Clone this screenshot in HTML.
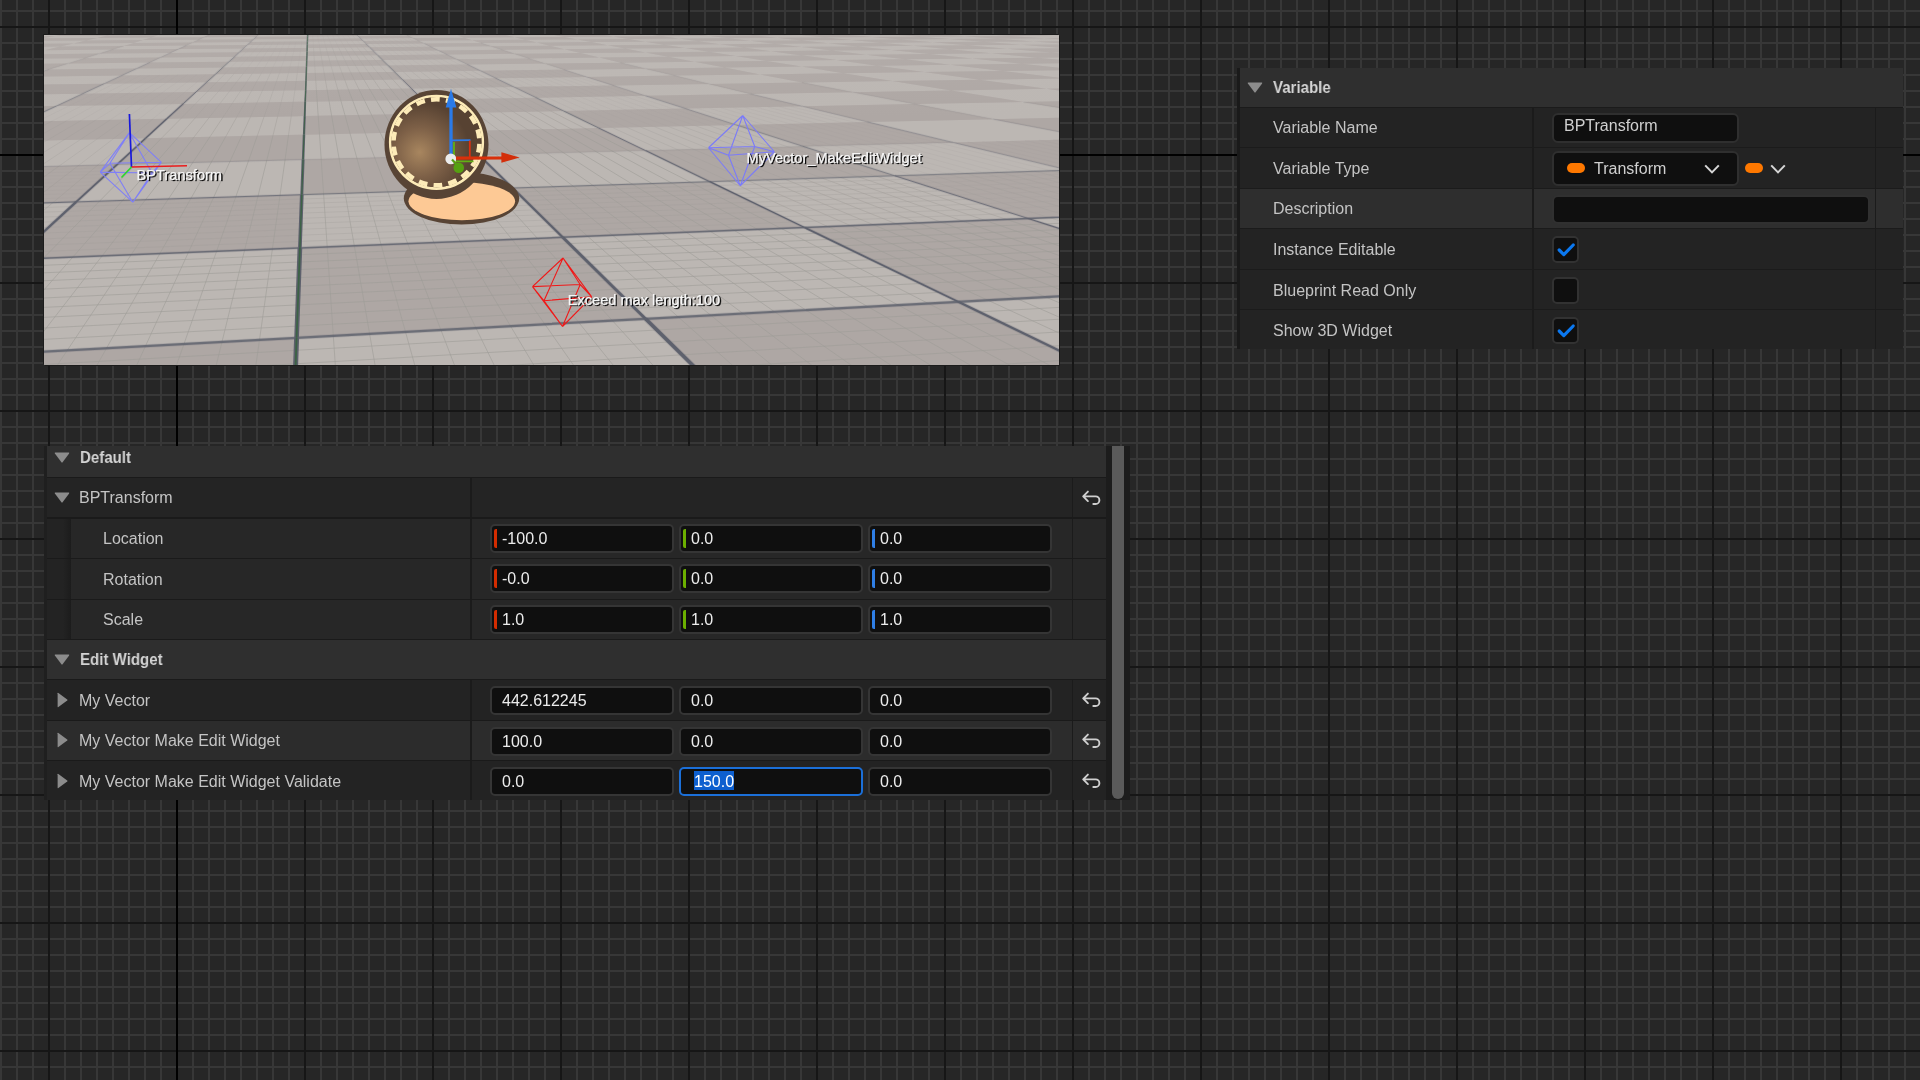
<!DOCTYPE html>
<html><head><meta charset="utf-8"><title>UE Details</title>
<style>
html,body{margin:0;padding:0}
body{width:1920px;height:1080px;overflow:hidden;position:relative;font-family:"Liberation Sans",sans-serif;
background-color:#262626;
background-image:
 linear-gradient(#000,#000), linear-gradient(#000,#000),
 linear-gradient(90deg,#161616 2px,transparent 2px), linear-gradient(180deg,#161616 2px,transparent 2px),
 linear-gradient(90deg,#373737 2px,transparent 2px), linear-gradient(180deg,#373737 2px,transparent 2px);
background-size:2px 100%,100% 2px,128px 128px,128px 128px,16px 16px,16px 16px;
background-position:176px 0,0 154px,48px 0,0 26px,0 0,0 10px;
background-repeat:no-repeat,no-repeat,repeat,repeat,repeat,repeat;}
.r{position:absolute;box-sizing:border-box}
.t{position:absolute;white-space:pre;will-change:transform}
#vp{will-change:transform;position:absolute;left:44px;top:35px;width:1015px;height:330px;overflow:hidden;box-shadow:-1px -1px 0 #1c1c1c,1px 1px 0 #1c1c1c}
</style></head><body>
<div id="vp">
<svg width="1015" height="330" viewBox="44 35 1015 330" style="position:absolute;left:0;top:0;display:block">
<defs><linearGradient id="haze" x1="0" y1="0" x2="0" y2="1"><stop offset="0" stop-color="#c2bdba" stop-opacity="0.25"/><stop offset="0.25" stop-color="#c2bdba" stop-opacity="0"/></linearGradient></defs>
<rect x="44" y="35" width="1015" height="330" fill="#b7b1ae"/>
<path d="M-15131.9 1806.6 L-10077.9 1385.9 L-4041.3 573.5 L-5193.8 636.2ZM-3038.9 382.4 L-2442.2 358.3 L-1702.7 258.8 L-2096.7 271.4ZM-1568.3 209.2 L-1276.5 201.5 L-999.3 164.1 L-1230.2 169.4ZM-995.3 141.7 L-804.6 137.9 L-660.3 118.5 L-822.6 121.4ZM-690.3 105.8 L-549.1 103.6 L-460.8 91.7 L-585.6 93.4ZM-500.8 83.5 L-388.9 82.0 L-329.4 74.0 L-430.7 75.2ZM-371.7 68.3 L-279.1 67.2 L-236.3 61.5 L-321.5 62.3ZM-278.1 57.2 L-199.2 56.5 L-166.8 52.1 L-240.4 52.8ZM-207.2 48.9 L-138.4 48.3 L-113.1 44.9 L-177.7 45.4ZM-151.5 42.3 L-90.5 41.9 L-70.2 39.1 L-127.9 39.5ZM-106.6 37.0 L-51.9 36.7 L-35.3 34.4 L-87.3 34.8ZM-69.7 32.7 L-20.1 32.4 L-6.2 30.5 L-53.7 30.8ZM-38.9 29.1 L6.5 28.8 L18.3 27.2 L-25.2 27.4ZM-12.6 26.0 L29.2 25.7 L39.3 24.4 L-0.9 24.6ZM-4041.3 573.5 L-3092.7 522.0 L-1914.6 337.1 L-2442.2 358.3ZM-1702.7 258.8 L-1342.5 247.3 L-1004.6 194.3 L-1276.5 201.5ZM-999.3 164.1 L-781.4 159.2 L-623.0 134.4 L-804.6 137.9ZM-660.3 118.5 L-504.8 115.8 L-413.2 101.4 L-549.1 103.6ZM-460.8 91.7 L-340.1 90.0 L-280.5 80.6 L-388.9 82.0ZM-329.4 74.0 L-230.9 72.8 L-188.9 66.2 L-279.1 67.2ZM-236.3 61.5 L-153.1 60.6 L-122.0 55.7 L-199.2 56.5ZM-166.8 52.1 L-94.8 51.5 L-70.9 47.7 L-138.4 48.3ZM-113.1 44.9 L-49.7 44.4 L-30.6 41.4 L-90.5 41.9ZM-70.2 39.1 L-13.5 38.7 L1.9 36.3 L-51.9 36.7ZM-35.3 34.4 L16.0 34.1 L28.8 32.1 L-20.1 32.4ZM-6.2 30.5 L40.5 30.2 L51.3 28.5 L6.5 28.8ZM18.3 27.2 L61.3 27.0 L70.5 25.5 L29.2 25.7ZM-6925.2 1123.5 L-4770.8 944.1 L-2298.3 478.8 L-3092.7 522.0ZM-1914.6 337.1 L-1444.6 318.1 L-1012.0 236.7 L-1342.5 247.3ZM-1004.6 194.3 L-750.6 187.5 L-575.6 154.6 L-781.4 159.2ZM-623.0 134.4 L-450.1 131.0 L-355.8 113.2 L-504.8 115.8ZM-413.2 101.4 L-282.4 99.4 L-223.5 88.3 L-340.1 90.0ZM-280.5 80.6 L-175.3 79.3 L-135.1 71.7 L-230.9 72.8ZM-188.9 66.2 L-101.0 65.3 L-71.8 59.8 L-153.1 60.6ZM-122.0 55.7 L-46.5 55.0 L-24.4 50.8 L-94.8 51.5ZM-70.9 47.7 L-4.8 47.2 L12.6 43.9 L-49.7 44.4ZM-30.6 41.4 L28.2 41.0 L42.2 38.3 L-13.5 38.7ZM1.9 36.3 L54.9 35.9 L66.4 33.8 L16.0 34.1ZM28.8 32.1 L77.0 31.8 L86.6 30.0 L40.5 30.2ZM51.3 28.5 L95.5 28.3 L103.7 26.7 L61.3 27.0ZM70.5 25.5 L111.3 25.3 L118.4 24.0 L79.1 24.2ZM-2298.3 478.8 L-1623.3 442.1 L-1023.4 301.2 L-1444.6 318.1ZM-1012.0 236.7 L-707.7 227.0 L-512.9 181.2 L-750.6 187.5ZM-575.6 154.6 L-380.7 150.2 L-285.2 127.7 L-450.1 131.0ZM-355.8 113.2 L-212.9 110.7 L-156.2 97.4 L-282.4 99.4ZM-223.5 88.3 L-110.7 86.7 L-73.3 77.9 L-175.3 79.3ZM-135.1 71.7 L-41.9 70.6 L-15.4 64.3 L-101.0 65.3ZM-71.8 59.8 L7.5 59.0 L27.3 54.3 L-46.5 55.0ZM-24.4 50.8 L44.7 50.2 L60.1 46.6 L-4.8 47.2ZM12.6 43.9 L73.7 43.4 L86.0 40.5 L28.2 41.0ZM42.2 38.3 L97.0 37.9 L107.0 35.6 L54.9 35.9ZM66.4 33.8 L116.2 33.4 L124.5 31.5 L77.0 31.8ZM86.6 30.0 L132.1 29.7 L139.1 28.0 L95.5 28.3ZM103.7 26.7 L145.6 26.5 L151.6 25.1 L111.3 25.3ZM-3205.3 813.8 L-2016.3 714.9 L-1042.7 410.6 L-1623.3 442.1ZM-1023.4 301.2 L-643.7 285.9 L-426.5 218.0 L-707.7 227.0ZM-512.9 181.2 L-289.9 175.3 L-196.1 146.0 L-380.7 150.2ZM-285.2 127.7 L-127.7 124.6 L-75.6 108.4 L-212.9 110.7ZM-156.2 97.4 L-34.6 95.5 L-1.5 85.2 L-110.7 86.7ZM-73.3 77.9 L25.8 76.7 L48.7 69.5 L-41.9 70.6ZM-15.4 64.3 L68.2 63.4 L84.9 58.2 L7.5 59.0ZM27.3 54.3 L99.5 53.6 L112.3 49.6 L44.7 50.2ZM60.1 46.6 L123.7 46.1 L133.8 42.9 L73.7 43.4ZM86.0 40.5 L142.8 40.1 L151.0 37.5 L97.0 37.9ZM107.0 35.6 L158.4 35.2 L165.1 33.1 L116.2 33.4ZM124.5 31.5 L171.3 31.2 L177.0 29.4 L132.1 29.7ZM139.1 28.0 L182.2 27.8 L187.0 26.3 L145.6 26.5ZM151.6 25.1 L191.5 24.9 L195.6 23.6 L157.2 23.8ZM-1042.7 410.6 L-537.9 383.1 L-299.6 272.0 L-643.7 285.9ZM-426.5 218.0 L-165.9 209.7 L-80.4 169.8 L-289.9 175.3ZM-196.1 146.0 L-20.9 142.1 L22.8 121.7 L-127.7 124.6ZM-75.6 108.4 L56.3 106.1 L82.8 93.7 L-34.6 95.5ZM-1.5 85.2 L104.2 83.7 L122.0 75.4 L25.8 76.7ZM48.7 69.5 L136.9 68.5 L149.6 62.5 L68.2 63.4ZM84.9 58.2 L160.6 57.4 L170.2 52.9 L99.5 53.6ZM112.3 49.6 L178.6 49.0 L186.0 45.6 L123.7 46.1ZM133.8 42.9 L192.7 42.5 L198.7 39.7 L142.8 40.1ZM151.0 37.5 L204.0 37.2 L208.9 34.9 L158.4 35.2ZM165.1 33.1 L213.4 32.8 L217.5 30.9 L171.3 31.2ZM177.0 29.4 L221.2 29.2 L224.6 27.6 L182.2 27.8ZM187.0 26.3 L227.8 26.1 L230.8 24.7 L191.5 24.9ZM-1082.5 637.1 L-329.8 574.5 L-95.0 359.1 L-537.9 383.1ZM-299.6 272.0 L13.6 259.4 L76.2 201.9 L-165.9 209.7ZM-80.4 169.8 L117.0 164.6 L145.6 138.3 L-20.9 142.1ZM22.8 121.7 L166.8 118.8 L183.1 103.9 L56.3 106.1ZM82.8 93.7 L196.1 91.9 L206.7 82.2 L104.2 83.7ZM122.0 75.4 L215.5 74.2 L222.8 67.4 L136.9 68.5ZM149.6 62.5 L229.1 61.7 L234.6 56.7 L160.6 57.4ZM170.2 52.9 L239.3 52.3 L243.5 48.4 L178.6 49.0ZM186.0 45.6 L247.2 45.0 L250.6 42.0 L192.7 42.5ZM198.7 39.7 L253.5 39.3 L256.2 36.8 L204.0 37.2ZM208.9 34.9 L258.7 34.5 L260.9 32.5 L213.4 32.8ZM217.5 30.9 L263.0 30.6 L264.8 28.9 L221.2 29.2ZM224.6 27.6 L266.6 27.3 L268.2 25.8 L227.8 26.1ZM230.8 24.7 L269.7 24.5 L271.0 23.2 L233.5 23.4ZM-95.0 359.1 L296.6 337.8 L299.9 247.9 L13.6 259.4ZM76.2 201.9 L301.8 194.7 L303.1 159.6 L117.0 164.6ZM145.6 138.3 L304.0 134.7 L304.7 116.1 L166.8 118.8ZM183.1 103.9 L305.2 101.7 L305.7 90.2 L196.1 91.9ZM206.7 82.2 L306.0 80.8 L306.3 73.0 L215.5 74.2ZM222.8 67.4 L306.5 66.4 L306.7 60.8 L229.1 61.7ZM234.6 56.7 L306.9 55.9 L307.1 51.6 L239.3 52.3ZM243.5 48.4 L307.2 47.9 L307.3 44.5 L247.2 45.0ZM250.6 42.0 L307.4 41.5 L307.5 38.9 L253.5 39.3ZM256.2 36.8 L307.6 36.4 L307.7 34.2 L258.7 34.5ZM260.9 32.5 L307.8 32.2 L307.8 30.3 L263.0 30.6ZM264.8 28.9 L307.9 28.6 L308.0 27.1 L266.6 27.3ZM268.2 25.8 L308.0 25.6 L308.1 24.3 L269.7 24.5ZM289.9 522.9 L809.0 479.7 L645.5 318.8 L296.6 337.8ZM299.9 247.9 L562.7 237.3 L512.6 188.0 L301.8 194.7ZM303.1 159.6 L479.0 155.0 L455.0 131.3 L304.0 134.7ZM304.7 116.1 L436.9 113.5 L422.8 99.7 L305.2 101.7ZM305.7 90.2 L411.5 88.6 L402.3 79.5 L306.0 80.8ZM306.3 73.0 L394.6 71.9 L388.1 65.5 L306.5 66.4ZM306.7 60.8 L382.5 60.0 L377.6 55.2 L306.9 55.9ZM307.1 51.6 L373.4 51.0 L369.6 47.3 L307.2 47.9ZM307.3 44.5 L366.3 44.0 L363.3 41.1 L307.4 41.5ZM307.5 38.9 L360.6 38.5 L358.2 36.1 L307.6 36.4ZM307.7 34.2 L356.0 33.9 L353.9 31.9 L307.8 32.2ZM307.8 30.3 L352.1 30.1 L350.4 28.4 L307.9 28.6ZM308.0 27.1 L348.8 26.8 L347.3 25.4 L308.0 25.6ZM308.1 24.3 L346.0 24.1 L344.7 22.8 L308.1 23.0ZM645.5 318.8 L958.3 301.8 L804.6 227.5 L562.7 237.3ZM512.6 188.0 L709.8 181.7 L645.5 150.6 L479.0 155.0ZM455.0 131.3 L598.9 128.1 L563.7 111.0 L436.9 113.5ZM422.8 99.7 L536.2 97.7 L514.0 87.0 L411.5 88.6ZM402.3 79.5 L495.7 78.2 L480.5 70.8 L394.6 71.9ZM388.1 65.5 L467.6 64.5 L456.4 59.2 L382.5 60.0ZM377.6 55.2 L446.8 54.5 L438.3 50.4 L373.4 51.0ZM369.6 47.3 L430.8 46.8 L424.2 43.5 L366.3 44.0ZM363.3 41.1 L418.2 40.7 L412.8 38.1 L360.6 38.5ZM358.2 36.1 L407.9 35.7 L403.5 33.6 L356.0 33.9ZM353.9 31.9 L399.4 31.6 L395.7 29.8 L352.1 30.1ZM350.4 28.4 L392.3 28.1 L389.1 26.6 L348.8 26.8ZM347.3 25.4 L386.2 25.2 L383.5 23.9 L346.0 24.1ZM1250.1 443.0 L1629.6 411.4 L1240.2 286.5 L958.3 301.8ZM804.6 227.5 L1028.2 218.5 L894.8 175.8 L709.8 181.7ZM645.5 150.6 L803.2 146.4 L736.4 125.0 L598.9 128.1ZM563.7 111.0 L685.5 108.6 L645.4 95.8 L536.2 97.7ZM514.0 87.0 L613.1 85.4 L586.4 76.9 L495.7 78.2ZM480.5 70.8 L564.1 69.7 L545.1 63.6 L467.6 64.5ZM456.4 59.2 L528.7 58.4 L514.4 53.8 L446.8 54.5ZM438.3 50.4 L501.9 49.8 L490.8 46.2 L430.8 46.8ZM424.2 43.5 L481.0 43.1 L472.1 40.2 L418.2 40.7ZM412.8 38.1 L464.1 37.7 L456.9 35.3 L407.9 35.7ZM403.5 33.6 L450.3 33.2 L444.3 31.3 L399.4 31.6ZM395.7 29.8 L438.8 29.5 L433.7 27.9 L392.3 28.1ZM389.1 26.6 L429.0 26.4 L424.6 25.0 L386.2 25.2ZM383.5 23.9 L420.5 23.7 L416.8 22.5 L381.0 22.7ZM1240.2 286.5 L1495.7 272.6 L1235.4 210.2 L1028.2 218.5ZM894.8 175.8 L1068.7 170.2 L952.9 142.4 L803.2 146.4ZM736.4 125.0 L867.8 122.0 L802.5 106.3 L685.5 108.6ZM645.4 95.8 L750.9 94.0 L709.1 83.9 L613.1 85.4ZM586.4 76.9 L674.5 75.6 L645.4 68.7 L564.1 69.7ZM545.1 63.6 L620.7 62.7 L599.3 57.6 L528.7 58.4ZM514.4 53.8 L580.6 53.1 L564.3 49.2 L501.9 49.8ZM490.8 46.2 L549.7 45.7 L536.8 42.6 L481.0 43.1ZM472.1 40.2 L525.2 39.8 L514.7 37.3 L464.1 37.7ZM456.9 35.3 L505.1 35.0 L496.5 32.9 L450.3 33.2ZM444.3 31.3 L488.5 31.0 L481.2 29.3 L438.8 29.5ZM433.7 27.9 L474.5 27.7 L468.3 26.2 L429.0 26.4ZM424.6 25.0 L462.5 24.8 L457.2 23.5 L420.5 23.7ZM1959.5 383.9 L2249.0 359.8 L1728.2 260.0 L1495.7 272.6ZM1235.4 210.2 L1427.9 202.4 L1232.5 165.0 L1068.7 170.2ZM952.9 142.4 L1095.2 138.7 L993.5 119.2 L867.8 122.0ZM802.5 106.3 L915.1 104.1 L852.8 92.2 L750.9 94.0ZM709.1 83.9 L802.1 82.5 L760.1 74.4 L674.5 75.6ZM645.4 68.7 L724.7 67.6 L694.4 61.8 L620.7 62.7ZM599.3 57.6 L668.3 56.8 L645.4 52.5 L580.6 53.1ZM564.3 49.2 L625.3 48.6 L607.5 45.2 L549.7 45.7ZM536.8 42.6 L591.6 42.1 L577.3 39.4 L525.2 39.8ZM514.7 37.3 L564.4 36.9 L552.6 34.7 L505.1 35.0ZM496.5 32.9 L541.9 32.6 L532.1 30.7 L488.5 31.0ZM481.2 29.3 L523.1 29.0 L514.8 27.4 L474.5 27.7ZM468.3 26.2 L507.1 25.9 L500.0 24.6 L462.5 24.8ZM457.2 23.5 L493.3 23.3 L487.2 22.1 L452.2 22.3ZM1728.2 260.0 L1940.8 248.4 L1607.3 195.2 L1427.9 202.4ZM1232.5 165.0 L1387.0 160.0 L1230.6 135.1 L1095.2 138.7ZM993.5 119.2 L1113.9 116.4 L1023.4 102.0 L915.1 104.1ZM852.8 92.2 L951.2 90.5 L892.3 81.1 L802.1 82.5ZM760.1 74.4 L843.3 73.3 L801.8 66.6 L724.7 67.6ZM694.4 61.8 L766.4 61.0 L735.7 56.1 L668.3 56.8ZM645.4 52.5 L708.9 51.8 L685.2 48.0 L625.3 48.6ZM607.5 45.2 L664.2 44.7 L645.4 41.7 L591.6 42.1ZM577.3 39.4 L628.5 39.0 L613.3 36.5 L564.4 36.9ZM552.6 34.7 L599.4 34.3 L586.7 32.3 L541.9 32.6ZM532.1 30.7 L575.1 30.5 L564.4 28.7 L523.1 29.0ZM514.8 27.4 L554.6 27.2 L545.5 25.7 L507.1 25.9ZM500.0 24.6 L537.0 24.4 L529.1 23.1 L493.3 23.3ZM2505.1 338.5 L2733.2 319.5 L2135.9 237.8 L1940.8 248.4ZM1607.3 195.2 L1774.8 188.5 L1532.9 155.4 L1387.0 160.0ZM1230.6 135.1 L1359.6 131.7 L1229.3 113.8 L1113.9 116.4ZM1023.4 102.0 L1127.7 100.0 L1046.4 88.8 L951.2 90.5ZM892.3 81.1 L979.7 79.7 L924.1 72.1 L843.3 73.3ZM801.8 66.6 L877.0 65.7 L836.7 60.1 L766.4 61.0ZM735.7 56.1 L801.6 55.4 L771.0 51.2 L708.9 51.8ZM685.2 48.0 L743.9 47.5 L719.9 44.2 L664.2 44.7ZM645.4 41.7 L698.3 41.2 L678.9 38.6 L628.5 39.0ZM613.3 36.5 L661.4 36.2 L645.4 34.0 L599.4 34.3ZM586.7 32.3 L630.9 32.0 L617.5 30.2 L575.1 30.5ZM564.4 28.7 L605.2 28.5 L593.8 26.9 L554.6 27.2ZM545.5 25.7 L583.3 25.5 L573.6 24.2 L537.0 24.4ZM529.1 23.1 L564.5 22.9 L556.0 21.8 L521.8 21.9ZM2135.9 237.8 L2315.6 228.1 L1931.7 182.1 L1774.8 188.5ZM1532.9 155.4 L1671.1 151.0 L1482.6 128.4 L1359.6 131.7ZM1229.3 113.8 L1340.0 111.3 L1228.3 98.0 L1127.7 100.0ZM1046.4 88.8 L1138.4 87.2 L1064.5 78.4 L979.7 79.7ZM924.1 72.1 L1002.8 71.0 L950.3 64.7 L877.0 65.7ZM836.7 60.1 L905.3 59.3 L866.1 54.7 L801.6 55.4ZM771.0 51.2 L831.8 50.5 L801.5 46.9 L743.9 47.5ZM719.9 44.2 L774.5 43.7 L750.3 40.8 L698.3 41.2ZM678.9 38.6 L728.5 38.2 L708.8 35.8 L661.4 36.2ZM645.4 34.0 L690.8 33.7 L674.4 31.7 L630.9 32.0ZM617.5 30.2 L659.3 29.9 L645.4 28.2 L605.2 28.5ZM593.8 26.9 L632.6 26.7 L620.7 25.3 L583.3 25.5ZM573.6 24.2 L609.7 24.0 L599.4 22.7 L564.5 22.9ZM2937.6 302.5 L3122.0 287.1 L2481.6 219.0 L2315.6 228.1ZM1931.7 182.1 L2078.8 176.2 L1802.0 146.8 L1671.1 151.0ZM1482.6 128.4 L1600.1 125.3 L1446.3 108.9 L1340.0 111.3ZM1228.3 98.0 L1325.2 96.1 L1227.5 85.7 L1138.4 87.2ZM1064.5 78.4 L1146.9 77.1 L1079.3 69.9 L1002.8 71.0ZM950.3 64.7 L1021.8 63.8 L972.3 58.5 L905.3 59.3ZM866.1 54.7 L929.2 54.0 L891.4 49.9 L831.8 50.5ZM801.5 46.9 L858.0 46.4 L828.1 43.2 L774.5 43.7ZM750.3 40.8 L801.4 40.4 L777.3 37.8 L728.5 38.2ZM708.8 35.8 L755.4 35.5 L735.5 33.4 L690.8 33.7ZM674.4 31.7 L717.3 31.4 L700.5 29.6 L659.3 29.9ZM645.4 28.2 L685.1 28.0 L670.9 26.5 L632.6 26.7ZM620.7 25.3 L657.7 25.1 L645.4 23.8 L609.7 24.0ZM599.4 22.7 L634.0 22.6 L623.3 21.4 L589.8 21.6ZM2481.6 219.0 L2635.5 210.7 L2217.1 170.6 L2078.8 176.2ZM1802.0 146.8 L1926.2 142.8 L1712.3 122.3 L1600.1 125.3ZM1446.3 108.9 L1548.4 106.6 L1418.8 94.2 L1325.2 96.1ZM1227.5 85.7 L1313.7 84.2 L1226.9 75.9 L1146.9 77.1ZM1079.3 69.9 L1153.8 68.9 L1091.5 62.9 L1021.8 63.8ZM972.3 58.5 L1037.8 57.8 L991.0 53.3 L929.2 54.0ZM891.4 49.9 L949.8 49.3 L913.4 45.8 L858.0 46.4ZM828.1 43.2 L880.8 42.7 L851.6 39.9 L801.4 40.4ZM777.3 37.8 L825.2 37.4 L801.3 35.1 L755.4 35.5ZM735.5 33.4 L779.5 33.0 L759.5 31.1 L717.3 31.4ZM700.5 29.6 L741.2 29.4 L724.3 27.8 L685.1 28.0ZM670.9 26.5 L708.7 26.3 L694.2 24.9 L657.7 25.1ZM645.4 23.8 L680.7 23.6 L668.2 22.4 L634.0 22.6ZM3289.0 273.2 L3441.1 260.6 L2778.5 202.9 L2635.5 210.7ZM2217.1 170.6 L2347.3 165.4 L2044.3 139.0 L1926.2 142.8ZM1712.3 122.3 L1819.8 119.5 L1646.7 104.4 L1548.4 106.6ZM1418.8 94.2 L1509.2 92.5 L1397.3 82.7 L1313.7 84.2ZM1226.9 75.9 L1304.6 74.6 L1226.4 67.8 L1153.8 68.9ZM1091.5 62.9 L1159.5 62.0 L1101.8 57.0 L1037.8 57.8ZM991.0 53.3 L1051.4 52.6 L1007.1 48.8 L949.8 49.3ZM913.4 45.8 L967.7 45.3 L932.5 42.3 L880.8 42.7ZM851.6 39.9 L901.0 39.5 L872.4 37.0 L825.2 37.4ZM801.3 35.1 L846.5 34.8 L822.9 32.7 L779.5 33.0ZM759.5 31.1 L801.2 30.8 L781.3 29.1 L741.2 29.4ZM724.3 27.8 L763.0 27.5 L746.0 26.0 L708.7 26.3ZM694.2 24.9 L730.3 24.7 L715.6 23.4 L680.7 23.6ZM668.2 22.4 L701.9 22.2 L689.2 21.1 L656.4 21.3ZM2778.5 202.9 L2911.7 195.7 L2470.1 160.4 L2347.3 165.4ZM2044.3 139.0 L2156.7 135.4 L1922.6 116.8 L1819.8 119.5ZM1646.7 104.4 L1741.2 102.3 L1596.5 90.7 L1509.2 92.5ZM1397.3 82.7 L1478.4 81.3 L1380.1 73.5 L1304.6 74.6ZM1226.4 67.8 L1297.0 66.8 L1225.9 61.2 L1159.5 62.0ZM1101.8 57.0 L1164.4 56.3 L1110.6 52.0 L1051.4 52.6ZM1007.1 48.8 L1063.2 48.2 L1021.0 44.8 L967.7 45.3ZM932.5 42.3 L983.4 41.8 L949.5 39.1 L901.0 39.5ZM872.4 37.0 L918.9 36.7 L891.0 34.4 L846.5 34.8ZM822.9 32.7 L865.6 32.4 L842.3 30.6 L801.2 30.8ZM781.3 29.1 L820.9 28.9 L801.2 27.3 L763.0 27.5ZM746.0 26.0 L782.9 25.8 L765.9 24.5 L730.3 24.7ZM715.6 23.4 L750.1 23.2 L735.4 22.0 L701.9 22.2ZM3580.2 249.0 L3707.8 238.4 L3036.2 188.9 L2911.7 195.7ZM2470.1 160.4 L2586.2 155.8 L2263.7 132.0 L2156.7 135.4ZM1922.6 116.8 L2021.3 114.1 L1832.3 100.2 L1741.2 102.3ZM1596.5 90.7 L1680.9 89.1 L1556.9 79.9 L1478.4 81.3ZM1380.1 73.5 L1453.5 72.3 L1365.9 65.9 L1297.0 66.8ZM1225.9 61.2 L1290.7 60.3 L1225.6 55.5 L1164.4 56.3ZM1110.6 52.0 L1168.5 51.3 L1118.2 47.6 L1063.2 48.2ZM1021.0 44.8 L1073.4 44.3 L1033.3 41.4 L983.4 41.8ZM949.5 39.1 L997.2 38.7 L964.6 36.3 L918.9 36.7ZM891.0 34.4 L934.9 34.1 L907.7 32.1 L865.6 32.4ZM842.3 30.6 L882.9 30.3 L860.0 28.6 L820.9 28.9ZM801.2 27.3 L838.8 27.0 L819.3 25.6 L782.9 25.8ZM765.9 24.5 L801.1 24.3 L784.2 23.0 L750.1 23.2ZM735.4 22.0 L768.4 21.9 L753.6 20.8 L721.6 20.9ZM3036.2 188.9 L3152.7 182.6 L2696.1 151.3 L2586.2 155.8ZM2263.7 132.0 L2365.8 128.7 L2115.9 111.6 L2021.3 114.1ZM1832.3 100.2 L1920.1 98.2 L1762.6 87.5 L1680.9 89.1ZM1556.9 79.9 L1633.2 78.6 L1524.9 71.2 L1453.5 72.3ZM1365.9 65.9 L1433.0 64.9 L1354.0 59.5 L1290.7 60.3ZM1225.6 55.5 L1285.4 54.8 L1225.3 50.7 L1168.5 51.3ZM1118.2 47.6 L1172.1 47.1 L1124.8 43.8 L1073.4 44.3ZM1033.3 41.4 L1082.4 40.9 L1044.1 38.3 L997.2 38.7ZM964.6 36.3 L1009.5 35.9 L978.0 33.8 L934.9 34.1ZM907.7 32.1 L949.2 31.8 L922.8 30.0 L882.9 30.3ZM860.0 28.6 L898.5 28.3 L876.1 26.8 L838.8 27.0ZM819.3 25.6 L855.2 25.4 L835.9 24.1 L801.1 24.3ZM784.2 23.0 L817.9 22.8 L801.1 21.7 L768.4 21.9ZM3825.3 228.6 L3933.9 219.6 L3261.9 176.6 L3152.7 182.6ZM2696.1 151.3 L2800.2 147.1 L2463.3 125.6 L2365.8 128.7ZM2115.9 111.6 L2206.7 109.2 L2004.7 96.3 L1920.1 98.2ZM1762.6 87.5 L1841.6 85.9 L1707.2 77.3 L1633.2 78.6ZM1524.9 71.2 L1594.4 70.1 L1498.4 64.0 L1433.0 64.9ZM1354.0 59.5 L1415.8 58.7 L1344.0 54.1 L1285.4 54.8ZM1225.3 50.7 L1280.9 50.1 L1225.0 46.5 L1172.1 47.1ZM1124.8 43.8 L1175.2 43.3 L1130.6 40.5 L1082.4 40.9ZM1044.1 38.3 L1090.3 37.9 L1053.8 35.6 L1009.5 35.9ZM978.0 33.8 L1020.6 33.5 L990.2 31.5 L949.2 31.8ZM922.8 30.0 L962.3 29.7 L936.6 28.1 L898.5 28.3ZM876.1 26.8 L912.8 26.6 L890.8 25.2 L855.2 25.4ZM835.9 24.1 L870.3 23.9 L851.2 22.6 L817.9 22.8ZM801.1 21.7 L833.4 21.5 L816.7 20.4 L785.3 20.6ZM3261.9 176.6 L3364.7 171.1 L2899.0 143.2 L2800.2 147.1ZM2463.3 125.6 L2556.5 122.6 L2294.0 106.9 L2206.7 109.2ZM2004.7 96.3 L2086.4 94.5 L1918.2 84.4 L1841.6 85.9ZM1707.2 77.3 L1779.0 76.1 L1662.0 69.1 L1594.4 70.1ZM1498.4 64.0 L1562.3 63.1 L1476.2 57.9 L1415.8 58.7ZM1344.0 54.1 L1401.3 53.4 L1335.3 49.5 L1280.9 50.1ZM1225.0 46.5 L1276.9 46.0 L1224.8 42.9 L1175.2 43.3ZM1130.6 40.5 L1178.0 40.1 L1135.7 37.5 L1090.3 37.9ZM1053.8 35.6 L1097.4 35.2 L1062.5 33.2 L1020.6 33.5ZM990.2 31.5 L1030.5 31.2 L1001.2 29.5 L962.3 29.7ZM936.6 28.1 L974.1 27.9 L949.1 26.4 L912.8 26.6ZM890.8 25.2 L925.9 25.0 L904.3 23.7 L870.3 23.9ZM851.2 22.6 L884.1 22.5 L865.3 21.3 L833.4 21.5ZM4034.5 211.2 L4128.0 203.4 L3461.4 165.8 L3364.7 171.1ZM2899.0 143.2 L2992.9 139.4 L2645.7 119.8 L2556.5 122.6ZM2294.0 106.9 L2378.0 104.7 L2165.3 92.7 L2086.4 94.5ZM1918.2 84.4 L1992.3 83.0 L1848.8 74.9 L1779.0 76.1ZM1662.0 69.1 L1727.9 68.0 L1624.6 62.2 L1562.3 63.1ZM1476.2 57.9 L1535.3 57.2 L1457.3 52.8 L1401.3 53.4ZM1335.3 49.5 L1388.7 48.9 L1327.8 45.5 L1276.9 46.0ZM1224.8 42.9 L1273.4 42.4 L1224.6 39.7 L1178.0 40.1ZM1135.7 37.5 L1180.4 37.2 L1140.3 34.9 L1097.4 35.2ZM1062.5 33.2 L1103.8 32.8 L1070.3 31.0 L1030.5 31.2ZM1001.2 29.5 L1039.5 29.2 L1011.1 27.6 L974.1 27.9ZM949.1 26.4 L984.9 26.1 L960.5 24.8 L925.9 25.0ZM904.3 23.7 L937.9 23.5 L916.7 22.3 L884.1 22.5ZM865.3 21.3 L897.0 21.2 L878.4 20.1 L847.7 20.3ZM3461.4 165.8 L3552.6 160.8 L3082.3 135.8 L2992.9 139.4ZM2645.7 119.8 L2731.0 117.1 L2458.8 102.6 L2378.0 104.7ZM2165.3 92.7 L2241.6 91.0 L2064.2 81.5 L1992.3 83.0ZM1848.8 74.9 L1916.7 73.7 L1792.1 67.0 L1727.9 68.0ZM1624.6 62.2 L1685.4 61.4 L1593.0 56.4 L1535.3 57.2ZM1457.3 52.8 L1512.2 52.1 L1441.0 48.3 L1388.7 48.9ZM1327.8 45.5 L1377.8 45.0 L1321.2 42.0 L1273.4 42.4ZM1224.6 39.7 L1270.4 39.2 L1224.4 36.8 L1180.4 37.2ZM1140.3 34.9 L1182.6 34.6 L1144.5 32.5 L1103.8 32.8ZM1070.3 31.0 L1109.5 30.7 L1077.4 29.0 L1039.5 29.2ZM1011.1 27.6 L1047.7 27.4 L1020.3 25.9 L984.9 26.1ZM960.5 24.8 L994.8 24.6 L971.1 23.3 L937.9 23.5ZM916.7 22.3 L948.9 22.1 L928.2 21.0 L897.0 21.2Z" fill="#bcb7b3"/>
<path d="M-5193.8 636.2 L-4041.3 573.5 L-2442.2 358.3 L-3038.9 382.4ZM-2096.7 271.4 L-1702.7 258.8 L-1276.5 201.5 L-1568.3 209.2ZM-1230.2 169.4 L-999.3 164.1 L-804.6 137.9 L-995.3 141.7ZM-822.6 121.4 L-660.3 118.5 L-549.1 103.6 L-690.3 105.8ZM-585.6 93.4 L-460.8 91.7 L-388.9 82.0 L-500.8 83.5ZM-430.7 75.2 L-329.4 74.0 L-279.1 67.2 L-371.7 68.3ZM-321.5 62.3 L-236.3 61.5 L-199.2 56.5 L-278.1 57.2ZM-240.4 52.8 L-166.8 52.1 L-138.4 48.3 L-207.2 48.9ZM-177.7 45.4 L-113.1 44.9 L-90.5 41.9 L-151.5 42.3ZM-127.9 39.5 L-70.2 39.1 L-51.9 36.7 L-106.6 37.0ZM-87.3 34.8 L-35.3 34.4 L-20.1 32.4 L-69.7 32.7ZM-53.7 30.8 L-6.2 30.5 L6.5 28.8 L-38.9 29.1ZM-25.2 27.4 L18.3 27.2 L29.2 25.7 L-12.6 26.0ZM-10077.9 1385.9 L-6925.2 1123.5 L-3092.7 522.0 L-4041.3 573.5ZM-2442.2 358.3 L-1914.6 337.1 L-1342.5 247.3 L-1702.7 258.8ZM-1276.5 201.5 L-1004.6 194.3 L-781.4 159.2 L-999.3 164.1ZM-804.6 137.9 L-623.0 134.4 L-504.8 115.8 L-660.3 118.5ZM-549.1 103.6 L-413.2 101.4 L-340.1 90.0 L-460.8 91.7ZM-388.9 82.0 L-280.5 80.6 L-230.9 72.8 L-329.4 74.0ZM-279.1 67.2 L-188.9 66.2 L-153.1 60.6 L-236.3 61.5ZM-199.2 56.5 L-122.0 55.7 L-94.8 51.5 L-166.8 52.1ZM-138.4 48.3 L-70.9 47.7 L-49.7 44.4 L-113.1 44.9ZM-90.5 41.9 L-30.6 41.4 L-13.5 38.7 L-70.2 39.1ZM-51.9 36.7 L1.9 36.3 L16.0 34.1 L-35.3 34.4ZM-20.1 32.4 L28.8 32.1 L40.5 30.2 L-6.2 30.5ZM6.5 28.8 L51.3 28.5 L61.3 27.0 L18.3 27.2ZM29.2 25.7 L70.5 25.5 L79.1 24.2 L39.3 24.4ZM-3092.7 522.0 L-2298.3 478.8 L-1444.6 318.1 L-1914.6 337.1ZM-1342.5 247.3 L-1012.0 236.7 L-750.6 187.5 L-1004.6 194.3ZM-781.4 159.2 L-575.6 154.6 L-450.1 131.0 L-623.0 134.4ZM-504.8 115.8 L-355.8 113.2 L-282.4 99.4 L-413.2 101.4ZM-340.1 90.0 L-223.5 88.3 L-175.3 79.3 L-280.5 80.6ZM-230.9 72.8 L-135.1 71.7 L-101.0 65.3 L-188.9 66.2ZM-153.1 60.6 L-71.8 59.8 L-46.5 55.0 L-122.0 55.7ZM-94.8 51.5 L-24.4 50.8 L-4.8 47.2 L-70.9 47.7ZM-49.7 44.4 L12.6 43.9 L28.2 41.0 L-30.6 41.4ZM-13.5 38.7 L42.2 38.3 L54.9 35.9 L1.9 36.3ZM16.0 34.1 L66.4 33.8 L77.0 31.8 L28.8 32.1ZM40.5 30.2 L86.6 30.0 L95.5 28.3 L51.3 28.5ZM61.3 27.0 L103.7 26.7 L111.3 25.3 L70.5 25.5ZM-4770.8 944.1 L-3205.3 813.8 L-1623.3 442.1 L-2298.3 478.8ZM-1444.6 318.1 L-1023.4 301.2 L-707.7 227.0 L-1012.0 236.7ZM-750.6 187.5 L-512.9 181.2 L-380.7 150.2 L-575.6 154.6ZM-450.1 131.0 L-285.2 127.7 L-212.9 110.7 L-355.8 113.2ZM-282.4 99.4 L-156.2 97.4 L-110.7 86.7 L-223.5 88.3ZM-175.3 79.3 L-73.3 77.9 L-41.9 70.6 L-135.1 71.7ZM-101.0 65.3 L-15.4 64.3 L7.5 59.0 L-71.8 59.8ZM-46.5 55.0 L27.3 54.3 L44.7 50.2 L-24.4 50.8ZM-4.8 47.2 L60.1 46.6 L73.7 43.4 L12.6 43.9ZM28.2 41.0 L86.0 40.5 L97.0 37.9 L42.2 38.3ZM54.9 35.9 L107.0 35.6 L116.2 33.4 L66.4 33.8ZM77.0 31.8 L124.5 31.5 L132.1 29.7 L86.6 30.0ZM95.5 28.3 L139.1 28.0 L145.6 26.5 L103.7 26.7ZM111.3 25.3 L151.6 25.1 L157.2 23.8 L118.4 24.0ZM-1623.3 442.1 L-1042.7 410.6 L-643.7 285.9 L-1023.4 301.2ZM-707.7 227.0 L-426.5 218.0 L-289.9 175.3 L-512.9 181.2ZM-380.7 150.2 L-196.1 146.0 L-127.7 124.6 L-285.2 127.7ZM-212.9 110.7 L-75.6 108.4 L-34.6 95.5 L-156.2 97.4ZM-110.7 86.7 L-1.5 85.2 L25.8 76.7 L-73.3 77.9ZM-41.9 70.6 L48.7 69.5 L68.2 63.4 L-15.4 64.3ZM7.5 59.0 L84.9 58.2 L99.5 53.6 L27.3 54.3ZM44.7 50.2 L112.3 49.6 L123.7 46.1 L60.1 46.6ZM73.7 43.4 L133.8 42.9 L142.8 40.1 L86.0 40.5ZM97.0 37.9 L151.0 37.5 L158.4 35.2 L107.0 35.6ZM116.2 33.4 L165.1 33.1 L171.3 31.2 L124.5 31.5ZM132.1 29.7 L177.0 29.4 L182.2 27.8 L139.1 28.0ZM145.6 26.5 L187.0 26.3 L191.5 24.9 L151.6 25.1ZM-2016.3 714.9 L-1082.5 637.1 L-537.9 383.1 L-1042.7 410.6ZM-643.7 285.9 L-299.6 272.0 L-165.9 209.7 L-426.5 218.0ZM-289.9 175.3 L-80.4 169.8 L-20.9 142.1 L-196.1 146.0ZM-127.7 124.6 L22.8 121.7 L56.3 106.1 L-75.6 108.4ZM-34.6 95.5 L82.8 93.7 L104.2 83.7 L-1.5 85.2ZM25.8 76.7 L122.0 75.4 L136.9 68.5 L48.7 69.5ZM68.2 63.4 L149.6 62.5 L160.6 57.4 L84.9 58.2ZM99.5 53.6 L170.2 52.9 L178.6 49.0 L112.3 49.6ZM123.7 46.1 L186.0 45.6 L192.7 42.5 L133.8 42.9ZM142.8 40.1 L198.7 39.7 L204.0 37.2 L151.0 37.5ZM158.4 35.2 L208.9 34.9 L213.4 32.8 L165.1 33.1ZM171.3 31.2 L217.5 30.9 L221.2 29.2 L177.0 29.4ZM182.2 27.8 L224.6 27.6 L227.8 26.1 L187.0 26.3ZM191.5 24.9 L230.8 24.7 L233.5 23.4 L195.6 23.6ZM-537.9 383.1 L-95.0 359.1 L13.6 259.4 L-299.6 272.0ZM-165.9 209.7 L76.2 201.9 L117.0 164.6 L-80.4 169.8ZM-20.9 142.1 L145.6 138.3 L166.8 118.8 L22.8 121.7ZM56.3 106.1 L183.1 103.9 L196.1 91.9 L82.8 93.7ZM104.2 83.7 L206.7 82.2 L215.5 74.2 L122.0 75.4ZM136.9 68.5 L222.8 67.4 L229.1 61.7 L149.6 62.5ZM160.6 57.4 L234.6 56.7 L239.3 52.3 L170.2 52.9ZM178.6 49.0 L243.5 48.4 L247.2 45.0 L186.0 45.6ZM192.7 42.5 L250.6 42.0 L253.5 39.3 L198.7 39.7ZM204.0 37.2 L256.2 36.8 L258.7 34.5 L208.9 34.9ZM213.4 32.8 L260.9 32.5 L263.0 30.6 L217.5 30.9ZM221.2 29.2 L264.8 28.9 L266.6 27.3 L224.6 27.6ZM227.8 26.1 L268.2 25.8 L269.7 24.5 L230.8 24.7ZM-329.8 574.5 L289.9 522.9 L296.6 337.8 L-95.0 359.1ZM13.6 259.4 L299.9 247.9 L301.8 194.7 L76.2 201.9ZM117.0 164.6 L303.1 159.6 L304.0 134.7 L145.6 138.3ZM166.8 118.8 L304.7 116.1 L305.2 101.7 L183.1 103.9ZM196.1 91.9 L305.7 90.2 L306.0 80.8 L206.7 82.2ZM215.5 74.2 L306.3 73.0 L306.5 66.4 L222.8 67.4ZM229.1 61.7 L306.7 60.8 L306.9 55.9 L234.6 56.7ZM239.3 52.3 L307.1 51.6 L307.2 47.9 L243.5 48.4ZM247.2 45.0 L307.3 44.5 L307.4 41.5 L250.6 42.0ZM253.5 39.3 L307.5 38.9 L307.6 36.4 L256.2 36.8ZM258.7 34.5 L307.7 34.2 L307.8 32.2 L260.9 32.5ZM263.0 30.6 L307.8 30.3 L307.9 28.6 L264.8 28.9ZM266.6 27.3 L308.0 27.1 L308.0 25.6 L268.2 25.8ZM269.7 24.5 L308.1 24.3 L308.1 23.0 L271.0 23.2ZM296.6 337.8 L645.5 318.8 L562.7 237.3 L299.9 247.9ZM301.8 194.7 L512.6 188.0 L479.0 155.0 L303.1 159.6ZM304.0 134.7 L455.0 131.3 L436.9 113.5 L304.7 116.1ZM305.2 101.7 L422.8 99.7 L411.5 88.6 L305.7 90.2ZM306.0 80.8 L402.3 79.5 L394.6 71.9 L306.3 73.0ZM306.5 66.4 L388.1 65.5 L382.5 60.0 L306.7 60.8ZM306.9 55.9 L377.6 55.2 L373.4 51.0 L307.1 51.6ZM307.2 47.9 L369.6 47.3 L366.3 44.0 L307.3 44.5ZM307.4 41.5 L363.3 41.1 L360.6 38.5 L307.5 38.9ZM307.6 36.4 L358.2 36.1 L356.0 33.9 L307.7 34.2ZM307.8 32.2 L353.9 31.9 L352.1 30.1 L307.8 30.3ZM307.9 28.6 L350.4 28.4 L348.8 26.8 L308.0 27.1ZM308.0 25.6 L347.3 25.4 L346.0 24.1 L308.1 24.3ZM809.0 479.7 L1250.1 443.0 L958.3 301.8 L645.5 318.8ZM562.7 237.3 L804.6 227.5 L709.8 181.7 L512.6 188.0ZM479.0 155.0 L645.5 150.6 L598.9 128.1 L455.0 131.3ZM436.9 113.5 L563.7 111.0 L536.2 97.7 L422.8 99.7ZM411.5 88.6 L514.0 87.0 L495.7 78.2 L402.3 79.5ZM394.6 71.9 L480.5 70.8 L467.6 64.5 L388.1 65.5ZM382.5 60.0 L456.4 59.2 L446.8 54.5 L377.6 55.2ZM373.4 51.0 L438.3 50.4 L430.8 46.8 L369.6 47.3ZM366.3 44.0 L424.2 43.5 L418.2 40.7 L363.3 41.1ZM360.6 38.5 L412.8 38.1 L407.9 35.7 L358.2 36.1ZM356.0 33.9 L403.5 33.6 L399.4 31.6 L353.9 31.9ZM352.1 30.1 L395.7 29.8 L392.3 28.1 L350.4 28.4ZM348.8 26.8 L389.1 26.6 L386.2 25.2 L347.3 25.4ZM346.0 24.1 L383.5 23.9 L381.0 22.7 L344.7 22.8ZM958.3 301.8 L1240.2 286.5 L1028.2 218.5 L804.6 227.5ZM709.8 181.7 L894.8 175.8 L803.2 146.4 L645.5 150.6ZM598.9 128.1 L736.4 125.0 L685.5 108.6 L563.7 111.0ZM536.2 97.7 L645.4 95.8 L613.1 85.4 L514.0 87.0ZM495.7 78.2 L586.4 76.9 L564.1 69.7 L480.5 70.8ZM467.6 64.5 L545.1 63.6 L528.7 58.4 L456.4 59.2ZM446.8 54.5 L514.4 53.8 L501.9 49.8 L438.3 50.4ZM430.8 46.8 L490.8 46.2 L481.0 43.1 L424.2 43.5ZM418.2 40.7 L472.1 40.2 L464.1 37.7 L412.8 38.1ZM407.9 35.7 L456.9 35.3 L450.3 33.2 L403.5 33.6ZM399.4 31.6 L444.3 31.3 L438.8 29.5 L395.7 29.8ZM392.3 28.1 L433.7 27.9 L429.0 26.4 L389.1 26.6ZM386.2 25.2 L424.6 25.0 L420.5 23.7 L383.5 23.9ZM1629.6 411.4 L1959.5 383.9 L1495.7 272.6 L1240.2 286.5ZM1028.2 218.5 L1235.4 210.2 L1068.7 170.2 L894.8 175.8ZM803.2 146.4 L952.9 142.4 L867.8 122.0 L736.4 125.0ZM685.5 108.6 L802.5 106.3 L750.9 94.0 L645.4 95.8ZM613.1 85.4 L709.1 83.9 L674.5 75.6 L586.4 76.9ZM564.1 69.7 L645.4 68.7 L620.7 62.7 L545.1 63.6ZM528.7 58.4 L599.3 57.6 L580.6 53.1 L514.4 53.8ZM501.9 49.8 L564.3 49.2 L549.7 45.7 L490.8 46.2ZM481.0 43.1 L536.8 42.6 L525.2 39.8 L472.1 40.2ZM464.1 37.7 L514.7 37.3 L505.1 35.0 L456.9 35.3ZM450.3 33.2 L496.5 32.9 L488.5 31.0 L444.3 31.3ZM438.8 29.5 L481.2 29.3 L474.5 27.7 L433.7 27.9ZM429.0 26.4 L468.3 26.2 L462.5 24.8 L424.6 25.0ZM420.5 23.7 L457.2 23.5 L452.2 22.3 L416.8 22.5ZM1495.7 272.6 L1728.2 260.0 L1427.9 202.4 L1235.4 210.2ZM1068.7 170.2 L1232.5 165.0 L1095.2 138.7 L952.9 142.4ZM867.8 122.0 L993.5 119.2 L915.1 104.1 L802.5 106.3ZM750.9 94.0 L852.8 92.2 L802.1 82.5 L709.1 83.9ZM674.5 75.6 L760.1 74.4 L724.7 67.6 L645.4 68.7ZM620.7 62.7 L694.4 61.8 L668.3 56.8 L599.3 57.6ZM580.6 53.1 L645.4 52.5 L625.3 48.6 L564.3 49.2ZM549.7 45.7 L607.5 45.2 L591.6 42.1 L536.8 42.6ZM525.2 39.8 L577.3 39.4 L564.4 36.9 L514.7 37.3ZM505.1 35.0 L552.6 34.7 L541.9 32.6 L496.5 32.9ZM488.5 31.0 L532.1 30.7 L523.1 29.0 L481.2 29.3ZM474.5 27.7 L514.8 27.4 L507.1 25.9 L468.3 26.2ZM462.5 24.8 L500.0 24.6 L493.3 23.3 L457.2 23.5ZM2249.0 359.8 L2505.1 338.5 L1940.8 248.4 L1728.2 260.0ZM1427.9 202.4 L1607.3 195.2 L1387.0 160.0 L1232.5 165.0ZM1095.2 138.7 L1230.6 135.1 L1113.9 116.4 L993.5 119.2ZM915.1 104.1 L1023.4 102.0 L951.2 90.5 L852.8 92.2ZM802.1 82.5 L892.3 81.1 L843.3 73.3 L760.1 74.4ZM724.7 67.6 L801.8 66.6 L766.4 61.0 L694.4 61.8ZM668.3 56.8 L735.7 56.1 L708.9 51.8 L645.4 52.5ZM625.3 48.6 L685.2 48.0 L664.2 44.7 L607.5 45.2ZM591.6 42.1 L645.4 41.7 L628.5 39.0 L577.3 39.4ZM564.4 36.9 L613.3 36.5 L599.4 34.3 L552.6 34.7ZM541.9 32.6 L586.7 32.3 L575.1 30.5 L532.1 30.7ZM523.1 29.0 L564.4 28.7 L554.6 27.2 L514.8 27.4ZM507.1 25.9 L545.5 25.7 L537.0 24.4 L500.0 24.6ZM493.3 23.3 L529.1 23.1 L521.8 21.9 L487.2 22.1ZM1940.8 248.4 L2135.9 237.8 L1774.8 188.5 L1607.3 195.2ZM1387.0 160.0 L1532.9 155.4 L1359.6 131.7 L1230.6 135.1ZM1113.9 116.4 L1229.3 113.8 L1127.7 100.0 L1023.4 102.0ZM951.2 90.5 L1046.4 88.8 L979.7 79.7 L892.3 81.1ZM843.3 73.3 L924.1 72.1 L877.0 65.7 L801.8 66.6ZM766.4 61.0 L836.7 60.1 L801.6 55.4 L735.7 56.1ZM708.9 51.8 L771.0 51.2 L743.9 47.5 L685.2 48.0ZM664.2 44.7 L719.9 44.2 L698.3 41.2 L645.4 41.7ZM628.5 39.0 L678.9 38.6 L661.4 36.2 L613.3 36.5ZM599.4 34.3 L645.4 34.0 L630.9 32.0 L586.7 32.3ZM575.1 30.5 L617.5 30.2 L605.2 28.5 L564.4 28.7ZM554.6 27.2 L593.8 26.9 L583.3 25.5 L545.5 25.7ZM537.0 24.4 L573.6 24.2 L564.5 22.9 L529.1 23.1ZM2733.2 319.5 L2937.6 302.5 L2315.6 228.1 L2135.9 237.8ZM1774.8 188.5 L1931.7 182.1 L1671.1 151.0 L1532.9 155.4ZM1359.6 131.7 L1482.6 128.4 L1340.0 111.3 L1229.3 113.8ZM1127.7 100.0 L1228.3 98.0 L1138.4 87.2 L1046.4 88.8ZM979.7 79.7 L1064.5 78.4 L1002.8 71.0 L924.1 72.1ZM877.0 65.7 L950.3 64.7 L905.3 59.3 L836.7 60.1ZM801.6 55.4 L866.1 54.7 L831.8 50.5 L771.0 51.2ZM743.9 47.5 L801.5 46.9 L774.5 43.7 L719.9 44.2ZM698.3 41.2 L750.3 40.8 L728.5 38.2 L678.9 38.6ZM661.4 36.2 L708.8 35.8 L690.8 33.7 L645.4 34.0ZM630.9 32.0 L674.4 31.7 L659.3 29.9 L617.5 30.2ZM605.2 28.5 L645.4 28.2 L632.6 26.7 L593.8 26.9ZM583.3 25.5 L620.7 25.3 L609.7 24.0 L573.6 24.2ZM564.5 22.9 L599.4 22.7 L589.8 21.6 L556.0 21.8ZM2315.6 228.1 L2481.6 219.0 L2078.8 176.2 L1931.7 182.1ZM1671.1 151.0 L1802.0 146.8 L1600.1 125.3 L1482.6 128.4ZM1340.0 111.3 L1446.3 108.9 L1325.2 96.1 L1228.3 98.0ZM1138.4 87.2 L1227.5 85.7 L1146.9 77.1 L1064.5 78.4ZM1002.8 71.0 L1079.3 69.9 L1021.8 63.8 L950.3 64.7ZM905.3 59.3 L972.3 58.5 L929.2 54.0 L866.1 54.7ZM831.8 50.5 L891.4 49.9 L858.0 46.4 L801.5 46.9ZM774.5 43.7 L828.1 43.2 L801.4 40.4 L750.3 40.8ZM728.5 38.2 L777.3 37.8 L755.4 35.5 L708.8 35.8ZM690.8 33.7 L735.5 33.4 L717.3 31.4 L674.4 31.7ZM659.3 29.9 L700.5 29.6 L685.1 28.0 L645.4 28.2ZM632.6 26.7 L670.9 26.5 L657.7 25.1 L620.7 25.3ZM609.7 24.0 L645.4 23.8 L634.0 22.6 L599.4 22.7ZM3122.0 287.1 L3289.0 273.2 L2635.5 210.7 L2481.6 219.0ZM2078.8 176.2 L2217.1 170.6 L1926.2 142.8 L1802.0 146.8ZM1600.1 125.3 L1712.3 122.3 L1548.4 106.6 L1446.3 108.9ZM1325.2 96.1 L1418.8 94.2 L1313.7 84.2 L1227.5 85.7ZM1146.9 77.1 L1226.9 75.9 L1153.8 68.9 L1079.3 69.9ZM1021.8 63.8 L1091.5 62.9 L1037.8 57.8 L972.3 58.5ZM929.2 54.0 L991.0 53.3 L949.8 49.3 L891.4 49.9ZM858.0 46.4 L913.4 45.8 L880.8 42.7 L828.1 43.2ZM801.4 40.4 L851.6 39.9 L825.2 37.4 L777.3 37.8ZM755.4 35.5 L801.3 35.1 L779.5 33.0 L735.5 33.4ZM717.3 31.4 L759.5 31.1 L741.2 29.4 L700.5 29.6ZM685.1 28.0 L724.3 27.8 L708.7 26.3 L670.9 26.5ZM657.7 25.1 L694.2 24.9 L680.7 23.6 L645.4 23.8ZM634.0 22.6 L668.2 22.4 L656.4 21.3 L623.3 21.4ZM2635.5 210.7 L2778.5 202.9 L2347.3 165.4 L2217.1 170.6ZM1926.2 142.8 L2044.3 139.0 L1819.8 119.5 L1712.3 122.3ZM1548.4 106.6 L1646.7 104.4 L1509.2 92.5 L1418.8 94.2ZM1313.7 84.2 L1397.3 82.7 L1304.6 74.6 L1226.9 75.9ZM1153.8 68.9 L1226.4 67.8 L1159.5 62.0 L1091.5 62.9ZM1037.8 57.8 L1101.8 57.0 L1051.4 52.6 L991.0 53.3ZM949.8 49.3 L1007.1 48.8 L967.7 45.3 L913.4 45.8ZM880.8 42.7 L932.5 42.3 L901.0 39.5 L851.6 39.9ZM825.2 37.4 L872.4 37.0 L846.5 34.8 L801.3 35.1ZM779.5 33.0 L822.9 32.7 L801.2 30.8 L759.5 31.1ZM741.2 29.4 L781.3 29.1 L763.0 27.5 L724.3 27.8ZM708.7 26.3 L746.0 26.0 L730.3 24.7 L694.2 24.9ZM680.7 23.6 L715.6 23.4 L701.9 22.2 L668.2 22.4ZM3441.1 260.6 L3580.2 249.0 L2911.7 195.7 L2778.5 202.9ZM2347.3 165.4 L2470.1 160.4 L2156.7 135.4 L2044.3 139.0ZM1819.8 119.5 L1922.6 116.8 L1741.2 102.3 L1646.7 104.4ZM1509.2 92.5 L1596.5 90.7 L1478.4 81.3 L1397.3 82.7ZM1304.6 74.6 L1380.1 73.5 L1297.0 66.8 L1226.4 67.8ZM1159.5 62.0 L1225.9 61.2 L1164.4 56.3 L1101.8 57.0ZM1051.4 52.6 L1110.6 52.0 L1063.2 48.2 L1007.1 48.8ZM967.7 45.3 L1021.0 44.8 L983.4 41.8 L932.5 42.3ZM901.0 39.5 L949.5 39.1 L918.9 36.7 L872.4 37.0ZM846.5 34.8 L891.0 34.4 L865.6 32.4 L822.9 32.7ZM801.2 30.8 L842.3 30.6 L820.9 28.9 L781.3 29.1ZM763.0 27.5 L801.2 27.3 L782.9 25.8 L746.0 26.0ZM730.3 24.7 L765.9 24.5 L750.1 23.2 L715.6 23.4ZM701.9 22.2 L735.4 22.0 L721.6 20.9 L689.2 21.1ZM2911.7 195.7 L3036.2 188.9 L2586.2 155.8 L2470.1 160.4ZM2156.7 135.4 L2263.7 132.0 L2021.3 114.1 L1922.6 116.8ZM1741.2 102.3 L1832.3 100.2 L1680.9 89.1 L1596.5 90.7ZM1478.4 81.3 L1556.9 79.9 L1453.5 72.3 L1380.1 73.5ZM1297.0 66.8 L1365.9 65.9 L1290.7 60.3 L1225.9 61.2ZM1164.4 56.3 L1225.6 55.5 L1168.5 51.3 L1110.6 52.0ZM1063.2 48.2 L1118.2 47.6 L1073.4 44.3 L1021.0 44.8ZM983.4 41.8 L1033.3 41.4 L997.2 38.7 L949.5 39.1ZM918.9 36.7 L964.6 36.3 L934.9 34.1 L891.0 34.4ZM865.6 32.4 L907.7 32.1 L882.9 30.3 L842.3 30.6ZM820.9 28.9 L860.0 28.6 L838.8 27.0 L801.2 27.3ZM782.9 25.8 L819.3 25.6 L801.1 24.3 L765.9 24.5ZM750.1 23.2 L784.2 23.0 L768.4 21.9 L735.4 22.0ZM3707.8 238.4 L3825.3 228.6 L3152.7 182.6 L3036.2 188.9ZM2586.2 155.8 L2696.1 151.3 L2365.8 128.7 L2263.7 132.0ZM2021.3 114.1 L2115.9 111.6 L1920.1 98.2 L1832.3 100.2ZM1680.9 89.1 L1762.6 87.5 L1633.2 78.6 L1556.9 79.9ZM1453.5 72.3 L1524.9 71.2 L1433.0 64.9 L1365.9 65.9ZM1290.7 60.3 L1354.0 59.5 L1285.4 54.8 L1225.6 55.5ZM1168.5 51.3 L1225.3 50.7 L1172.1 47.1 L1118.2 47.6ZM1073.4 44.3 L1124.8 43.8 L1082.4 40.9 L1033.3 41.4ZM997.2 38.7 L1044.1 38.3 L1009.5 35.9 L964.6 36.3ZM934.9 34.1 L978.0 33.8 L949.2 31.8 L907.7 32.1ZM882.9 30.3 L922.8 30.0 L898.5 28.3 L860.0 28.6ZM838.8 27.0 L876.1 26.8 L855.2 25.4 L819.3 25.6ZM801.1 24.3 L835.9 24.1 L817.9 22.8 L784.2 23.0ZM768.4 21.9 L801.1 21.7 L785.3 20.6 L753.6 20.8ZM3152.7 182.6 L3261.9 176.6 L2800.2 147.1 L2696.1 151.3ZM2365.8 128.7 L2463.3 125.6 L2206.7 109.2 L2115.9 111.6ZM1920.1 98.2 L2004.7 96.3 L1841.6 85.9 L1762.6 87.5ZM1633.2 78.6 L1707.2 77.3 L1594.4 70.1 L1524.9 71.2ZM1433.0 64.9 L1498.4 64.0 L1415.8 58.7 L1354.0 59.5ZM1285.4 54.8 L1344.0 54.1 L1280.9 50.1 L1225.3 50.7ZM1172.1 47.1 L1225.0 46.5 L1175.2 43.3 L1124.8 43.8ZM1082.4 40.9 L1130.6 40.5 L1090.3 37.9 L1044.1 38.3ZM1009.5 35.9 L1053.8 35.6 L1020.6 33.5 L978.0 33.8ZM949.2 31.8 L990.2 31.5 L962.3 29.7 L922.8 30.0ZM898.5 28.3 L936.6 28.1 L912.8 26.6 L876.1 26.8ZM855.2 25.4 L890.8 25.2 L870.3 23.9 L835.9 24.1ZM817.9 22.8 L851.2 22.6 L833.4 21.5 L801.1 21.7ZM3933.9 219.6 L4034.5 211.2 L3364.7 171.1 L3261.9 176.6ZM2800.2 147.1 L2899.0 143.2 L2556.5 122.6 L2463.3 125.6ZM2206.7 109.2 L2294.0 106.9 L2086.4 94.5 L2004.7 96.3ZM1841.6 85.9 L1918.2 84.4 L1779.0 76.1 L1707.2 77.3ZM1594.4 70.1 L1662.0 69.1 L1562.3 63.1 L1498.4 64.0ZM1415.8 58.7 L1476.2 57.9 L1401.3 53.4 L1344.0 54.1ZM1280.9 50.1 L1335.3 49.5 L1276.9 46.0 L1225.0 46.5ZM1175.2 43.3 L1224.8 42.9 L1178.0 40.1 L1130.6 40.5ZM1090.3 37.9 L1135.7 37.5 L1097.4 35.2 L1053.8 35.6ZM1020.6 33.5 L1062.5 33.2 L1030.5 31.2 L990.2 31.5ZM962.3 29.7 L1001.2 29.5 L974.1 27.9 L936.6 28.1ZM912.8 26.6 L949.1 26.4 L925.9 25.0 L890.8 25.2ZM870.3 23.9 L904.3 23.7 L884.1 22.5 L851.2 22.6ZM833.4 21.5 L865.3 21.3 L847.7 20.3 L816.7 20.4ZM3364.7 171.1 L3461.4 165.8 L2992.9 139.4 L2899.0 143.2ZM2556.5 122.6 L2645.7 119.8 L2378.0 104.7 L2294.0 106.9ZM2086.4 94.5 L2165.3 92.7 L1992.3 83.0 L1918.2 84.4ZM1779.0 76.1 L1848.8 74.9 L1727.9 68.0 L1662.0 69.1ZM1562.3 63.1 L1624.6 62.2 L1535.3 57.2 L1476.2 57.9ZM1401.3 53.4 L1457.3 52.8 L1388.7 48.9 L1335.3 49.5ZM1276.9 46.0 L1327.8 45.5 L1273.4 42.4 L1224.8 42.9ZM1178.0 40.1 L1224.6 39.7 L1180.4 37.2 L1135.7 37.5ZM1097.4 35.2 L1140.3 34.9 L1103.8 32.8 L1062.5 33.2ZM1030.5 31.2 L1070.3 31.0 L1039.5 29.2 L1001.2 29.5ZM974.1 27.9 L1011.1 27.6 L984.9 26.1 L949.1 26.4ZM925.9 25.0 L960.5 24.8 L937.9 23.5 L904.3 23.7ZM884.1 22.5 L916.7 22.3 L897.0 21.2 L865.3 21.3ZM4128.0 203.4 L4215.2 196.1 L3552.6 160.8 L3461.4 165.8ZM2992.9 139.4 L3082.3 135.8 L2731.0 117.1 L2645.7 119.8ZM2378.0 104.7 L2458.8 102.6 L2241.6 91.0 L2165.3 92.7ZM1992.3 83.0 L2064.2 81.5 L1916.7 73.7 L1848.8 74.9ZM1727.9 68.0 L1792.1 67.0 L1685.4 61.4 L1624.6 62.2ZM1535.3 57.2 L1593.0 56.4 L1512.2 52.1 L1457.3 52.8ZM1388.7 48.9 L1441.0 48.3 L1377.8 45.0 L1327.8 45.5ZM1273.4 42.4 L1321.2 42.0 L1270.4 39.2 L1224.6 39.7ZM1180.4 37.2 L1224.4 36.8 L1182.6 34.6 L1140.3 34.9ZM1103.8 32.8 L1144.5 32.5 L1109.5 30.7 L1070.3 31.0ZM1039.5 29.2 L1077.4 29.0 L1047.7 27.4 L1011.1 27.6ZM984.9 26.1 L1020.3 25.9 L994.8 24.6 L960.5 24.8ZM937.9 23.5 L971.1 23.3 L948.9 22.1 L916.7 22.3ZM897.0 21.2 L928.2 21.0 L908.8 20.0 L878.4 20.1Z" fill="#aea7a4"/>
<path d="M-14493.4 1753.4L-5067.6 629.3M-13891.1 1703.3L-4943.9 622.6M-13322.2 1656.0L-4822.9 616.0M-12783.9 1611.2L-4704.3 609.6M-12273.8 1568.7L-4588.2 603.3M-11789.8 1528.4L-4474.4 597.1M-11329.9 1490.1L-4362.9 591.0M-10892.3 1453.7L-4253.6 585.1M-10475.5 1419.0L-4146.4 579.2M-12770.0 1528.4L-8812.3 1215.6M-11034.7 1324.1L-7821.6 1082.3M-9706.0 1167.6L-7025.0 975.1M-8655.9 1043.9L-6370.6 887.0M-7805.1 943.7L-5823.4 813.3M-7101.8 860.9L-5359.0 750.9M-6510.7 791.3L-4960.0 697.2M-6006.9 731.9L-4613.5 650.5M-5572.4 680.7L-4309.8 609.7M-4861.1 597.0L-3802.4 541.4M-4566.2 562.3L-3588.3 512.6M-4303.2 531.3L-3395.4 486.6M-4067.1 503.5L-3220.7 463.1M-3854.0 478.4L-3061.8 441.7M-3660.7 455.6L-2916.5 422.2M-3484.6 434.9L-2783.2 404.2M-3323.4 415.9L-2660.6 387.7M-3175.3 398.4L-2547.2 372.5M-2912.7 367.5L-2344.7 345.2M-2795.7 353.7L-2253.8 333.0M-2686.9 340.9L-2169.0 321.6M-2585.5 329.0L-2089.6 310.9M-2490.7 317.8L-2015.1 300.8M-2401.9 307.4L-1945.1 291.4M-2318.6 297.5L-1879.2 282.6M-2240.2 288.3L-1817.0 274.2M-2166.4 279.6L-1758.3 266.3M-9698.4 1354.3L-3938.3 567.9M-9335.7 1324.1L-3837.2 562.4M-8988.7 1295.2L-3738.0 557.0M-8656.4 1267.6L-3640.6 551.8M-8337.9 1241.1L-3545.1 546.6M-8032.4 1215.6L-3451.3 541.5M-7739.1 1191.2L-3359.2 536.5M-7457.2 1167.8L-3268.8 531.6M-7186.1 1145.2L-3180.0 526.7M-8812.3 1215.6L-6192.8 1008.5M-7821.6 1082.3L-5595.0 914.7M-7025.0 975.1L-5097.9 836.7M-6370.6 887.0L-4677.9 770.8M-5823.4 813.3L-4318.5 714.4M-5359.0 750.9L-4007.5 665.5M-4960.0 697.2L-3735.6 622.9M-4613.5 650.5L-3495.9 585.3M-4309.8 609.7L-3283.0 551.9M-3802.4 541.4L-2921.6 495.1M-3588.3 512.6L-2766.8 470.8M-3395.4 486.6L-2626.2 448.8M-3220.7 463.1L-2497.9 428.6M-3061.8 441.7L-2380.3 410.2M-2916.5 422.2L-2272.2 393.2M-2783.2 404.2L-2172.4 377.5M-2660.6 387.7L-2080.1 363.1M-2547.2 372.5L-1994.4 349.6M-2344.7 345.2L-1840.2 325.4M-2253.8 333.0L-1770.5 314.5M-2169.0 321.6L-1705.3 304.2M-2089.6 310.9L-1644.0 294.6M-2015.1 300.8L-1586.4 285.6M-1945.1 291.4L-1532.0 277.0M-1879.2 282.6L-1480.7 269.0M-1817.0 274.2L-1432.1 261.4M-1758.3 266.3L-1386.2 254.1M-6674.0 1102.6L-3007.0 517.3M-6431.9 1082.4L-2922.8 512.7M-6198.4 1063.0L-2840.0 508.2M-5973.0 1044.2L-2758.7 503.8M-5755.4 1026.1L-2678.7 499.5M-5545.2 1008.6L-2600.1 495.2M-5341.9 991.7L-2522.7 491.0M-5145.3 975.3L-2446.7 486.9M-4955.1 959.5L-2371.9 482.8M-6192.8 1008.5L-4330.8 861.3M-5595.0 914.7L-3961.0 791.7M-5097.9 836.7L-3645.8 732.4M-4677.9 770.8L-3373.9 681.2M-4318.5 714.4L-3137.0 636.6M-4007.5 665.5L-2928.7 597.4M-3735.6 622.9L-2744.1 562.7M-3495.9 585.3L-2579.5 531.7M-3283.0 551.9L-2431.7 503.9M-2921.6 495.1L-2177.3 456.0M-2766.8 470.8L-2067.0 435.3M-2626.2 448.8L-1966.1 416.3M-2497.9 428.6L-1873.4 398.8M-2380.3 410.2L-1787.9 382.8M-2272.2 393.2L-1708.9 367.9M-2172.4 377.5L-1635.7 354.1M-2080.1 363.1L-1567.5 341.3M-1994.4 349.6L-1504.0 329.3M-4592.3 929.3L-2225.9 474.9M-4419.3 914.9L-2154.7 471.0M-4251.5 900.9L-2084.6 467.2M-4088.7 887.4L-2015.6 463.4M-3930.6 874.2L-1947.6 459.8M-3777.2 861.4L-1880.7 456.1M-3628.1 849.0L-1814.9 452.5M-3483.2 837.0L-1750.1 449.0M-3342.3 825.2L-1686.2 445.5M-4330.8 861.3L-2939.4 751.3M-3961.0 791.7L-2710.9 697.7M-3645.8 732.4L-2512.4 651.0M-3373.9 681.2L-2338.4 610.1M-3137.0 636.6L-2184.6 574.0M-2928.7 597.4L-2047.7 541.8M-2744.1 562.7L-1925.0 513.0M-2579.5 531.7L-1814.5 487.0M-2431.7 503.9L-1714.4 463.5M-2177.3 456.0L-1540.0 422.6M-2067.0 435.3L-1463.7 404.6M-1966.1 416.3L-1393.4 388.1M-1873.4 398.8L-1328.4 372.8M-1787.9 382.8L-1268.2 358.7M-1708.9 367.9L-1212.3 345.6M-1635.7 354.1L-1160.2 333.3M-1567.5 341.3L-1111.6 321.9M-1504.0 329.3L-1066.1 311.2M-3072.0 802.7L-1561.3 438.8M-2942.2 791.9L-1500.3 435.4M-2815.8 781.4L-1440.1 432.2M-2692.7 771.2L-1380.9 429.0M-2572.8 761.2L-1322.5 425.8M-2455.9 751.4L-1264.9 422.6M-2341.9 742.0L-1208.1 419.6M-2230.7 732.7L-1152.2 416.5M-2122.2 723.7L-1097.0 413.5M-2939.4 751.3L-1860.1 666.0M-2710.9 697.7L-1723.5 623.4M-2512.4 651.0L-1603.1 585.7M-2338.4 610.1L-1496.2 552.3M-2184.6 574.0L-1400.6 522.4M-2047.7 541.8L-1314.6 495.6M-1925.0 513.0L-1236.9 471.3M-1814.5 487.0L-1166.2 449.2M-1714.4 463.5L-1101.7 429.0M-1540.0 422.6L-988.3 393.6M-1463.7 404.6L-938.2 377.9M-1393.4 388.1L-891.8 363.4M-1328.4 372.8L-848.7 350.0M-1268.2 358.7L-808.6 337.4M-1212.3 345.6L-771.2 325.7M-1160.2 333.3L-736.2 314.8M-1111.6 321.9L-703.4 304.6M-1066.1 311.2L-672.6 294.9M-1912.9 706.2L-989.0 407.7M-1812.0 697.8L-936.1 404.8M-1713.4 689.6L-884.0 401.9M-1617.1 681.6L-832.5 399.2M-1522.9 673.8L-781.7 396.4M-1430.9 666.1L-731.7 393.7M-1340.9 658.6L-682.3 391.0M-1252.9 651.3L-633.5 388.3M-1166.8 644.1L-585.4 385.7M-1860.1 666.0L-998.5 597.9M-1723.5 623.4L-924.0 563.2M-1603.1 585.7L-857.5 532.2M-1496.2 552.3L-797.8 504.4M-1400.6 522.4L-744.0 479.2M-1314.6 495.6L-695.1 456.5M-1236.9 471.3L-650.6 435.7M-1166.2 449.2L-609.8 416.7M-1101.7 429.0L-572.4 399.2M-988.3 393.6L-506.0 368.3M-938.2 377.9L-476.4 354.5M-891.8 363.4L-448.9 341.6M-848.7 350.0L-423.2 329.7M-808.6 337.4L-399.2 318.5M-771.2 325.7L-376.8 308.0M-736.2 314.8L-355.7 298.2M-703.4 304.6L-335.9 288.9M-672.6 294.9L-317.2 280.2M-1000.1 630.3L-491.0 380.6M-919.3 623.5L-444.7 378.1M-840.3 617.0L-399.1 375.6M-762.8 610.5L-354.0 373.1M-687.0 604.2L-309.5 370.7M-612.7 598.0L-265.5 368.3M-539.8 592.0L-222.1 366.0M-468.4 586.0L-179.2 363.6M-398.4 580.2L-136.9 361.3M-998.5 597.9L-294.7 542.3M-924.0 563.2L-263.3 513.5M-857.5 532.2L-235.0 487.5M-797.8 504.4L-209.3 464.0M-744.0 479.2L-186.0 442.5M-695.1 456.5L-164.7 423.0M-650.6 435.7L-145.1 405.0M-609.8 416.7L-127.1 388.5M-572.4 399.2L-110.5 373.2M-491.0 380.6L-267.0 270.7M-444.7 378.1L-234.6 269.4M-399.1 375.6L-202.6 268.1M-354.0 373.1L-170.9 266.8M-309.5 370.7L-139.4 265.6M-265.5 368.3L-108.2 264.3M-222.1 366.0L-77.4 263.1M-179.2 363.6L-46.8 261.8M-136.9 361.3L-16.4 260.6M-506.0 368.3L-80.7 345.9M-476.4 354.5L-67.4 333.7M-448.9 341.6L-54.9 322.2M-423.2 329.7L-43.2 311.5M-399.2 318.5L-32.3 301.5M-376.8 308.0L-22.0 292.1M-355.7 298.2L-12.3 283.2M-335.9 288.9L-3.2 274.8M-317.2 280.2L5.4 266.9M-262.5 568.9L-53.7 356.8M-196.4 563.4L-12.9 354.6M-131.6 558.0L27.4 352.4M-68.0 552.7L67.3 350.3M-5.6 547.5L106.6 348.1M55.6 542.4L145.5 346.0M115.8 537.4L184.0 343.9M174.9 532.5L222.0 341.8M232.9 527.6L259.5 339.8M-294.7 542.3L290.9 496.0M-263.3 513.5L291.8 471.7M-235.0 487.5L292.6 449.6M-209.3 464.0L293.3 429.4M-186.0 442.5L294.0 411.0M-164.7 423.0L294.6 394.0M-145.1 405.0L295.2 378.3M-127.1 388.5L295.7 363.8M-110.5 373.2L296.2 350.3M-53.7 356.8L43.4 258.2M-12.9 354.6L72.9 257.0M27.4 352.4L102.2 255.8M67.3 350.3L131.2 254.7M106.6 348.1L159.9 253.5M145.5 346.0L188.4 252.4M184.0 343.9L216.6 251.2M222.0 341.8L244.6 250.1M259.5 339.8L272.4 249.0M-80.7 345.9L297.1 326.1M-67.4 333.7L297.5 315.1M-54.9 322.2L297.8 304.9M-43.2 311.5L298.2 295.3M-32.3 301.5L298.5 286.2M-22.0 292.1L298.8 277.7M-12.3 283.2L299.1 269.6M-3.2 274.8L299.4 262.0M5.4 266.9L299.7 254.7M43.4 258.2L99.5 201.2M72.9 257.0L122.6 200.5M102.2 255.8L145.6 199.7M131.2 254.7L168.4 199.0M159.9 253.5L191.0 198.3M188.4 252.4L213.5 197.6M216.6 251.2L235.8 196.8M244.6 250.1L258.0 196.1M272.4 249.0L280.0 195.4M99.5 201.2L136.1 164.1M122.6 200.5L155.1 163.6M145.6 199.7L174.0 163.1M168.4 199.0L192.7 162.6M191.0 198.3L211.4 162.1M213.5 197.6L229.9 161.6M235.8 196.8L248.4 161.1M258.0 196.1L266.7 160.6M280.0 195.4L285.0 160.1M136.1 164.1L161.8 137.9M155.1 163.6L177.9 137.6M174.0 163.1L193.9 137.2M192.7 162.6L209.9 136.9M211.4 162.1L225.8 136.5M229.9 161.6L241.6 136.1M248.4 161.1L257.3 135.8M266.7 160.6L273.0 135.4M285.0 160.1L288.5 135.1M345.9 518.2L333.3 335.8M400.9 513.6L369.6 333.8M455.0 509.1L405.5 331.9M508.2 504.7L440.9 329.9M560.4 500.4L476.0 328.0M611.8 496.1L510.6 326.2M662.3 491.9L544.9 324.3M712.0 487.7L578.8 322.5M760.9 483.7L612.4 320.6M290.9 496.0L785.8 456.9M291.8 471.7L764.7 436.1M292.6 449.6L745.4 417.1M293.3 429.4L727.6 399.6M294.0 411.0L711.3 383.5M294.6 394.0L696.1 368.6M295.2 378.3L682.1 354.8M295.7 363.8L669.1 342.0M296.2 350.3L656.9 330.0M333.3 335.8L327.2 246.8M369.6 333.8L354.3 245.7M405.5 331.9L381.1 244.6M440.9 329.9L407.7 243.5M476.0 328.0L434.0 242.5M510.6 326.2L460.2 241.4M544.9 324.3L486.1 240.4M578.8 322.5L511.9 239.3M612.4 320.6L537.4 238.3M297.1 326.1L634.9 308.3M297.5 315.1L624.9 298.5M297.8 304.9L615.5 289.3M298.2 295.3L606.6 280.5M298.5 286.2L598.3 272.3M298.8 277.7L590.4 264.5M299.1 269.6L582.9 257.2M299.4 262.0L575.8 250.2M299.7 254.7L569.1 243.6M327.2 246.8L323.6 194.0M354.3 245.7L345.1 193.3M381.1 244.6L366.6 192.7M407.7 243.5L387.8 192.0M434.0 242.5L409.0 191.3M460.2 241.4L430.0 190.6M486.1 240.4L450.8 190.0M511.9 239.3L471.5 189.3M537.4 238.3L492.1 188.6M323.6 194.0L321.2 159.2M345.1 193.3L339.1 158.7M366.6 192.7L356.9 158.2M387.8 192.0L374.7 157.7M409.0 191.3L392.3 157.3M430.0 190.6L409.8 156.8M450.8 190.0L427.3 156.3M471.5 189.3L444.6 155.9M492.1 188.6L461.9 155.4M321.2 159.2L319.5 134.4M339.1 158.7L334.8 134.0M356.9 158.2L350.1 133.7M374.7 157.7L365.3 133.3M392.3 157.3L380.4 133.0M409.8 156.8L395.5 132.7M427.3 156.3L410.4 132.3M444.6 155.9L425.4 132.0M461.9 155.4L440.2 131.7M319.5 134.4L318.2 115.9M334.8 134.0L331.6 115.6M350.1 133.7L345.0 115.3M365.3 133.3L358.3 115.1M380.4 133.0L371.5 114.8M395.5 132.7L384.7 114.6M410.4 132.3L397.8 114.3M425.4 132.0L410.9 114.0M440.2 131.7L423.9 113.8M318.2 115.9L317.2 101.5M331.6 115.6L329.1 101.3M345.0 115.3L341.0 101.1M358.3 115.1L352.8 100.9M371.5 114.8L364.6 100.7M384.7 114.6L376.3 100.5M397.8 114.3L388.0 100.3M410.9 114.0L399.7 100.1M423.9 113.8L411.3 99.9M317.2 101.5L316.4 90.1M329.1 101.3L327.1 89.9M341.0 101.1L337.8 89.7M352.8 100.9L348.4 89.6M364.6 100.7L359.0 89.4M376.3 100.5L369.6 89.2M388.0 100.3L380.1 89.1M399.7 100.1L390.6 88.9M411.3 99.9L401.1 88.7M856.3 475.7L678.3 317.0M902.8 471.9L710.8 315.3M948.6 468.1L742.9 313.5M993.7 464.3L774.6 311.8M1038.1 460.6L806.0 310.1M1081.8 457.0L837.1 308.4M1124.9 453.4L867.9 306.7M1167.2 449.9L898.3 305.1M1209.0 446.4L928.4 303.5M785.8 456.9L1209.6 423.4M764.7 436.1L1172.4 405.4M745.4 417.1L1138.2 388.9M727.6 399.6L1106.7 373.6M711.3 383.5L1077.4 359.4M696.1 368.6L1050.2 346.3M682.1 354.8L1024.8 334.0M669.1 342.0L1001.2 322.6M656.9 330.0L979.0 311.9M678.3 317.0L587.7 236.3M710.8 315.3L612.6 235.3M742.9 313.5L637.3 234.3M774.6 311.8L661.8 233.3M806.0 310.1L686.1 232.3M837.1 308.4L710.2 231.3M867.9 306.7L734.1 230.4M898.3 305.1L757.8 229.4M928.4 303.5L781.3 228.5M634.9 308.3L938.7 292.4M624.9 298.5L920.3 283.5M615.5 289.3L903.0 275.1M606.6 280.5L886.6 267.2M598.3 272.3L871.1 259.7M590.4 264.5L856.4 252.6M582.9 257.2L842.5 245.8M575.8 250.2L829.2 239.4M569.1 243.6L816.6 233.3M587.7 236.3L532.9 187.3M612.6 235.3L553.0 186.7M637.3 234.3L573.1 186.1M661.8 233.3L593.0 185.4M686.1 232.3L612.8 184.8M710.2 231.3L632.4 184.2M734.1 230.4L652.0 183.5M757.8 229.4L671.4 182.9M781.3 228.5L690.7 182.3M532.9 187.3L496.1 154.5M553.0 186.7L513.0 154.1M573.1 186.1L529.9 153.6M593.0 185.4L546.7 153.2M612.8 184.8L563.4 152.7M632.4 184.2L580.0 152.3M652.0 183.5L596.5 151.9M671.4 182.9L612.9 151.4M690.7 182.3L629.2 151.0M496.1 154.5L469.7 131.0M513.0 154.1L484.3 130.7M529.9 153.6L498.9 130.3M546.7 153.2L513.4 130.0M563.4 152.7L527.8 129.7M580.0 152.3L542.2 129.4M596.5 151.9L556.5 129.0M612.9 151.4L570.7 128.7M629.2 151.0L584.8 128.4M1290.6 439.6L987.8 300.2M1330.5 436.3L1017.0 298.6M1369.8 433.0L1045.9 297.1M1408.5 429.8L1074.5 295.5M1446.7 426.6L1102.8 294.0M1484.3 423.5L1130.8 292.5M1521.4 420.4L1158.6 290.9M1558.0 417.3L1186.0 289.5M1594.0 414.3L1213.2 288.0M1209.6 423.4L1576.6 394.4M1172.4 405.4L1527.6 378.7M1138.2 388.9L1482.4 364.2M1106.7 373.6L1440.3 350.7M1077.4 359.4L1401.2 338.1M1050.2 346.3L1364.7 326.4M1024.8 334.0L1330.5 315.5M1001.2 322.6L1298.5 305.2M979.0 311.9L1268.5 295.6M987.8 300.2L827.8 226.6M1017.0 298.6L850.7 225.7M1045.9 297.1L873.5 224.8M1074.5 295.5L896.1 223.8M1102.8 294.0L918.6 222.9M1130.8 292.5L940.8 222.0M1158.6 290.9L962.9 221.2M1186.0 289.5L984.8 220.3M1213.2 288.0L1006.6 219.4M938.7 292.4L1213.5 278.0M920.3 283.5L1188.3 269.9M903.0 275.1L1164.5 262.2M886.6 267.2L1142.0 255.0M871.1 259.7L1120.6 248.2M856.4 252.6L1100.2 241.6M842.5 245.8L1080.9 235.4M829.2 239.4L1062.5 229.5M816.6 233.3L1044.9 223.9M1576.6 394.4L1897.4 369.0M1527.6 378.7L1839.8 355.2M1482.4 364.2L1786.3 342.3M1440.3 350.7L1736.3 330.4M1401.2 338.1L1689.7 319.2M1364.7 326.4L1645.9 308.7M1330.5 315.5L1604.9 298.8M1298.5 305.2L1566.3 289.6M1268.5 295.6L1530.0 280.9M1213.5 278.0L1463.2 264.8M1188.3 269.9L1432.5 257.5M1164.5 262.2L1403.4 250.5M1142.0 255.0L1375.7 243.9M1120.6 248.2L1349.5 237.6M1100.2 241.6L1324.4 231.6M1080.9 235.4L1300.6 225.8M1062.5 229.5L1277.9 220.4M1044.9 223.9L1256.1 215.2M1897.4 369.0L2180.3 346.6M1839.8 355.2L2116.3 334.4M1786.3 342.3L2056.6 322.9M1736.3 330.4L2000.7 312.2M1689.7 319.2L1948.2 302.2M1645.9 308.7L1898.9 292.7M1604.9 298.8L1852.5 283.8M1566.3 289.6L1808.7 275.4M1530.0 280.9L1767.4 267.5M1463.2 264.8L1691.1 252.9M1432.5 257.5L1655.9 246.1M1403.4 250.5L1622.4 239.7M1375.7 243.9L1590.6 233.6M1349.5 237.6L1560.3 227.8M1324.4 231.6L1531.4 222.3M1300.6 225.8L1503.7 217.0M1277.9 220.4L1477.3 211.9M1256.1 215.2L1452.1 207.1M2180.3 346.6L2431.7 326.8M2116.3 334.4L2363.0 315.8M2056.6 322.9L2298.7 305.6M2000.7 312.2L2238.2 295.9M1948.2 302.2L2181.3 286.8M1898.9 292.7L2127.7 278.3M1852.5 283.8L2077.1 270.2M1808.7 275.4L2029.2 262.5M1767.4 267.5L1983.8 255.3M1691.1 252.9L1899.9 241.9M1655.9 246.1L1861.1 235.7M1622.4 239.7L1824.0 229.8M1590.6 233.6L1788.7 224.2M1560.3 227.8L1755.1 218.8M1531.4 222.3L1722.9 213.6M1503.7 217.0L1692.1 208.7M1477.3 211.9L1662.6 204.0M1452.1 207.1L1634.4 199.5M2431.7 326.8L2656.4 309.0M2363.0 315.8L2584.4 299.2M2298.7 305.6L2516.6 289.9M2238.2 295.9L2452.8 281.2M2181.3 286.8L2392.6 272.9M2127.7 278.3L2335.6 265.1M2077.1 270.2L2281.7 257.8M2029.2 262.5L2230.6 250.8M1983.8 255.3L2182.1 244.1M2656.4 309.0L2858.6 293.0M2584.4 299.2L2784.2 284.1M2516.6 289.9L2714.0 275.7M2452.8 281.2L2647.6 267.8M2392.6 272.9L2584.9 260.3M2335.6 265.1L2525.4 253.2M2281.7 257.8L2468.9 246.4M2230.6 250.8L2415.3 240.0M2182.1 244.1L2364.2 233.9M2858.6 293.0L3041.4 278.6M2784.2 284.1L2965.4 270.5M2714.0 275.7L2893.5 262.8M2647.6 267.8L2825.3 255.6M2584.9 260.3L2760.7 248.7M2525.4 253.2L2699.3 242.2M2468.9 246.4L2640.9 236.0M2415.3 240.0L2585.3 230.1M2364.2 233.9L2532.2 224.4M3041.4 278.6L3207.6 265.4M2965.4 270.5L3130.5 258.1M2893.5 262.8L3057.4 251.1M2825.3 255.6L2988.0 244.4M2760.7 248.7L2922.0 238.1M2699.3 242.2L2859.2 232.1M2640.9 236.0L2799.3 226.4M2585.3 230.1L2742.2 220.9M2532.2 224.4L2687.7 215.7M3207.6 265.4L3359.3 253.5M3130.5 258.1L3281.6 246.7M3057.4 251.1L3207.8 240.3M2988.0 244.4L3137.5 234.2M2922.0 238.1L3070.6 228.3M2859.2 232.1L3006.8 222.8M2799.3 226.4L2945.8 217.5M2742.2 220.9L2887.6 212.4M2687.7 215.7L2831.9 207.6M3359.3 253.5L3498.2 242.5M3281.6 246.7L3420.3 236.3M3207.8 240.3L3346.2 230.3M3137.5 234.2L3275.4 224.7M3070.6 228.3L3207.9 219.3M3006.8 222.8L3143.4 214.2M2945.8 217.5L3081.7 209.2M2887.6 212.4L3022.6 204.5M2831.9 207.6L2966.0 200.0M3498.2 242.5L3626.1 232.4M3420.3 236.3L3548.2 226.6M3346.2 230.3L3473.9 221.2M3275.4 224.7L3403.0 215.9M3207.9 219.3L3335.1 210.9M3143.4 214.2L3270.2 206.1M3081.7 209.2L3208.0 201.6M3022.6 204.5L3148.4 197.2M2966.0 200.0L3091.1 193.0M3626.1 232.4L3744.0 223.0M3548.2 226.6L3666.4 217.7M3473.9 221.2L3592.3 212.7M3403.0 215.9L3521.3 207.8M3335.1 210.9L3453.4 203.2M3270.2 206.1L3388.3 198.7M3208.0 201.6L3325.8 194.4M3148.4 197.2L3265.8 190.3M3091.1 193.0L3208.1 186.4M3744.0 223.0L3853.2 214.4M3666.4 217.7L3776.1 209.5M3592.3 212.7L3702.2 204.8M3521.3 207.8L3631.5 200.2M3453.4 203.2L3563.6 195.9M3388.3 198.7L3498.4 191.7M3325.8 194.4L3435.8 187.7M3265.8 190.3L3375.6 183.9M3208.1 186.4L3317.7 180.2M3853.2 214.4L3954.6 206.4M3776.1 209.5L3878.0 201.8M3702.2 204.8L3804.6 197.4M3631.5 200.2L3734.2 193.2M3563.6 195.9L3666.5 189.1M3498.4 191.7L3601.5 185.2M3435.8 187.7L3538.9 181.5M3375.6 183.9L3478.6 177.9M3317.7 180.2L3420.6 174.4M3954.6 206.4L4048.9 198.9M3878.0 201.8L3973.1 194.7M3804.6 197.4L3900.2 190.5M3734.2 193.2L3830.2 186.6M3666.5 189.1L3762.8 182.8M3601.5 185.2L3698.0 179.1M3538.9 181.5L3635.6 175.6M3478.6 177.9L3575.4 172.2M3420.6 174.4L3517.4 169.0M4048.9 198.9L4137.0 192.0M3973.1 194.7L4061.9 188.0M3900.2 190.5L3989.6 184.1M3830.2 186.6L3920.1 180.4M3762.8 182.8L3853.2 176.9M3698.0 179.1L3788.7 173.4M3635.6 175.6L3726.5 170.1M3575.4 172.2L3666.5 166.9M3517.4 169.0L3608.6 163.8" stroke="#9f9c97" stroke-opacity="0.60" stroke-width="1" fill="none"/>
<path d="M-5067.6 629.3L-2975.7 379.8M-4943.9 622.6L-2913.4 377.3M-4822.9 616.0L-2851.9 374.8M-4704.3 609.6L-2791.1 372.4M-4588.2 603.3L-2731.1 370.0M-4474.4 597.1L-2671.9 367.6M-4362.9 591.0L-2613.4 365.2M-4253.6 585.1L-2555.6 362.9M-4146.4 579.2L-2498.6 360.6M-2975.7 379.8L-2055.6 270.1M-2913.4 377.3L-2015.0 268.8M-2851.9 374.8L-1974.7 267.5M-2791.1 372.4L-1934.7 266.2M-2731.1 370.0L-1895.2 265.0M-2671.9 367.6L-1856.0 263.7M-2613.4 365.2L-1817.1 262.5M-2555.6 362.9L-1778.6 261.2M-2498.6 360.6L-1740.5 260.0M-2030.9 263.7L-1650.0 251.7M-1968.5 256.3L-1600.1 245.0M-1909.4 249.4L-1552.6 238.6M-1853.3 242.7L-1507.4 232.5M-1799.9 236.5L-1464.3 226.7M-1749.2 230.5L-1423.3 221.2M-1700.8 224.8L-1384.1 215.9M-1654.6 219.3L-1346.6 210.9M-1610.5 214.1L-1310.8 206.1M-2386.6 356.1L-1665.2 257.6M-2331.6 353.9L-1628.1 256.4M-2277.3 351.7L-1591.3 255.3M-2223.6 349.5L-1554.8 254.1M-2170.6 347.4L-1518.7 252.9M-2118.2 345.3L-1482.8 251.8M-2066.4 343.2L-1447.3 250.6M-2015.2 341.1L-1412.1 249.5M-1964.6 339.1L-1377.2 248.4M-1650.0 251.7L-1301.1 240.8M-1600.1 245.0L-1261.7 234.6M-1552.6 238.6L-1224.2 228.7M-1507.4 232.5L-1188.4 223.1M-1464.3 226.7L-1154.3 217.8M-1423.3 221.2L-1121.7 212.6M-1384.1 215.9L-1090.5 207.7M-1346.6 210.9L-1060.6 203.1M-1310.8 206.1L-1032.0 198.6M-1865.2 335.1L-1308.2 246.2M-1816.3 333.1L-1274.2 245.1M-1768.0 331.2L-1240.5 244.0M-1720.2 329.3L-1207.0 243.0M-1673.0 327.3L-1173.8 241.9M-1626.3 325.5L-1140.9 240.9M-1580.1 323.6L-1108.3 239.8M-1534.5 321.8L-1076.0 238.8M-1489.3 319.9L-1043.9 237.8M-1308.2 246.2L-978.4 193.6M-1274.2 245.1L-952.4 192.9M-1240.5 244.0L-926.6 192.2M-1207.0 243.0L-900.9 191.5M-1173.8 241.9L-875.5 190.8M-1140.9 240.9L-850.2 190.2M-1108.3 239.8L-825.0 189.5M-1076.0 238.8L-800.1 188.8M-1043.9 237.8L-775.3 188.2M-1301.1 240.8L-980.2 230.7M-1261.7 234.6L-949.9 225.0M-1224.2 228.7L-921.0 219.6M-1188.4 223.1L-893.4 214.4M-1154.3 217.8L-867.0 209.4M-1121.7 212.6L-841.7 204.7M-1090.5 207.7L-817.5 200.1M-1060.6 203.1L-794.3 195.8M-1032.0 198.6L-772.0 191.6M-1400.5 316.4L-980.5 235.7M-1356.7 314.6L-949.2 234.7M-1313.5 312.9L-918.1 233.7M-1270.7 311.1L-887.3 232.7M-1228.4 309.4L-856.8 231.8M-1186.5 307.8L-826.5 230.8M-1145.1 306.1L-796.4 229.8M-1104.1 304.4L-766.6 228.9M-1063.5 302.8L-737.0 227.9M-980.5 235.7L-726.1 186.9M-949.2 234.7L-701.8 186.2M-918.1 233.7L-677.7 185.6M-887.3 232.7L-653.7 185.0M-856.8 231.8L-629.8 184.3M-826.5 230.8L-606.1 183.7M-796.4 229.8L-582.6 183.1M-766.6 228.9L-559.2 182.5M-737.0 227.9L-536.0 181.9M-980.2 230.7L-684.2 221.5M-949.9 225.0L-661.7 216.2M-921.0 219.6L-640.2 211.1M-893.4 214.4L-619.7 206.3M-867.0 209.4L-600.0 201.7M-841.7 204.7L-581.1 197.3M-817.5 200.1L-563.0 193.0M-794.3 195.8L-545.7 188.9M-772.0 191.6L-529.0 185.0M-678.6 226.1L-490.0 180.6M-649.7 225.1L-467.2 180.0M-621.0 224.2L-444.5 179.4M-592.6 223.3L-422.0 178.8M-564.4 222.4L-399.7 178.2M-536.4 221.5L-377.5 177.7M-508.6 220.6L-355.4 177.1M-481.0 219.8L-333.4 176.5M-453.7 218.9L-311.6 175.9M-684.2 221.5L-410.1 212.9M-661.7 216.2L-394.4 208.0M-640.2 211.1L-379.4 203.3M-619.7 206.3L-365.0 198.8M-600.0 201.7L-351.2 194.5M-581.1 197.3L-338.0 190.4M-563.0 193.0L-325.3 186.4M-545.7 188.9L-313.0 182.6M-529.0 185.0L-301.3 178.9M-490.0 180.6L-361.8 149.8M-467.2 180.0L-343.0 149.3M-444.5 179.4L-324.3 148.9M-422.0 178.8L-305.7 148.5M-399.7 178.2L-287.2 148.1M-377.5 177.7L-268.8 147.7M-355.4 177.1L-250.5 147.2M-333.4 176.5L-232.3 146.8M-311.6 175.9L-214.2 146.4M-410.1 212.9L-155.7 204.9M-394.4 208.0L-145.9 200.4M-379.4 203.3L-136.6 196.0M-365.0 198.8L-127.6 191.8M-351.2 194.5L-118.9 187.8M-338.0 190.4L-110.6 183.9M-325.3 186.4L-102.6 180.2M-313.0 182.6L-94.9 176.6M-301.3 178.9L-87.5 173.1M-268.4 174.8L-178.2 145.6M-247.0 174.2L-160.4 145.2M-225.7 173.6L-142.6 144.8M-204.6 173.1L-125.0 144.4M-183.6 172.5L-107.4 144.0M-162.7 172.0L-89.9 143.6M-141.9 171.4L-72.5 143.2M-121.3 170.9L-55.2 142.8M-100.8 170.3L-38.0 142.4M-178.2 145.6L-112.4 124.3M-160.4 145.2L-97.1 124.0M-142.6 144.8L-81.8 123.7M-125.0 144.4L-66.7 123.4M-107.4 144.0L-51.6 123.1M-89.9 143.6L-36.6 122.8M-72.5 143.2L-21.7 122.6M-55.2 142.8L-6.8 122.3M-38.0 142.4L8.0 122.0M-112.4 124.3L-62.2 108.1M-97.1 124.0L-48.8 107.9M-81.8 123.7L-35.5 107.7M-66.7 123.4L-22.2 107.4M-51.6 123.1L-9.0 107.2M-36.6 122.8L4.2 107.0M-21.7 122.6L17.3 106.7M-6.8 122.3L30.3 106.5M8.0 122.0L43.3 106.3M-155.7 204.9L81.1 197.5M-145.9 200.4L85.7 193.3M-136.6 196.0L90.2 189.2M-127.6 191.8L94.4 185.2M-118.9 187.8L98.6 181.5M-110.6 183.9L102.5 177.8M-102.6 180.2L106.3 174.3M-94.9 176.6L110.0 171.0M-87.5 173.1L113.6 167.7M37.5 121.4L69.2 105.8M52.1 121.1L82.1 105.6M66.7 120.8L94.9 105.4M81.2 120.5L107.6 105.2M95.6 120.2L120.3 104.9M110.0 120.0L133.0 104.7M124.3 119.7L145.6 104.5M138.5 119.4L158.2 104.3M152.7 119.1L170.7 104.1M69.2 105.8L94.3 93.5M82.1 105.6L105.8 93.3M94.9 105.4L117.2 93.2M107.6 105.2L128.6 93.0M120.3 104.9L139.9 92.8M133.0 104.7L151.3 92.6M145.6 104.5L162.5 92.5M158.2 104.3L173.8 92.3M170.7 104.1L185.0 92.1M94.3 93.5L114.6 83.5M105.8 93.3L125.0 83.4M117.2 93.2L135.3 83.3M128.6 93.0L145.6 83.1M139.9 92.8L155.9 83.0M151.3 92.6L166.1 82.8M162.5 92.5L176.3 82.7M173.8 92.3L186.5 82.5M185.0 92.1L196.6 82.4M114.6 83.5L131.5 75.3M125.0 83.4L140.9 75.2M135.3 83.3L150.3 75.1M145.6 83.1L159.7 74.9M155.9 83.0L169.1 74.8M166.1 82.8L178.4 74.7M176.3 82.7L187.7 74.6M186.5 82.5L197.0 74.5M196.6 82.4L206.2 74.3M224.7 74.1L231.3 67.3M233.8 74.0L239.7 67.2M243.0 73.9L248.2 67.1M252.1 73.7L256.6 67.0M261.2 73.6L265.0 66.9M270.3 73.5L273.3 66.8M279.3 73.4L281.6 66.7M288.3 73.3L290.0 66.6M297.3 73.2L298.2 66.5M231.3 67.3L237.0 61.6M239.7 67.2L244.8 61.5M248.2 67.1L252.6 61.4M256.6 67.0L260.4 61.3M265.0 66.9L268.2 61.2M273.3 66.8L275.9 61.1M281.6 66.7L283.6 61.1M290.0 66.6L291.4 61.0M298.2 66.5L299.1 60.9M237.0 61.6L241.9 56.6M244.8 61.5L249.2 56.5M252.6 61.4L256.5 56.4M260.4 61.3L263.7 56.4M268.2 61.2L271.0 56.3M275.9 61.1L278.2 56.2M283.6 61.1L285.4 56.1M291.4 61.0L292.6 56.1M299.1 60.9L299.7 56.0M241.9 56.6L246.2 52.2M249.2 56.5L253.0 52.2M256.5 56.4L259.8 52.1M263.7 56.4L266.6 52.0M271.0 56.3L273.4 52.0M278.2 56.2L280.1 51.9M285.4 56.1L286.9 51.8M292.6 56.1L293.6 51.8M299.7 56.0L300.4 51.7M246.2 52.2L250.0 48.4M253.0 52.2L256.4 48.3M259.8 52.1L262.8 48.3M266.6 52.0L269.2 48.2M273.4 52.0L275.5 48.2M280.1 51.9L281.9 48.1M286.9 51.8L288.2 48.0M293.6 51.8L294.6 48.0M300.4 51.7L300.9 47.9M250.0 48.4L253.3 45.0M256.4 48.3L259.4 44.9M262.8 48.3L265.4 44.9M269.2 48.2L271.4 44.8M275.5 48.2L277.4 44.8M281.9 48.1L283.4 44.7M288.2 48.0L289.4 44.7M294.6 48.0L295.4 44.6M300.9 47.9L301.4 44.6M253.3 45.0L256.3 41.9M259.4 44.9L262.0 41.9M265.4 44.9L267.7 41.9M271.4 44.8L273.4 41.8M277.4 44.8L279.1 41.8M283.4 44.7L284.8 41.7M289.4 44.7L290.5 41.7M295.4 44.6L296.1 41.6M301.4 44.6L301.8 41.6M313.5 47.8L313.3 44.5M319.8 47.8L319.2 44.4M326.1 47.7L325.1 44.4M332.3 47.7L331.0 44.3M338.6 47.6L336.9 44.3M344.8 47.5L342.8 44.2M351.0 47.5L348.7 44.2M357.2 47.4L354.6 44.1M363.4 47.4L360.4 44.1M313.3 44.5L313.1 41.5M319.2 44.4L318.7 41.5M325.1 44.4L324.3 41.4M331.0 44.3L329.9 41.4M336.9 44.3L335.5 41.3M342.8 44.2L341.1 41.3M348.7 44.2L346.6 41.2M354.6 44.1L352.2 41.2M360.4 44.1L357.7 41.1M313.1 41.5L312.9 38.8M318.7 41.5L318.2 38.8M324.3 41.4L323.5 38.7M329.9 41.4L328.9 38.7M335.5 41.3L334.2 38.6M341.1 41.3L339.5 38.6M346.6 41.2L344.8 38.6M352.2 41.2L350.1 38.5M357.7 41.1L355.3 38.5M312.9 38.8L312.7 36.4M318.2 38.8L317.8 36.3M323.5 38.7L322.9 36.3M328.9 38.7L327.9 36.3M334.2 38.6L333.0 36.2M339.5 38.6L338.0 36.2M344.8 38.6L343.1 36.2M350.1 38.5L348.1 36.1M355.3 38.5L353.2 36.1M312.7 36.4L312.6 34.2M317.8 36.3L317.4 34.1M322.9 36.3L322.3 34.1M327.9 36.3L327.1 34.1M333.0 36.2L331.9 34.0M338.0 36.2L336.7 34.0M343.1 36.2L341.6 34.0M348.1 36.1L346.4 33.9M353.2 36.1L351.2 33.9M312.6 34.2L312.4 32.2M317.4 34.1L317.1 32.1M322.3 34.1L321.7 32.1M327.1 34.1L326.3 32.1M331.9 34.0L330.9 32.0M336.7 34.0L335.5 32.0M341.6 34.0L340.2 32.0M346.4 33.9L344.8 32.0M351.2 33.9L349.4 31.9M312.4 32.2L312.3 30.3M317.1 32.1L316.7 30.3M321.7 32.1L321.2 30.3M326.3 32.1L325.6 30.2M330.9 32.0L330.0 30.2M335.5 32.0L334.5 30.2M340.2 32.0L338.9 30.2M344.8 32.0L343.3 30.1M349.4 31.9L347.7 30.1M312.3 30.3L312.2 28.6M316.7 30.3L316.4 28.6M321.2 30.3L320.7 28.6M325.6 30.2L325.0 28.5M330.0 30.2L329.2 28.5M334.5 30.2L333.5 28.5M338.9 30.2L337.7 28.5M343.3 30.1L341.9 28.4M347.7 30.1L346.2 28.4M312.2 28.6L312.1 27.1M316.4 28.6L316.2 27.0M320.7 28.6L320.3 27.0M325.0 28.5L324.4 27.0M329.2 28.5L328.4 27.0M333.5 28.5L332.5 26.9M337.7 28.5L336.6 26.9M341.9 28.4L340.7 26.9M346.2 28.4L344.7 26.9M312.1 27.1L312.0 25.6M316.2 27.0L315.9 25.6M320.3 27.0L319.9 25.6M324.4 27.0L323.8 25.5M328.4 27.0L327.7 25.5M332.5 26.9L331.7 25.5M336.6 26.9L335.6 25.5M340.7 26.9L339.5 25.5M344.7 26.9L343.4 25.4M312.0 25.6L311.9 24.3M315.9 25.6L315.7 24.2M319.9 25.6L319.5 24.2M323.8 25.5L323.3 24.2M327.7 25.5L327.1 24.2M331.7 25.5L330.9 24.2M335.6 25.5L334.7 24.1M339.5 25.5L338.4 24.1M343.4 25.4L342.2 24.1M403.3 71.8L396.1 65.4M412.0 71.7L404.1 65.3M420.6 71.6L412.1 65.2M429.2 71.5L420.1 65.1M437.8 71.3L428.1 65.0M446.4 71.2L436.0 64.9M455.0 71.1L443.9 64.8M463.5 71.0L451.8 64.7M472.0 70.9L459.7 64.6M396.1 65.4L389.9 59.9M404.1 65.3L397.4 59.8M412.1 65.2L404.8 59.7M420.1 65.1L412.3 59.6M428.1 65.0L419.7 59.6M436.0 64.9L427.1 59.5M443.9 64.8L434.4 59.4M451.8 64.7L441.8 59.3M459.7 64.6L449.1 59.2M389.9 59.9L384.6 55.1M397.4 59.8L391.6 55.0M404.8 59.7L398.5 55.0M412.3 59.6L405.5 54.9M419.7 59.6L412.4 54.8M427.1 59.5L419.3 54.8M434.4 59.4L426.2 54.7M441.8 59.3L433.1 54.6M449.1 59.2L439.9 54.6M384.6 55.1L379.9 50.9M391.6 55.0L386.5 50.9M398.5 55.0L393.0 50.8M405.5 54.9L399.5 50.8M412.4 54.8L406.0 50.7M419.3 54.8L412.5 50.6M426.2 54.7L419.0 50.6M433.1 54.6L425.4 50.5M439.9 54.6L431.9 50.4M379.9 50.9L375.8 47.3M386.5 50.9L381.9 47.2M393.0 50.8L388.1 47.2M399.5 50.8L394.2 47.1M406.0 50.7L400.4 47.0M412.5 50.6L406.5 47.0M419.0 50.6L412.6 46.9M425.4 50.5L418.7 46.9M431.9 50.4L424.8 46.8M375.8 47.3L372.1 44.0M381.9 47.2L377.9 43.9M388.1 47.2L383.8 43.9M394.2 47.1L389.6 43.8M400.4 47.0L395.3 43.8M406.5 47.0L401.1 43.7M412.6 46.9L406.9 43.7M418.7 46.9L412.7 43.6M424.8 46.8L418.4 43.6M372.1 44.0L368.8 41.1M377.9 43.9L374.3 41.0M383.8 43.9L379.9 41.0M389.6 43.8L385.4 40.9M395.3 43.8L390.9 40.9M401.1 43.7L396.3 40.8M406.9 43.7L401.8 40.8M412.7 43.6L407.3 40.7M418.4 43.6L412.7 40.7M368.8 41.1L365.9 38.4M374.3 41.0L371.1 38.4M379.9 41.0L376.4 38.3M385.4 40.9L381.6 38.3M390.9 40.9L386.8 38.3M396.3 40.8L392.0 38.2M401.8 40.8L397.2 38.2M407.3 40.7L402.4 38.1M412.7 40.7L407.6 38.1M613.0 127.8L576.1 110.8M626.9 127.4L588.5 110.6M640.8 127.1L600.8 110.3M654.7 126.8L613.0 110.1M668.5 126.5L625.2 109.8M682.2 126.2L637.4 109.6M695.8 125.9L649.5 109.4M709.4 125.6L661.5 109.1M722.9 125.3L673.5 108.9M576.1 110.8L547.3 97.5M588.5 110.6L558.3 97.3M600.8 110.3L569.4 97.1M613.0 110.1L580.3 96.9M625.2 109.8L591.3 96.7M637.4 109.6L602.2 96.6M649.5 109.4L613.1 96.4M661.5 109.1L623.9 96.2M673.5 108.9L634.7 96.0M547.3 97.5L524.0 86.8M558.3 97.3L534.1 86.7M569.4 97.1L544.0 86.5M580.3 96.9L554.0 86.4M591.3 96.7L563.9 86.2M602.2 96.6L573.8 86.0M613.1 96.4L583.7 85.9M623.9 96.2L593.5 85.7M634.7 96.0L603.3 85.6M524.0 86.8L504.9 78.0M534.1 86.7L514.1 77.9M544.0 86.5L523.2 77.8M554.0 86.4L532.3 77.6M563.9 86.2L541.4 77.5M573.8 86.0L550.5 77.4M583.7 85.9L559.5 77.3M593.5 85.7L568.5 77.1M603.3 85.6L577.5 77.0M504.9 78.0L489.0 70.7M514.1 77.9L497.4 70.6M523.2 77.8L505.8 70.5M532.3 77.6L514.2 70.4M541.4 77.5L522.6 70.2M550.5 77.4L530.9 70.1M559.5 77.3L539.2 70.0M568.5 77.1L547.5 69.9M577.5 77.0L555.8 69.8M1012.2 213.4L1215.5 205.4M996.9 208.5L1196.4 200.8M982.2 203.8L1178.2 196.5M968.2 199.3L1160.6 192.3M954.7 195.0L1143.8 188.2M941.8 190.8L1127.6 184.3M929.3 186.8L1112.1 180.6M917.4 183.0L1097.1 177.0M905.9 179.3L1082.7 173.5M912.7 175.2L818.5 146.0M930.5 174.6L833.8 145.6M948.1 174.1L848.9 145.2M965.7 173.5L864.0 144.8M983.1 172.9L879.0 144.4M1000.4 172.4L894.0 144.0M1017.7 171.8L908.8 143.6M1034.8 171.3L923.6 143.2M1051.8 170.8L938.3 142.8M818.5 146.0L749.8 124.7M833.8 145.6L763.1 124.4M848.9 145.2L776.4 124.1M864.0 144.8L789.7 123.8M879.0 144.4L802.8 123.5M894.0 144.0L815.9 123.2M908.8 143.6L829.0 122.9M923.6 143.2L842.0 122.6M938.3 142.8L854.9 122.3M749.8 124.7L697.4 108.4M763.1 124.4L709.3 108.2M776.4 124.1L721.1 107.9M789.7 123.8L732.9 107.7M802.8 123.5L744.6 107.5M815.9 123.2L756.3 107.3M829.0 122.9L767.9 107.0M842.0 122.6L779.5 106.8M854.9 122.3L791.0 106.6M1519.9 271.3L1255.2 209.4M1543.9 270.0L1275.0 208.6M1567.7 268.7L1294.6 207.8M1591.2 267.4L1314.0 207.0M1614.6 266.2L1333.4 206.2M1637.7 264.9L1352.5 205.5M1660.7 263.7L1371.6 204.7M1683.4 262.4L1390.5 203.9M1705.9 261.2L1409.3 203.2M1255.2 209.4L1085.6 169.7M1275.0 208.6L1102.3 169.1M1294.6 207.8L1118.9 168.6M1314.0 207.0L1135.4 168.1M1333.4 206.2L1151.8 167.6M1352.5 205.5L1168.2 167.0M1371.6 204.7L1184.4 166.5M1390.5 203.9L1200.5 166.0M1409.3 203.2L1216.6 165.5M1215.5 205.4L1404.7 198.0M1196.4 200.8L1382.5 193.7M1178.2 196.5L1361.1 189.6M1160.6 192.3L1340.6 185.7M1143.8 188.2L1320.8 181.9M1127.6 184.3L1301.8 178.3M1112.1 180.6L1283.6 174.8M1097.1 177.0L1265.9 171.4M1082.7 173.5L1248.9 168.1M1085.6 169.7L967.5 142.0M1102.3 169.1L982.0 141.7M1118.9 168.6L996.4 141.3M1135.4 168.1L1010.7 140.9M1151.8 167.6L1025.0 140.5M1168.2 167.0L1039.2 140.1M1184.4 166.5L1053.3 139.8M1200.5 166.0L1067.3 139.4M1216.6 165.5L1081.3 139.0M2276.0 357.6L1750.3 258.8M2302.7 355.3L1772.2 257.6M2329.1 353.1L1794.0 256.4M2355.1 351.0L1815.5 255.2M2380.8 348.8L1836.8 254.1M2406.3 346.7L1858.0 252.9M2431.4 344.6L1879.0 251.8M2456.2 342.6L1899.8 250.7M2480.8 340.5L1920.4 249.5M1750.3 258.8L1446.4 201.7M1772.2 257.6L1464.8 200.9M1794.0 256.4L1483.0 200.2M1815.5 255.2L1501.1 199.5M1836.8 254.1L1519.1 198.8M1858.0 252.9L1537.0 198.0M1879.0 251.8L1554.8 197.3M1899.8 250.7L1572.4 196.6M1920.4 249.5L1589.9 195.9M1446.4 201.7L1248.4 164.5M1464.8 200.9L1264.1 164.0M1483.0 200.2L1279.8 163.5M1501.1 199.5L1295.4 163.0M1519.1 198.8L1310.8 162.5M1537.0 198.0L1326.2 162.0M1554.8 197.3L1341.6 161.5M1572.4 196.6L1356.8 161.0M1589.9 195.9L1371.9 160.5M1404.7 198.0L1581.3 191.0M1382.5 193.7L1556.3 187.1M1361.1 189.6L1532.3 183.2M1340.6 185.7L1509.2 179.5M1320.8 181.9L1486.9 176.0M1301.8 178.3L1465.5 172.6M1283.6 174.8L1444.8 169.3M1265.9 171.4L1424.8 166.1M1248.9 168.1L1405.6 163.0M2529.0 336.5L1961.1 247.3M2552.8 334.5L1981.2 246.2M2576.2 332.6L2001.1 245.2M2599.4 330.6L2020.8 244.1M2622.3 328.7L2040.4 243.0M2645.0 326.8L2059.8 242.0M2667.4 325.0L2079.1 240.9M2689.5 323.1L2098.2 239.9M2711.5 321.3L2117.1 238.9M1961.1 247.3L1624.5 194.5M1981.2 246.2L1641.7 193.8M2001.1 245.2L1658.7 193.1M2020.8 244.1L1675.7 192.4M2040.4 243.0L1692.5 191.8M2059.8 242.0L1709.2 191.1M2079.1 240.9L1725.7 190.4M2098.2 239.9L1742.2 189.8M2117.1 238.9L1758.6 189.1M1581.3 191.0L1746.4 184.6M1556.3 187.1L1719.1 180.8M1532.3 183.2L1692.8 177.2M1509.2 179.5L1667.4 173.8M1486.9 176.0L1643.0 170.4M1465.5 172.6L1619.4 167.2M1444.8 169.3L1596.7 164.1M1424.8 166.1L1574.7 161.1M1405.6 163.0L1553.5 158.2M2754.6 317.7L2154.6 236.8M2775.8 316.0L2173.0 235.8M2796.8 314.2L2191.4 234.8M2817.6 312.5L2209.5 233.8M2838.1 310.8L2227.6 232.9M2858.4 309.1L2245.5 231.9M2878.5 307.4L2263.2 230.9M2898.4 305.7L2280.8 230.0M2918.1 304.1L2298.3 229.0M1746.4 184.6L1901.2 178.5M1719.1 180.8L1871.9 175.0M1692.8 177.2L1843.6 171.6M1667.4 173.8L1816.3 168.3M1643.0 170.4L1790.0 165.2M1619.4 167.2L1764.6 162.1M1596.7 164.1L1740.0 159.2M1574.7 161.1L1716.3 156.4M1553.5 158.2L1693.3 153.6M1901.2 178.5L2046.6 172.8M1871.9 175.0L2015.5 169.5M1843.6 171.6L1985.5 166.3M1816.3 168.3L1956.6 163.2M1790.0 165.2L1928.6 160.2M1764.6 162.1L1901.6 157.4M1740.0 159.2L1875.5 154.6M1716.3 156.4L1850.2 151.9M1693.3 153.6L1825.7 149.3M2046.6 172.8L2183.4 167.4M2015.5 169.5L2150.8 164.3M1985.5 166.3L2119.4 161.3M1956.6 163.2L2089.0 158.4M1928.6 160.2L2059.7 155.6M1901.6 157.4L2031.2 152.8M1875.5 154.6L2003.7 150.2M1850.2 151.9L1977.1 147.7M1825.7 149.3L1951.3 145.2M2183.4 167.4L2312.3 162.3M2150.8 164.3L2278.5 159.4M2119.4 161.3L2245.9 156.6M2089.0 158.4L2214.2 153.8M2059.7 155.6L2183.6 151.1M2031.2 152.8L2154.0 148.6M2003.7 150.2L2125.3 146.1M1977.1 147.7L2097.5 143.6M1951.3 145.2L2070.5 141.3M2312.3 162.3L2434.1 157.6M2278.5 159.4L2399.2 154.8M2245.9 156.6L2365.5 152.1M2214.2 153.8L2332.8 149.5M2183.6 151.1L2301.2 147.0M2154.0 148.6L2270.5 144.5M2125.3 146.1L2240.7 142.1M2097.5 143.6L2211.9 139.8M2070.5 141.3L2183.9 137.6M2434.1 157.6L2549.3 153.0M2399.2 154.8L2513.5 150.4M2365.5 152.1L2478.8 147.9M2332.8 149.5L2445.2 145.4M2301.2 147.0L2412.7 143.0M2270.5 144.5L2381.1 140.7M2240.7 142.1L2350.5 138.4M2211.9 139.8L2320.7 136.2M2183.9 137.6L2291.8 134.1" stroke="#9f9c97" stroke-opacity="0.15" stroke-width="1" fill="none"/>
<path d="M-3938.3 567.9L-2386.6 356.1M-3837.2 562.4L-2331.6 353.9M-3738.0 557.0L-2277.3 351.7M-3640.6 551.8L-2223.6 349.5M-3545.1 546.6L-2170.6 347.4M-3451.3 541.5L-2118.2 345.3M-3359.2 536.5L-2066.4 343.2M-3268.8 531.6L-2015.2 341.1M-3180.0 526.7L-1964.6 339.1M-3007.0 517.3L-1865.2 335.1M-2922.8 512.7L-1816.3 333.1M-2840.0 508.2L-1768.0 331.2M-2758.7 503.8L-1720.2 329.3M-2678.7 499.5L-1673.0 327.3M-2600.1 495.2L-1626.3 325.5M-2522.7 491.0L-1580.1 323.6M-2446.7 486.9L-1534.5 321.8M-2371.9 482.8L-1489.3 319.9M-2225.9 474.9L-1400.5 316.4M-2154.7 471.0L-1356.7 314.6M-2084.6 467.2L-1313.5 312.9M-2015.6 463.4L-1270.7 311.1M-1947.6 459.8L-1228.4 309.4M-1880.7 456.1L-1186.5 307.8M-1814.9 452.5L-1145.1 306.1M-1750.1 449.0L-1104.1 304.4M-1686.2 445.5L-1063.5 302.8M-983.7 299.6L-678.6 226.1M-944.3 298.0L-649.7 225.1M-905.4 296.4L-621.0 224.2M-866.9 294.9L-592.6 223.3M-828.7 293.3L-564.4 222.4M-791.0 291.8L-536.4 221.5M-753.6 290.3L-508.6 220.6M-716.6 288.8L-481.0 219.8M-679.9 287.3L-453.7 218.9M-607.7 284.4L-399.6 217.2M-572.2 283.0L-372.8 216.3M-536.9 281.6L-346.3 215.4M-502.0 280.2L-319.9 214.6M-467.5 278.8L-293.8 213.8M-433.3 277.4L-267.8 212.9M-399.4 276.0L-242.1 212.1M-365.8 274.7L-216.5 211.3M-332.5 273.3L-191.1 210.5M-399.6 217.2L-268.4 174.8M-372.8 216.3L-247.0 174.2M-346.3 215.4L-225.7 173.6M-319.9 214.6L-204.6 173.1M-293.8 213.8L-183.6 172.5M-267.8 212.9L-162.7 172.0M-242.1 212.1L-141.9 171.4M-216.5 211.3L-121.3 170.9M-191.1 210.5L-100.8 170.3M-282.9 264.3L21.3 252.3M-267.2 256.9L28.7 245.6M-252.2 249.9L35.7 239.2M-238.0 243.3L42.3 233.1M-224.5 237.0L48.6 227.3M-211.7 231.0L54.7 221.7M-199.4 225.3L60.4 216.5M-187.7 219.9L65.9 211.4M-176.6 214.7L71.2 206.6M-60.1 169.3L-3.9 141.7M-40.0 168.7L13.1 141.3M-19.9 168.2L29.9 140.9M-0.0 167.7L46.7 140.5M19.8 167.1L63.4 140.2M39.4 166.6L80.0 139.8M59.0 166.1L96.5 139.4M78.4 165.6L113.0 139.0M97.8 165.1L129.3 138.7M-3.9 141.7L37.5 121.4M13.1 141.3L52.1 121.1M29.9 140.9L66.7 120.8M46.7 140.5L81.2 120.5M63.4 140.2L95.6 120.2M80.0 139.8L110.0 120.0M96.5 139.4L124.3 119.7M113.0 139.0L138.5 119.4M129.3 138.7L152.7 119.1M21.3 252.3L300.2 241.4M28.7 245.6L300.4 235.2M35.7 239.2L300.6 229.3M42.3 233.1L300.8 223.6M48.6 227.3L301.0 218.3M54.7 221.7L301.2 213.1M60.4 216.5L301.4 208.2M65.9 211.4L301.5 203.5M71.2 206.6L301.7 199.0M180.9 118.6L195.6 103.6M194.9 118.3L207.9 103.4M208.8 118.0L220.3 103.2M222.7 117.7L232.5 103.0M236.5 117.5L244.8 102.8M250.3 117.2L257.0 102.6M264.0 116.9L269.1 102.4M277.6 116.7L281.2 102.1M291.2 116.4L293.2 101.9M195.6 103.6L207.3 91.8M207.9 103.4L218.3 91.6M220.3 103.2L229.4 91.4M232.5 103.0L240.4 91.2M244.8 102.8L251.4 91.1M257.0 102.6L262.3 90.9M269.1 102.4L273.2 90.7M281.2 102.1L284.0 90.6M293.2 101.9L294.9 90.4M207.3 91.8L216.8 82.1M218.3 91.6L226.8 82.0M229.4 91.4L236.8 81.8M240.4 91.2L246.8 81.7M251.4 91.1L256.7 81.5M262.3 90.9L266.6 81.4M273.2 90.7L276.5 81.3M284.0 90.6L286.4 81.1M294.9 90.4L296.2 81.0M216.8 82.1L224.7 74.1M226.8 82.0L233.8 74.0M236.8 81.8L243.0 73.9M246.8 81.7L252.1 73.7M256.7 81.5L261.2 73.6M266.6 81.4L270.3 73.5M276.5 81.3L279.3 73.4M286.4 81.1L288.3 73.3M296.2 81.0L297.3 73.2M300.2 241.4L556.6 231.3M300.4 235.2L550.8 225.6M300.6 229.3L545.2 220.1M300.8 223.6L539.9 214.9M301.0 218.3L534.9 209.9M301.2 213.1L530.0 205.2M301.4 208.2L525.4 200.6M301.5 203.5L520.9 196.2M301.7 199.0L516.7 192.0M315.2 72.9L314.8 66.3M324.1 72.8L323.0 66.2M333.0 72.7L331.2 66.2M341.9 72.6L339.4 66.1M350.7 72.5L347.6 66.0M359.6 72.4L355.7 65.9M368.4 72.2L363.8 65.8M377.1 72.1L371.9 65.7M385.9 72.0L380.0 65.6M314.8 66.3L314.4 60.7M323.0 66.2L322.0 60.6M331.2 66.2L329.6 60.5M339.4 66.1L337.2 60.5M347.6 66.0L344.8 60.4M355.7 65.9L352.4 60.3M363.8 65.8L359.9 60.2M371.9 65.7L367.5 60.1M380.0 65.6L375.0 60.1M314.4 60.7L314.0 55.8M322.0 60.6L321.2 55.8M329.6 60.5L328.3 55.7M337.2 60.5L335.4 55.6M344.8 60.4L342.5 55.6M352.4 60.3L349.5 55.5M359.9 60.2L356.6 55.4M367.5 60.1L363.6 55.3M375.0 60.1L370.6 55.3M314.0 55.8L313.8 51.6M321.2 55.8L320.4 51.5M328.3 55.7L327.1 51.5M335.4 55.6L333.7 51.4M342.5 55.6L340.4 51.3M349.5 55.5L347.0 51.3M356.6 55.4L353.6 51.2M363.6 55.3L360.2 51.1M370.6 55.3L366.8 51.1M313.8 51.6L313.5 47.8M320.4 51.5L319.8 47.8M327.1 51.5L326.1 47.7M333.7 51.4L332.3 47.7M340.4 51.3L338.6 47.6M347.0 51.3L344.8 47.5M353.6 51.2L351.0 47.5M360.2 51.1L357.2 47.4M366.8 51.1L363.4 47.4M556.6 231.3L793.2 222.0M550.8 225.6L782.2 216.7M545.2 220.1L771.8 211.7M539.9 214.9L761.8 206.8M534.9 209.9L752.2 202.2M530.0 205.2L743.0 197.7M525.4 200.6L734.2 193.5M520.9 196.2L725.8 189.4M516.7 192.0L717.6 185.5M449.8 113.3L434.3 99.5M462.7 113.0L445.8 99.3M475.5 112.8L457.3 99.1M488.3 112.5L468.7 98.9M501.0 112.3L480.0 98.7M513.6 112.0L491.3 98.5M526.2 111.8L502.6 98.3M538.8 111.5L513.8 98.1M551.3 111.3L525.0 97.9M434.3 99.5L421.9 88.4M445.8 99.3L432.3 88.3M457.3 99.1L442.6 88.1M468.7 98.9L452.9 87.9M480.0 98.7L463.2 87.8M491.3 98.5L473.4 87.6M502.6 98.3L483.6 87.5M513.8 98.1L493.8 87.3M525.0 97.9L503.9 87.1M421.9 88.4L411.8 79.4M432.3 88.3L421.2 79.2M442.6 88.1L430.6 79.1M452.9 87.9L440.0 79.0M463.2 87.8L449.4 78.8M473.4 87.6L458.7 78.7M483.6 87.5L468.0 78.6M493.8 87.3L477.3 78.4M503.9 87.1L486.5 78.3M411.8 79.4L403.3 71.8M421.2 79.2L412.0 71.7M430.6 79.1L420.6 71.6M440.0 79.0L429.2 71.5M449.4 78.8L437.8 71.3M458.7 78.7L446.4 71.2M468.0 78.6L455.0 71.1M477.3 78.4L463.5 71.0M486.5 78.3L472.0 70.9M793.2 222.0L1012.2 213.4M782.2 216.7L996.9 208.5M771.8 211.7L982.2 203.8M761.8 206.8L968.2 199.3M752.2 202.2L954.7 195.0M743.0 197.7L941.8 190.8M734.2 193.5L929.3 186.8M725.8 189.4L917.4 183.0M717.6 185.5L905.9 179.3M728.8 181.1L661.6 150.1M747.8 180.5L677.7 149.7M766.5 179.9L693.7 149.3M785.2 179.3L709.6 148.9M803.8 178.7L725.4 148.5M822.2 178.1L741.1 148.0M840.5 177.5L756.8 147.6M858.7 176.9L772.3 147.2M876.8 176.3L787.8 146.8M661.6 150.1L613.0 127.8M677.7 149.7L626.9 127.4M693.7 149.3L640.8 127.1M709.6 148.9L654.7 126.8M725.4 148.5L668.5 126.5M741.1 148.0L682.2 126.2M756.8 147.6L695.8 125.9M772.3 147.2L709.4 125.6M787.8 146.8L722.9 125.3M1266.9 285.1L1049.6 217.7M1293.3 283.6L1070.9 216.8M1319.4 282.2L1092.0 216.0M1345.3 280.8L1112.9 215.1M1371.0 279.4L1133.7 214.3M1396.4 278.0L1154.3 213.4M1421.6 276.7L1174.8 212.6M1446.5 275.3L1195.1 211.8M1471.2 274.0L1215.3 211.0M1049.6 217.7L912.7 175.2M1070.9 216.8L930.5 174.6M1092.0 216.0L948.1 174.1M1112.9 215.1L965.7 173.5M1133.7 214.3L983.1 172.9M1154.3 213.4L1000.4 172.4M1174.8 212.6L1017.7 171.8M1195.1 211.8L1034.8 171.3M1215.3 211.0L1051.8 170.8M1990.1 381.4L1519.9 271.3M2020.4 378.8L1543.9 270.0M2050.2 376.4L1567.7 268.7M2079.7 373.9L1591.2 267.4M2108.8 371.5L1614.6 266.2M2137.6 369.1L1637.7 264.9M2165.9 366.7L1660.7 263.7M2194.0 364.4L1683.4 262.4M2221.7 362.1L1705.9 261.2M2727.3 198.5L2859.6 191.5M2678.3 194.2L2809.5 187.5M2631.1 190.1L2761.4 183.7M2585.8 186.1L2715.1 180.0M2542.3 182.4L2670.5 176.4M2500.3 178.7L2627.5 173.0M2460.0 175.2L2586.0 169.7M2421.1 171.8L2546.1 166.5M2383.5 168.5L2507.4 163.4M2859.6 191.5L2983.3 185.0M2809.5 187.5L2932.5 181.3M2761.4 183.7L2883.6 177.7M2715.1 180.0L2836.4 174.2M2670.5 176.4L2791.0 170.8M2627.5 173.0L2747.1 167.6M2586.0 169.7L2704.8 164.5M2546.1 166.5L2663.9 161.5M2507.4 163.4L2624.4 158.6M2983.3 185.0L3099.3 178.9M2932.5 181.3L3047.9 175.4M2883.6 177.7L2998.3 172.0M2836.4 174.2L2950.6 168.7M2791.0 170.8L2904.4 165.6M2747.1 167.6L2859.9 162.5M2704.8 164.5L2816.9 159.6M2663.9 161.5L2775.3 156.8M2624.4 158.6L2735.0 154.0M3099.3 178.9L3208.2 173.2M3047.9 175.4L3156.4 169.9M2998.3 172.0L3106.4 166.7M2950.6 168.7L3058.1 163.6M2904.4 165.6L3011.5 160.6M2859.9 162.5L2966.4 157.8M2816.9 159.6L2922.8 155.0M2775.3 156.8L2880.6 152.3M2735.0 154.0L2839.8 149.7M3208.2 173.2L3310.7 167.8M3156.4 169.9L3258.6 164.7M3106.4 166.7L3208.3 161.7M3058.1 163.6L3159.6 158.8M3011.5 160.6L3112.6 156.0M2966.4 157.8L3067.1 153.2M2922.8 155.0L3023.1 150.6M2880.6 152.3L2980.4 148.0M2839.8 149.7L2939.1 145.6M3310.7 167.8L3407.3 162.8M3258.6 164.7L3355.0 159.8M3208.3 161.7L3304.5 157.0M3159.6 158.8L3255.6 154.2M3112.6 156.0L3208.3 151.5M3067.1 153.2L3162.5 148.9M3023.1 150.6L3118.1 146.4M2980.4 148.0L3075.1 144.0M2939.1 145.6L3033.4 141.7M3407.3 162.8L3498.5 158.0M3355.0 159.8L3446.2 155.2M3304.5 157.0L3395.6 152.5M3255.6 154.2L3346.6 149.9M3208.3 151.5L3299.1 147.3M3162.5 148.9L3253.0 144.9M3118.1 146.4L3208.4 142.5M3075.1 144.0L3165.1 140.2M3033.4 141.7L3123.1 138.0" stroke="#9f9c97" stroke-opacity="0.30" stroke-width="1" fill="none"/>
<path d="M-1840.2 325.4L-1389.0 307.7M-1770.5 314.5L-1336.9 297.9M-1705.3 304.2L-1287.8 288.6M-1644.0 294.6L-1241.5 279.9M-1586.4 285.6L-1197.9 271.7M-1532.0 277.0L-1156.7 264.0M-1480.7 269.0L-1117.6 256.6M-1432.1 261.4L-1080.6 249.6M-1386.2 254.1L-1045.5 243.0M-1389.0 307.7L-983.3 291.8M-1336.9 297.9L-945.5 282.9M-1287.8 288.6L-909.9 274.5M-1241.5 279.9L-876.2 266.6M-1197.9 271.7L-844.3 259.1M-1156.7 264.0L-814.1 252.0M-1117.6 256.6L-785.5 245.3M-1080.6 249.6L-758.3 238.9M-1045.5 243.0L-732.4 232.8M-1561.3 438.8L-983.7 299.6M-1500.3 435.4L-944.3 298.0M-1440.1 432.2L-905.4 296.4M-1380.9 429.0L-866.9 294.9M-1322.5 425.8L-828.7 293.3M-1264.9 422.6L-791.0 291.8M-1208.1 419.6L-753.6 290.3M-1152.2 416.5L-716.6 288.8M-1097.0 413.5L-679.9 287.3M-983.3 291.8L-616.3 277.3M-945.5 282.9L-590.5 269.3M-909.9 274.5L-566.1 261.7M-876.2 266.6L-543.0 254.4M-844.3 259.1L-521.1 247.6M-814.1 252.0L-500.3 241.1M-785.5 245.3L-480.5 234.9M-758.3 238.9L-461.6 229.0M-732.4 232.8L-443.7 223.4M-989.0 407.7L-607.7 284.4M-936.1 404.8L-572.2 283.0M-884.0 401.9L-536.9 281.6M-832.5 399.2L-502.0 280.2M-781.7 396.4L-467.5 278.8M-731.7 393.7L-433.3 277.4M-682.3 391.0L-399.4 276.0M-633.5 388.3L-365.8 274.7M-585.4 385.7L-332.5 273.3M-616.3 277.3L-282.9 264.3M-590.5 269.3L-267.2 256.9M-566.1 261.7L-252.2 249.9M-543.0 254.4L-238.0 243.3M-521.1 247.6L-224.5 237.0M-500.3 241.1L-211.7 231.0M-480.5 234.9L-199.4 225.3M-461.6 229.0L-187.7 219.9M-443.7 223.4L-176.6 214.7M-267.0 270.7L-140.9 208.9M-234.6 269.4L-116.1 208.1M-202.6 268.1L-91.4 207.3M-170.9 266.8L-67.0 206.5M-139.4 265.6L-42.7 205.7M-108.2 264.3L-18.5 205.0M-77.4 263.1L5.4 204.2M-46.8 261.8L29.2 203.4M-16.4 260.6L52.8 202.7M-140.9 208.9L-60.1 169.3M-116.1 208.1L-40.0 168.7M-91.4 207.3L-19.9 168.2M-67.0 206.5L-0.0 167.7M-42.7 205.7L19.8 167.1M-18.5 205.0L39.4 166.6M5.4 204.2L59.0 166.1M29.2 203.4L78.4 165.6M52.8 202.7L97.8 165.1M161.8 137.9L180.9 118.6M177.9 137.6L194.9 118.3M193.9 137.2L208.8 118.0M209.9 136.9L222.7 117.7M225.8 136.5L236.5 117.5M241.6 136.1L250.3 117.2M257.3 135.8L264.0 116.9M273.0 135.4L277.6 116.7M288.5 135.1L291.2 116.4M316.4 90.1L315.8 80.7M327.1 89.9L325.5 80.6M337.8 89.7L335.2 80.4M348.4 89.6L344.9 80.3M359.0 89.4L354.5 80.2M369.6 89.2L364.1 80.0M380.1 89.1L373.7 79.9M390.6 88.9L383.3 79.8M401.1 88.7L392.8 79.6M315.8 80.7L315.2 72.9M325.5 80.6L324.1 72.8M335.2 80.4L333.0 72.7M344.9 80.3L341.9 72.6M354.5 80.2L350.7 72.5M364.1 80.0L359.6 72.4M373.7 79.9L368.4 72.2M383.3 79.8L377.1 72.1M392.8 79.6L385.9 72.0M469.7 131.0L449.8 113.3M484.3 130.7L462.7 113.0M498.9 130.3L475.5 112.8M513.4 130.0L488.3 112.5M527.8 129.7L501.0 112.3M542.2 129.4L513.6 112.0M556.5 129.0L526.2 111.8M570.7 128.7L538.8 111.5M584.8 128.4L551.3 111.3M827.8 226.6L728.8 181.1M850.7 225.7L747.8 180.5M873.5 224.8L766.5 179.9M896.1 223.8L785.2 179.3M918.6 222.9L803.8 178.7M940.8 222.0L822.2 178.1M962.9 221.2L840.5 177.5M984.8 220.3L858.7 176.9M1006.6 219.4L876.8 176.3M1664.6 408.5L1266.9 285.1M1699.2 405.6L1293.3 283.6M1733.3 402.7L1319.4 282.2M1766.9 399.9L1345.3 280.8M1800.1 397.2L1371.0 279.4M1832.8 394.4L1396.4 278.0M1865.1 391.8L1421.6 276.7M1897.0 389.1L1446.5 275.3M1928.5 386.5L1471.2 274.0M1899.9 241.9L2092.0 231.8M1861.1 235.7L2050.1 226.1M1824.0 229.8L2010.2 220.6M1788.7 224.2L1972.0 215.4M1755.1 218.8L1935.6 210.4M1722.9 213.6L1900.7 205.7M1692.1 208.7L1867.2 201.1M1662.6 204.0L1835.2 196.7M1634.4 199.5L1804.4 192.5M2092.0 231.8L2269.2 222.5M2050.1 226.1L2224.9 217.2M2010.2 220.6L2182.6 212.2M1972.0 215.4L2142.1 207.3M1935.6 210.4L2103.3 202.7M1900.7 205.7L2066.1 198.2M1867.2 201.1L2030.5 194.0M1835.2 196.7L1996.2 189.9M1804.4 192.5L1963.3 185.9M2269.2 222.5L2433.3 213.9M2224.9 217.2L2387.0 209.0M2182.6 212.2L2342.8 204.3M2142.1 207.3L2300.3 199.8M2103.3 202.7L2259.6 195.4M2066.1 198.2L2220.6 191.3M2030.5 194.0L2183.0 187.3M1996.2 189.9L2146.9 183.5M1963.3 185.9L2112.2 179.8M2433.3 213.9L2585.6 205.9M2387.0 209.0L2537.7 201.3M2342.8 204.3L2491.9 196.9M2300.3 199.8L2447.9 192.7M2259.6 195.4L2405.6 188.7M2220.6 191.3L2365.0 184.8M2183.0 187.3L2325.9 181.0M2146.9 183.5L2288.3 177.4M2112.2 179.8L2252.0 174.0M2585.6 205.9L2727.3 198.5M2537.7 201.3L2678.3 194.2M2491.9 196.9L2631.1 190.1M2447.9 192.7L2585.8 186.1M2405.6 188.7L2542.3 182.4M2365.0 184.8L2500.3 178.7M2325.9 181.0L2460.0 175.2M2288.3 177.4L2421.1 171.8M2252.0 174.0L2383.5 168.5" stroke="#9f9c97" stroke-opacity="0.45" stroke-width="1" fill="none"/>
<path d="M-15131.9 1806.6L-5193.8 636.2M-10077.9 1385.9L-4041.3 573.5M-6925.2 1123.5L-3092.7 522.0" stroke="#5e616d" stroke-width="3.2" fill="none" stroke-opacity="0.22"/>
<path d="M-5193.8 636.2L-3038.9 382.4M-4041.3 573.5L-2442.2 358.3M-1023.4 301.2L-707.7 227.0M-426.5 218.0L-289.9 175.3M-20.9 142.1L22.8 121.7M206.7 82.2L215.5 74.2M215.5 74.2L222.8 67.4M402.3 79.5L394.6 71.9M394.6 71.9L388.1 65.5M598.9 128.1L563.7 111.0M1495.7 272.6L1235.4 210.2M2249.0 359.8L1728.2 260.0M2696.1 151.3L2800.2 147.1M2800.2 147.1L2899.0 143.2M301.8 194.7L512.6 188.0M512.6 188.0L709.8 181.7" stroke="#5e616d" stroke-width="2.6" fill="none" stroke-opacity="0.13"/>
<path d="M-3038.9 382.4L-2096.7 271.4M-1342.5 247.3L-1004.6 194.3M-750.6 187.5L-575.6 154.6M-380.7 150.2L-285.2 127.7M-127.7 124.6L-75.6 108.4M-75.6 108.4L-34.6 95.5M104.2 83.7L122.0 75.4M122.0 75.4L136.9 68.5M136.9 68.5L149.6 62.5M243.5 48.4L247.2 45.0M247.2 45.0L250.6 42.0M250.6 42.0L253.5 39.3M253.5 39.3L256.2 36.8M366.3 44.0L363.3 41.1M363.3 41.1L360.6 38.5M360.6 38.5L358.2 36.1M358.2 36.1L356.0 33.9M495.7 78.2L480.5 70.8M480.5 70.8L467.6 64.5M736.4 125.0L685.5 108.6M685.5 108.6L645.4 95.8M1068.7 170.2L952.9 142.4M952.9 142.4L867.8 122.0M1427.9 202.4L1232.5 165.0M1940.8 248.4L1607.3 195.2M2733.2 319.5L2135.9 237.8M1532.9 155.4L1671.1 151.0M1671.1 151.0L1802.0 146.8M1802.0 146.8L1926.2 142.8M-750.6 187.5L-512.9 181.2M-512.9 181.2L-289.9 175.3" stroke="#5e616d" stroke-width="2.6" fill="none" stroke-opacity="0.07"/>
<path d="M-2096.7 271.4L-1568.3 209.2M-1702.7 258.8L-1276.5 201.5M-1276.5 201.5L-999.3 164.1M-1004.6 194.3L-781.4 159.2M-575.6 154.6L-450.1 131.0M-450.1 131.0L-355.8 113.2M-285.2 127.7L-212.9 110.7M-212.9 110.7L-156.2 97.4M-34.6 95.5L-1.5 85.2M-1.5 85.2L25.8 76.7M25.8 76.7L48.7 69.5M149.6 62.5L160.6 57.4M160.6 57.4L170.2 52.9M170.2 52.9L178.6 49.0M178.6 49.0L186.0 45.6M256.2 36.8L258.7 34.5M258.7 34.5L260.9 32.5M260.9 32.5L263.0 30.6M263.0 30.6L264.8 28.9M264.8 28.9L266.6 27.3M266.6 27.3L268.2 25.8M268.2 25.8L269.7 24.5M356.0 33.9L353.9 31.9M353.9 31.9L352.1 30.1M352.1 30.1L350.4 28.4M350.4 28.4L348.8 26.8M348.8 26.8L347.3 25.4M347.3 25.4L346.0 24.1M346.0 24.1L344.7 22.8M467.6 64.5L456.4 59.2M456.4 59.2L446.8 54.5M446.8 54.5L438.3 50.4M438.3 50.4L430.8 46.8M430.8 46.8L424.2 43.5M645.4 95.8L613.1 85.4M613.1 85.4L586.4 76.9M586.4 76.9L564.1 69.7M867.8 122.0L802.5 106.3M802.5 106.3L750.9 94.0M1232.5 165.0L1095.2 138.7M1095.2 138.7L993.5 119.2M1607.3 195.2L1387.0 160.0M1387.0 160.0L1230.6 135.1M2135.9 237.8L1774.8 188.5M2937.6 302.5L2315.6 228.1M2315.6 228.1L1931.7 182.1M3122.0 287.1L2481.6 219.0M1926.2 142.8L2044.3 139.0M2044.3 139.0L2156.7 135.4M2156.7 135.4L2263.7 132.0M2263.7 132.0L2365.8 128.7M-289.9 175.3L-80.4 169.8M-80.4 169.8L117.0 164.6M117.0 164.6L303.1 159.6" stroke="#5e616d" stroke-width="2.6" fill="none" stroke-opacity="0.04"/>
<path d="M-1568.3 209.2L-1230.2 169.4M-1230.2 169.4L-995.3 141.7M-999.3 164.1L-804.6 137.9M-804.6 137.9L-660.3 118.5M-781.4 159.2L-623.0 134.4M-623.0 134.4L-504.8 115.8M-504.8 115.8L-413.2 101.4M-355.8 113.2L-282.4 99.4M-282.4 99.4L-223.5 88.3M-223.5 88.3L-175.3 79.3M-156.2 97.4L-110.7 86.7M-110.7 86.7L-73.3 77.9M-73.3 77.9L-41.9 70.6M-41.9 70.6L-15.4 64.3M48.7 69.5L68.2 63.4M68.2 63.4L84.9 58.2M84.9 58.2L99.5 53.6M99.5 53.6L112.3 49.6M112.3 49.6L123.7 46.1M186.0 45.6L192.7 42.5M192.7 42.5L198.7 39.7M198.7 39.7L204.0 37.2M204.0 37.2L208.9 34.9M208.9 34.9L213.4 32.8M213.4 32.8L217.5 30.9M217.5 30.9L221.2 29.2M269.7 24.5L271.0 23.2M424.2 43.5L418.2 40.7M418.2 40.7L412.8 38.1M412.8 38.1L407.9 35.7M407.9 35.7L403.5 33.6M403.5 33.6L399.4 31.6M399.4 31.6L395.7 29.8M395.7 29.8L392.3 28.1M564.1 69.7L545.1 63.6M545.1 63.6L528.7 58.4M528.7 58.4L514.4 53.8M514.4 53.8L501.9 49.8M501.9 49.8L490.8 46.2M490.8 46.2L481.0 43.1M750.9 94.0L709.1 83.9M709.1 83.9L674.5 75.6M674.5 75.6L645.4 68.7M645.4 68.7L620.7 62.7M993.5 119.2L915.1 104.1M915.1 104.1L852.8 92.2M852.8 92.2L802.1 82.5M1230.6 135.1L1113.9 116.4M1113.9 116.4L1023.4 102.0M1774.8 188.5L1532.9 155.4M1532.9 155.4L1359.6 131.7M1359.6 131.7L1229.3 113.8M1931.7 182.1L1671.1 151.0M1671.1 151.0L1482.6 128.4M2481.6 219.0L2078.8 176.2M2078.8 176.2L1802.0 146.8M3289.0 273.2L2635.5 210.7M2635.5 210.7L2217.1 170.6M3441.1 260.6L2778.5 202.9M3580.2 249.0L2911.7 195.7M2365.8 128.7L2463.3 125.6M2463.3 125.6L2556.5 122.6M2556.5 122.6L2645.7 119.8M2645.7 119.8L2731.0 117.1M303.1 159.6L479.0 155.0M479.0 155.0L645.5 150.6M645.5 150.6L803.2 146.4M803.2 146.4L952.9 142.4" stroke="#5e616d" stroke-width="2.6" fill="none" stroke-opacity="0.02"/>
<path d="M-2442.2 358.3L-1702.7 258.8M-1914.6 337.1L-1342.5 247.3M-1012.0 236.7L-750.6 187.5M-512.9 181.2L-380.7 150.2M-196.1 146.0L-127.7 124.6M56.3 106.1L82.8 93.7M82.8 93.7L104.2 83.7M234.6 56.7L239.3 52.3M239.3 52.3L243.5 48.4M377.6 55.2L373.4 51.0M373.4 51.0L369.6 47.3M369.6 47.3L366.3 44.0M536.2 97.7L514.0 87.0M514.0 87.0L495.7 78.2M803.2 146.4L736.4 125.0M1235.4 210.2L1068.7 170.2M1728.2 260.0L1427.9 202.4M2505.1 338.5L1940.8 248.4M1068.7 170.2L1232.5 165.0M1232.5 165.0L1387.0 160.0M1387.0 160.0L1532.9 155.4M-1276.5 201.5L-1004.6 194.3M-1004.6 194.3L-750.6 187.5" stroke="#5e616d" stroke-width="2.6" fill="none" stroke-opacity="0.09"/>
<path d="M-3092.7 522.0L-1914.6 337.1M196.1 91.9L206.7 82.2M411.5 88.6L402.3 79.5M645.5 150.6L598.9 128.1M1028.2 218.5L894.8 175.8M2347.3 165.4L2470.1 160.4M2470.1 160.4L2586.2 155.8M2586.2 155.8L2696.1 151.3M76.2 201.9L301.8 194.7" stroke="#5e616d" stroke-width="2.6" fill="none" stroke-opacity="0.15"/>
<path d="M-4770.8 944.1L-2298.3 478.8M958.3 301.8L804.6 227.5" stroke="#5e616d" stroke-width="3.3" fill="none" stroke-opacity="0.22"/>
<path d="M-2298.3 478.8L-1444.6 318.1M-80.4 169.8L-20.9 142.1M183.1 103.9L196.1 91.9M422.8 99.7L411.5 88.6M2217.1 170.6L2347.3 165.4M-426.5 218.0L-165.9 209.7M-165.9 209.7L76.2 201.9" stroke="#5e616d" stroke-width="2.6" fill="none" stroke-opacity="0.18"/>
<path d="M-1444.6 318.1L-1012.0 236.7M-707.7 227.0L-512.9 181.2M-289.9 175.3L-196.1 146.0M22.8 121.7L56.3 106.1M222.8 67.4L229.1 61.7M229.1 61.7L234.6 56.7M388.1 65.5L382.5 60.0M382.5 60.0L377.6 55.2M563.7 111.0L536.2 97.7M894.8 175.8L803.2 146.4M2899.0 143.2L2992.9 139.4M2992.9 139.4L3082.3 135.8M709.8 181.7L894.8 175.8M894.8 175.8L1068.7 170.2M-1568.3 209.2L-1276.5 201.5" stroke="#5e616d" stroke-width="2.6" fill="none" stroke-opacity="0.11"/>
<path d="M-3205.3 813.8L-1623.3 442.1" stroke="#5e616d" stroke-width="3.5" fill="none" stroke-opacity="0.22"/>
<path d="M-1623.3 442.1L-1023.4 301.2M-165.9 209.7L-80.4 169.8M166.8 118.8L183.1 103.9M436.9 113.5L422.8 99.7" stroke="#5e616d" stroke-width="2.8" fill="none" stroke-opacity="0.20"/>
<path d="M-2016.3 714.9L-1042.7 410.6M562.7 237.3L512.6 188.0" stroke="#5e616d" stroke-width="3.8" fill="none" stroke-opacity="0.22"/>
<path d="M-1042.7 410.6L-643.7 285.9M-299.6 272.0L-165.9 209.7M117.0 164.6L145.6 138.3M479.0 155.0L455.0 131.3M1629.6 411.4L1240.2 286.5" stroke="#5e616d" stroke-width="3.1" fill="none" stroke-opacity="0.22"/>
<path d="M-643.7 285.9L-426.5 218.0M709.8 181.7L645.5 150.6M1959.5 383.9L1495.7 272.6M1774.8 188.5L1931.7 182.1M1931.7 182.1L2078.8 176.2M2078.8 176.2L2217.1 170.6M-1012.0 236.7L-707.7 227.0M-707.7 227.0L-426.5 218.0" stroke="#5e616d" stroke-width="2.7" fill="none" stroke-opacity="0.18"/>
<path d="M-1082.5 637.1L-537.9 383.1" stroke="#5e616d" stroke-width="4.5" fill="none" stroke-opacity="0.22"/>
<path d="M-537.9 383.1L-299.6 272.0" stroke="#5e616d" stroke-width="3.6" fill="none" stroke-opacity="0.22"/>
<path d="M-329.8 574.5L-95.0 359.1M809.0 479.7L645.5 318.8" stroke="#5e616d" stroke-width="5.2" fill="none" stroke-opacity="0.22"/>
<path d="M-95.0 359.1L13.6 259.4" stroke="#5e616d" stroke-width="4.6" fill="none" stroke-opacity="0.22"/>
<path d="M13.6 259.4L76.2 201.9M1250.1 443.0L958.3 301.8" stroke="#5e616d" stroke-width="3.9" fill="none" stroke-opacity="0.22"/>
<path d="M76.2 201.9L117.0 164.6M512.6 188.0L479.0 155.0" stroke="#5e616d" stroke-width="3.4" fill="none" stroke-opacity="0.22"/>
<path d="M145.6 138.3L166.8 118.8M455.0 131.3L436.9 113.5M804.6 227.5L709.8 181.7" stroke="#5e616d" stroke-width="2.9" fill="none" stroke-opacity="0.22"/>
<path d="M645.5 318.8L562.7 237.3" stroke="#5e616d" stroke-width="4.4" fill="none" stroke-opacity="0.22"/>
<path d="M1240.2 286.5L1028.2 218.5" stroke="#5e616d" stroke-width="2.7" fill="none" stroke-opacity="0.20"/>
<path d="M-15131.9 1806.6L-10077.9 1385.9M-10077.9 1385.9L-6925.2 1123.5M-6925.2 1123.5L-4770.8 944.1M-4770.8 944.1L-3205.3 813.8M-3205.3 813.8L-2016.3 714.9M-2016.3 714.9L-1082.5 637.1M-1082.5 637.1L-329.8 574.5M-329.8 574.5L289.9 522.9M289.9 522.9L809.0 479.7M809.0 479.7L1250.1 443.0M1250.1 443.0L1629.6 411.4M1629.6 411.4L1959.5 383.9M1959.5 383.9L2249.0 359.8M2249.0 359.8L2505.1 338.5M2505.1 338.5L2733.2 319.5M2733.2 319.5L2937.6 302.5M2937.6 302.5L3122.0 287.1M3122.0 287.1L3289.0 273.2M3289.0 273.2L3441.1 260.6M3441.1 260.6L3580.2 249.0M3580.2 249.0L3707.8 238.4M3707.8 238.4L3825.3 228.6M3825.3 228.6L3933.9 219.6M3933.9 219.6L4034.5 211.2M4034.5 211.2L4128.0 203.4M4128.0 203.4L4215.2 196.1M-5193.8 636.2L-4041.3 573.5M-4041.3 573.5L-3092.7 522.0M-3092.7 522.0L-2298.3 478.8M-2298.3 478.8L-1623.3 442.1M-1623.3 442.1L-1042.7 410.6M-1042.7 410.6L-537.9 383.1M-537.9 383.1L-95.0 359.1M-95.0 359.1L296.6 337.8M296.6 337.8L645.5 318.8M645.5 318.8L958.3 301.8M958.3 301.8L1240.2 286.5M1240.2 286.5L1495.7 272.6M1495.7 272.6L1728.2 260.0M-3038.9 382.4L-2442.2 358.3" stroke="#5e616d" stroke-width="3.8" fill="none" stroke-opacity="0.18"/>
<path d="M1728.2 260.0L1940.8 248.4M-2442.2 358.3L-1914.6 337.1" stroke="#5e616d" stroke-width="3.7" fill="none" stroke-opacity="0.18"/>
<path d="M1940.8 248.4L2135.9 237.8M-1914.6 337.1L-1444.6 318.1" stroke="#5e616d" stroke-width="3.6" fill="none" stroke-opacity="0.18"/>
<path d="M2135.9 237.8L2315.6 228.1M-1444.6 318.1L-1023.4 301.2" stroke="#5e616d" stroke-width="3.5" fill="none" stroke-opacity="0.18"/>
<path d="M2315.6 228.1L2481.6 219.0M2481.6 219.0L2635.5 210.7M-1023.4 301.2L-643.7 285.9" stroke="#5e616d" stroke-width="3.4" fill="none" stroke-opacity="0.18"/>
<path d="M2635.5 210.7L2778.5 202.9M-643.7 285.9L-299.6 272.0" stroke="#5e616d" stroke-width="3.3" fill="none" stroke-opacity="0.18"/>
<path d="M2778.5 202.9L2911.7 195.7M2911.7 195.7L3036.2 188.9M-299.6 272.0L13.6 259.4" stroke="#5e616d" stroke-width="3.2" fill="none" stroke-opacity="0.18"/>
<path d="M3036.2 188.9L3152.7 182.6M3152.7 182.6L3261.9 176.6M13.6 259.4L299.9 247.9M299.9 247.9L562.7 237.3" stroke="#5e616d" stroke-width="3.1" fill="none" stroke-opacity="0.18"/>
<path d="M3261.9 176.6L3364.7 171.1M3364.7 171.1L3461.4 165.8M562.7 237.3L804.6 227.5M804.6 227.5L1028.2 218.5" stroke="#5e616d" stroke-width="3.0" fill="none" stroke-opacity="0.18"/>
<path d="M3461.4 165.8L3552.6 160.8M1028.2 218.5L1235.4 210.2M1235.4 210.2L1427.9 202.4M-2096.7 271.4L-1702.7 258.8" stroke="#5e616d" stroke-width="2.9" fill="none" stroke-opacity="0.18"/>
<path d="M1427.9 202.4L1607.3 195.2M1607.3 195.2L1774.8 188.5M-1702.7 258.8L-1342.5 247.3M-1342.5 247.3L-1012.0 236.7" stroke="#5e616d" stroke-width="2.8" fill="none" stroke-opacity="0.18"/>
<path d="M-1230.2 169.4L-999.3 164.1" stroke="#5e616d" stroke-width="2.6" fill="none" stroke-opacity="0.00"/>
<path d="M-15131.9 1806.6L-5193.8 636.2M-10077.9 1385.9L-4041.3 573.5M-6925.2 1123.5L-3092.7 522.0" stroke="#5e616d" stroke-width="1.6" fill="none" stroke-opacity="1"/>
<path d="M-5193.8 636.2L-3038.9 382.4M-4041.3 573.5L-2442.2 358.3M-1023.4 301.2L-707.7 227.0M-426.5 218.0L-289.9 175.3M-20.9 142.1L22.8 121.7M206.7 82.2L215.5 74.2M215.5 74.2L222.8 67.4M402.3 79.5L394.6 71.9M394.6 71.9L388.1 65.5M598.9 128.1L563.7 111.0M1495.7 272.6L1235.4 210.2M2249.0 359.8L1728.2 260.0M2696.1 151.3L2800.2 147.1M2800.2 147.1L2899.0 143.2M301.8 194.7L512.6 188.0M512.6 188.0L709.8 181.7" stroke="#5e616d" stroke-width="1.0" fill="none" stroke-opacity="0.6"/>
<path d="M-3038.9 382.4L-2096.7 271.4M-1342.5 247.3L-1004.6 194.3M-750.6 187.5L-575.6 154.6M-380.7 150.2L-285.2 127.7M-127.7 124.6L-75.6 108.4M-75.6 108.4L-34.6 95.5M104.2 83.7L122.0 75.4M122.0 75.4L136.9 68.5M136.9 68.5L149.6 62.5M243.5 48.4L247.2 45.0M247.2 45.0L250.6 42.0M250.6 42.0L253.5 39.3M253.5 39.3L256.2 36.8M366.3 44.0L363.3 41.1M363.3 41.1L360.6 38.5M360.6 38.5L358.2 36.1M358.2 36.1L356.0 33.9M495.7 78.2L480.5 70.8M480.5 70.8L467.6 64.5M736.4 125.0L685.5 108.6M685.5 108.6L645.4 95.8M1068.7 170.2L952.9 142.4M952.9 142.4L867.8 122.0M1427.9 202.4L1232.5 165.0M1940.8 248.4L1607.3 195.2M2733.2 319.5L2135.9 237.8M1532.9 155.4L1671.1 151.0M1671.1 151.0L1802.0 146.8M1802.0 146.8L1926.2 142.8M-750.6 187.5L-512.9 181.2M-512.9 181.2L-289.9 175.3" stroke="#5e616d" stroke-width="1.0" fill="none" stroke-opacity="0.3"/>
<path d="M-2096.7 271.4L-1568.3 209.2M-1702.7 258.8L-1276.5 201.5M-1276.5 201.5L-999.3 164.1M-1004.6 194.3L-781.4 159.2M-575.6 154.6L-450.1 131.0M-450.1 131.0L-355.8 113.2M-285.2 127.7L-212.9 110.7M-212.9 110.7L-156.2 97.4M-34.6 95.5L-1.5 85.2M-1.5 85.2L25.8 76.7M25.8 76.7L48.7 69.5M149.6 62.5L160.6 57.4M160.6 57.4L170.2 52.9M170.2 52.9L178.6 49.0M178.6 49.0L186.0 45.6M256.2 36.8L258.7 34.5M258.7 34.5L260.9 32.5M260.9 32.5L263.0 30.6M263.0 30.6L264.8 28.9M264.8 28.9L266.6 27.3M266.6 27.3L268.2 25.8M268.2 25.8L269.7 24.5M356.0 33.9L353.9 31.9M353.9 31.9L352.1 30.1M352.1 30.1L350.4 28.4M350.4 28.4L348.8 26.8M348.8 26.8L347.3 25.4M347.3 25.4L346.0 24.1M346.0 24.1L344.7 22.8M467.6 64.5L456.4 59.2M456.4 59.2L446.8 54.5M446.8 54.5L438.3 50.4M438.3 50.4L430.8 46.8M430.8 46.8L424.2 43.5M645.4 95.8L613.1 85.4M613.1 85.4L586.4 76.9M586.4 76.9L564.1 69.7M867.8 122.0L802.5 106.3M802.5 106.3L750.9 94.0M1232.5 165.0L1095.2 138.7M1095.2 138.7L993.5 119.2M1607.3 195.2L1387.0 160.0M1387.0 160.0L1230.6 135.1M2135.9 237.8L1774.8 188.5M2937.6 302.5L2315.6 228.1M2315.6 228.1L1931.7 182.1M3122.0 287.1L2481.6 219.0M1926.2 142.8L2044.3 139.0M2044.3 139.0L2156.7 135.4M2156.7 135.4L2263.7 132.0M2263.7 132.0L2365.8 128.7M-289.9 175.3L-80.4 169.8M-80.4 169.8L117.0 164.6M117.0 164.6L303.1 159.6" stroke="#5e616d" stroke-width="1.0" fill="none" stroke-opacity="0.2"/>
<path d="M-1568.3 209.2L-1230.2 169.4M-1230.2 169.4L-995.3 141.7M-999.3 164.1L-804.6 137.9M-804.6 137.9L-660.3 118.5M-781.4 159.2L-623.0 134.4M-623.0 134.4L-504.8 115.8M-504.8 115.8L-413.2 101.4M-355.8 113.2L-282.4 99.4M-282.4 99.4L-223.5 88.3M-223.5 88.3L-175.3 79.3M-156.2 97.4L-110.7 86.7M-110.7 86.7L-73.3 77.9M-73.3 77.9L-41.9 70.6M-41.9 70.6L-15.4 64.3M48.7 69.5L68.2 63.4M68.2 63.4L84.9 58.2M84.9 58.2L99.5 53.6M99.5 53.6L112.3 49.6M112.3 49.6L123.7 46.1M186.0 45.6L192.7 42.5M192.7 42.5L198.7 39.7M198.7 39.7L204.0 37.2M204.0 37.2L208.9 34.9M208.9 34.9L213.4 32.8M213.4 32.8L217.5 30.9M217.5 30.9L221.2 29.2M269.7 24.5L271.0 23.2M424.2 43.5L418.2 40.7M418.2 40.7L412.8 38.1M412.8 38.1L407.9 35.7M407.9 35.7L403.5 33.6M403.5 33.6L399.4 31.6M399.4 31.6L395.7 29.8M395.7 29.8L392.3 28.1M564.1 69.7L545.1 63.6M545.1 63.6L528.7 58.4M528.7 58.4L514.4 53.8M514.4 53.8L501.9 49.8M501.9 49.8L490.8 46.2M490.8 46.2L481.0 43.1M750.9 94.0L709.1 83.9M709.1 83.9L674.5 75.6M674.5 75.6L645.4 68.7M645.4 68.7L620.7 62.7M993.5 119.2L915.1 104.1M915.1 104.1L852.8 92.2M852.8 92.2L802.1 82.5M1230.6 135.1L1113.9 116.4M1113.9 116.4L1023.4 102.0M1774.8 188.5L1532.9 155.4M1532.9 155.4L1359.6 131.7M1359.6 131.7L1229.3 113.8M1931.7 182.1L1671.1 151.0M1671.1 151.0L1482.6 128.4M2481.6 219.0L2078.8 176.2M2078.8 176.2L1802.0 146.8M3289.0 273.2L2635.5 210.7M2635.5 210.7L2217.1 170.6M3441.1 260.6L2778.5 202.9M3580.2 249.0L2911.7 195.7M2365.8 128.7L2463.3 125.6M2463.3 125.6L2556.5 122.6M2556.5 122.6L2645.7 119.8M2645.7 119.8L2731.0 117.1M303.1 159.6L479.0 155.0M479.0 155.0L645.5 150.6M645.5 150.6L803.2 146.4M803.2 146.4L952.9 142.4" stroke="#5e616d" stroke-width="1.0" fill="none" stroke-opacity="0.1"/>
<path d="M-2442.2 358.3L-1702.7 258.8M-1914.6 337.1L-1342.5 247.3M-1012.0 236.7L-750.6 187.5M-512.9 181.2L-380.7 150.2M-196.1 146.0L-127.7 124.6M56.3 106.1L82.8 93.7M82.8 93.7L104.2 83.7M234.6 56.7L239.3 52.3M239.3 52.3L243.5 48.4M377.6 55.2L373.4 51.0M373.4 51.0L369.6 47.3M369.6 47.3L366.3 44.0M536.2 97.7L514.0 87.0M514.0 87.0L495.7 78.2M803.2 146.4L736.4 125.0M1235.4 210.2L1068.7 170.2M1728.2 260.0L1427.9 202.4M2505.1 338.5L1940.8 248.4M1068.7 170.2L1232.5 165.0M1232.5 165.0L1387.0 160.0M1387.0 160.0L1532.9 155.4M-1276.5 201.5L-1004.6 194.3M-1004.6 194.3L-750.6 187.5" stroke="#5e616d" stroke-width="1.0" fill="none" stroke-opacity="0.4"/>
<path d="M-3092.7 522.0L-1914.6 337.1M196.1 91.9L206.7 82.2M411.5 88.6L402.3 79.5M645.5 150.6L598.9 128.1M1028.2 218.5L894.8 175.8M2347.3 165.4L2470.1 160.4M2470.1 160.4L2586.2 155.8M2586.2 155.8L2696.1 151.3M76.2 201.9L301.8 194.7" stroke="#5e616d" stroke-width="1.0" fill="none" stroke-opacity="0.7"/>
<path d="M-4770.8 944.1L-2298.3 478.8M958.3 301.8L804.6 227.5" stroke="#5e616d" stroke-width="1.7" fill="none" stroke-opacity="1"/>
<path d="M-2298.3 478.8L-1444.6 318.1M-80.4 169.8L-20.9 142.1M183.1 103.9L196.1 91.9M422.8 99.7L411.5 88.6M2217.1 170.6L2347.3 165.4M-426.5 218.0L-165.9 209.7M-165.9 209.7L76.2 201.9" stroke="#5e616d" stroke-width="1.0" fill="none" stroke-opacity="0.8"/>
<path d="M-1444.6 318.1L-1012.0 236.7M-707.7 227.0L-512.9 181.2M-289.9 175.3L-196.1 146.0M22.8 121.7L56.3 106.1M222.8 67.4L229.1 61.7M229.1 61.7L234.6 56.7M388.1 65.5L382.5 60.0M382.5 60.0L377.6 55.2M563.7 111.0L536.2 97.7M894.8 175.8L803.2 146.4M2899.0 143.2L2992.9 139.4M2992.9 139.4L3082.3 135.8M709.8 181.7L894.8 175.8M894.8 175.8L1068.7 170.2M-1568.3 209.2L-1276.5 201.5" stroke="#5e616d" stroke-width="1.0" fill="none" stroke-opacity="0.5"/>
<path d="M-3205.3 813.8L-1623.3 442.1" stroke="#5e616d" stroke-width="1.9" fill="none" stroke-opacity="1"/>
<path d="M-1623.3 442.1L-1023.4 301.2M-165.9 209.7L-80.4 169.8M166.8 118.8L183.1 103.9M436.9 113.5L422.8 99.7" stroke="#5e616d" stroke-width="1.2" fill="none" stroke-opacity="0.9"/>
<path d="M-2016.3 714.9L-1042.7 410.6M562.7 237.3L512.6 188.0" stroke="#5e616d" stroke-width="2.2" fill="none" stroke-opacity="1"/>
<path d="M-1042.7 410.6L-643.7 285.9M-299.6 272.0L-165.9 209.7M117.0 164.6L145.6 138.3M479.0 155.0L455.0 131.3M1629.6 411.4L1240.2 286.5" stroke="#5e616d" stroke-width="1.5" fill="none" stroke-opacity="1"/>
<path d="M-643.7 285.9L-426.5 218.0M709.8 181.7L645.5 150.6M1959.5 383.9L1495.7 272.6M1774.8 188.5L1931.7 182.1M1931.7 182.1L2078.8 176.2M2078.8 176.2L2217.1 170.6M-1012.0 236.7L-707.7 227.0M-707.7 227.0L-426.5 218.0" stroke="#5e616d" stroke-width="1.1" fill="none" stroke-opacity="0.8"/>
<path d="M-1082.5 637.1L-537.9 383.1" stroke="#5e616d" stroke-width="2.9" fill="none" stroke-opacity="1"/>
<path d="M-537.9 383.1L-299.6 272.0" stroke="#5e616d" stroke-width="2.0" fill="none" stroke-opacity="1"/>
<path d="M-329.8 574.5L-95.0 359.1M809.0 479.7L645.5 318.8" stroke="#5e616d" stroke-width="3.6" fill="none" stroke-opacity="1"/>
<path d="M-95.0 359.1L13.6 259.4" stroke="#5e616d" stroke-width="3.0" fill="none" stroke-opacity="1"/>
<path d="M13.6 259.4L76.2 201.9M1250.1 443.0L958.3 301.8" stroke="#5e616d" stroke-width="2.3" fill="none" stroke-opacity="1"/>
<path d="M76.2 201.9L117.0 164.6M512.6 188.0L479.0 155.0" stroke="#5e616d" stroke-width="1.8" fill="none" stroke-opacity="1"/>
<path d="M145.6 138.3L166.8 118.8M455.0 131.3L436.9 113.5M804.6 227.5L709.8 181.7" stroke="#5e616d" stroke-width="1.3" fill="none" stroke-opacity="1"/>
<path d="M645.5 318.8L562.7 237.3" stroke="#5e616d" stroke-width="2.8" fill="none" stroke-opacity="1"/>
<path d="M1240.2 286.5L1028.2 218.5" stroke="#5e616d" stroke-width="1.1" fill="none" stroke-opacity="0.9"/>
<path d="M-15131.9 1806.6L-10077.9 1385.9M-10077.9 1385.9L-6925.2 1123.5M-6925.2 1123.5L-4770.8 944.1M-4770.8 944.1L-3205.3 813.8M-3205.3 813.8L-2016.3 714.9M-2016.3 714.9L-1082.5 637.1M-1082.5 637.1L-329.8 574.5M-329.8 574.5L289.9 522.9M289.9 522.9L809.0 479.7M809.0 479.7L1250.1 443.0M1250.1 443.0L1629.6 411.4M1629.6 411.4L1959.5 383.9M1959.5 383.9L2249.0 359.8M2249.0 359.8L2505.1 338.5M2505.1 338.5L2733.2 319.5M2733.2 319.5L2937.6 302.5M2937.6 302.5L3122.0 287.1M3122.0 287.1L3289.0 273.2M3289.0 273.2L3441.1 260.6M3441.1 260.6L3580.2 249.0M3580.2 249.0L3707.8 238.4M3707.8 238.4L3825.3 228.6M3825.3 228.6L3933.9 219.6M3933.9 219.6L4034.5 211.2M4034.5 211.2L4128.0 203.4M4128.0 203.4L4215.2 196.1M-5193.8 636.2L-4041.3 573.5M-4041.3 573.5L-3092.7 522.0M-3092.7 522.0L-2298.3 478.8M-2298.3 478.8L-1623.3 442.1M-1623.3 442.1L-1042.7 410.6M-1042.7 410.6L-537.9 383.1M-537.9 383.1L-95.0 359.1M-95.0 359.1L296.6 337.8M296.6 337.8L645.5 318.8M645.5 318.8L958.3 301.8M958.3 301.8L1240.2 286.5M1240.2 286.5L1495.7 272.6M1495.7 272.6L1728.2 260.0M-3038.9 382.4L-2442.2 358.3" stroke="#5e616d" stroke-width="2.2" fill="none" stroke-opacity="0.8"/>
<path d="M1728.2 260.0L1940.8 248.4M-2442.2 358.3L-1914.6 337.1" stroke="#5e616d" stroke-width="2.1" fill="none" stroke-opacity="0.8"/>
<path d="M1940.8 248.4L2135.9 237.8M-1914.6 337.1L-1444.6 318.1" stroke="#5e616d" stroke-width="2.0" fill="none" stroke-opacity="0.8"/>
<path d="M2135.9 237.8L2315.6 228.1M-1444.6 318.1L-1023.4 301.2" stroke="#5e616d" stroke-width="1.9" fill="none" stroke-opacity="0.8"/>
<path d="M2315.6 228.1L2481.6 219.0M2481.6 219.0L2635.5 210.7M-1023.4 301.2L-643.7 285.9" stroke="#5e616d" stroke-width="1.8" fill="none" stroke-opacity="0.8"/>
<path d="M2635.5 210.7L2778.5 202.9M-643.7 285.9L-299.6 272.0" stroke="#5e616d" stroke-width="1.7" fill="none" stroke-opacity="0.8"/>
<path d="M2778.5 202.9L2911.7 195.7M2911.7 195.7L3036.2 188.9M-299.6 272.0L13.6 259.4" stroke="#5e616d" stroke-width="1.6" fill="none" stroke-opacity="0.8"/>
<path d="M3036.2 188.9L3152.7 182.6M3152.7 182.6L3261.9 176.6M13.6 259.4L299.9 247.9M299.9 247.9L562.7 237.3" stroke="#5e616d" stroke-width="1.5" fill="none" stroke-opacity="0.8"/>
<path d="M3261.9 176.6L3364.7 171.1M3364.7 171.1L3461.4 165.8M562.7 237.3L804.6 227.5M804.6 227.5L1028.2 218.5" stroke="#5e616d" stroke-width="1.4" fill="none" stroke-opacity="0.8"/>
<path d="M3461.4 165.8L3552.6 160.8M1028.2 218.5L1235.4 210.2M1235.4 210.2L1427.9 202.4M-2096.7 271.4L-1702.7 258.8" stroke="#5e616d" stroke-width="1.3" fill="none" stroke-opacity="0.8"/>
<path d="M1427.9 202.4L1607.3 195.2M1607.3 195.2L1774.8 188.5M-1702.7 258.8L-1342.5 247.3M-1342.5 247.3L-1012.0 236.7" stroke="#5e616d" stroke-width="1.2" fill="none" stroke-opacity="0.8"/>
<path d="M-1230.2 169.4L-999.3 164.1" stroke="#5e616d" stroke-width="1.0" fill="none" stroke-opacity="0.0"/>
<path d="M289.9 522.9L296.6 337.8" stroke="#5d606c" stroke-width="5.0" fill="none"/>
<path d="M289.9 522.9L296.6 337.8" stroke="#3c6245" stroke-width="1.9" fill="none"/>
<path d="M296.6 337.8L299.9 247.9" stroke="#5d606c" stroke-width="4.7" fill="none"/>
<path d="M296.6 337.8L299.9 247.9" stroke="#3c6245" stroke-width="1.8" fill="none"/>
<path d="M299.9 247.9L301.8 194.7" stroke="#5d606c" stroke-width="3.7" fill="none"/>
<path d="M299.9 247.9L301.8 194.7" stroke="#3c6245" stroke-width="1.4" fill="none"/>
<path d="M301.8 194.7L303.1 159.6" stroke="#5d606c" stroke-width="3.0" fill="none"/>
<path d="M301.8 194.7L303.1 159.6" stroke="#3c6245" stroke-width="1.1" fill="none"/>
<path d="M303.1 159.6L304.0 134.7" stroke="#5d606c" stroke-width="2.5" fill="none"/>
<path d="M303.1 159.6L304.0 134.7" stroke="#3c6245" stroke-width="1.0" fill="none"/>
<path d="M304.0 134.7L304.7 116.1" stroke="#5d606c" stroke-width="2.2" fill="none"/>
<path d="M304.0 134.7L304.7 116.1" stroke="#3c6245" stroke-width="0.9" fill="none"/>
<path d="M304.7 116.1L305.2 101.7" stroke="#5d606c" stroke-width="1.9" fill="none"/>
<path d="M304.7 116.1L305.2 101.7" stroke="#3c6245" stroke-width="0.9" fill="none"/>
<path d="M305.2 101.7L305.7 90.2" stroke="#5d606c" stroke-width="1.7" fill="none"/>
<path d="M305.2 101.7L305.7 90.2" stroke="#3c6245" stroke-width="0.9" fill="none"/>
<path d="M305.7 90.2L306.0 80.8" stroke="#5d606c" stroke-width="1.6" fill="none"/>
<path d="M305.7 90.2L306.0 80.8" stroke="#3c6245" stroke-width="0.9" fill="none"/>
<path d="M306.0 80.8L306.3 73.0" stroke="#5d606c" stroke-width="1.6" fill="none"/>
<path d="M306.0 80.8L306.3 73.0" stroke="#3c6245" stroke-width="0.9" fill="none"/>
<path d="M306.3 73.0L306.5 66.4" stroke="#5d606c" stroke-width="1.6" fill="none"/>
<path d="M306.3 73.0L306.5 66.4" stroke="#3c6245" stroke-width="0.9" fill="none"/>
<path d="M306.5 66.4L306.7 60.8" stroke="#5d606c" stroke-width="1.6" fill="none"/>
<path d="M306.5 66.4L306.7 60.8" stroke="#3c6245" stroke-width="0.9" fill="none"/>
<path d="M306.7 60.8L306.9 55.9" stroke="#5d606c" stroke-width="1.6" fill="none"/>
<path d="M306.7 60.8L306.9 55.9" stroke="#3c6245" stroke-width="0.9" fill="none"/>
<path d="M306.9 55.9L307.1 51.6" stroke="#5d606c" stroke-width="1.6" fill="none"/>
<path d="M306.9 55.9L307.1 51.6" stroke="#3c6245" stroke-width="0.9" fill="none"/>
<path d="M307.1 51.6L307.2 47.9" stroke="#5d606c" stroke-width="1.6" fill="none"/>
<path d="M307.1 51.6L307.2 47.9" stroke="#3c6245" stroke-width="0.9" fill="none"/>
<path d="M307.2 47.9L307.3 44.5" stroke="#5d606c" stroke-width="1.6" fill="none"/>
<path d="M307.2 47.9L307.3 44.5" stroke="#3c6245" stroke-width="0.9" fill="none"/>
<path d="M307.3 44.5L307.4 41.5" stroke="#5d606c" stroke-width="1.6" fill="none"/>
<path d="M307.3 44.5L307.4 41.5" stroke="#3c6245" stroke-width="0.9" fill="none"/>
<path d="M307.4 41.5L307.5 38.9" stroke="#5d606c" stroke-width="1.6" fill="none"/>
<path d="M307.4 41.5L307.5 38.9" stroke="#3c6245" stroke-width="0.9" fill="none"/>
<path d="M307.5 38.9L307.6 36.4" stroke="#5d606c" stroke-width="1.6" fill="none"/>
<path d="M307.5 38.9L307.6 36.4" stroke="#3c6245" stroke-width="0.9" fill="none"/>
<path d="M307.6 36.4L307.7 34.2" stroke="#5d606c" stroke-width="1.6" fill="none"/>
<path d="M307.6 36.4L307.7 34.2" stroke="#3c6245" stroke-width="0.9" fill="none"/>
<path d="M307.7 34.2L307.8 32.2" stroke="#5d606c" stroke-width="1.6" fill="none"/>
<path d="M307.7 34.2L307.8 32.2" stroke="#3c6245" stroke-width="0.9" fill="none"/>
<path d="M307.8 32.2L307.8 30.3" stroke="#5d606c" stroke-width="1.6" fill="none"/>
<path d="M307.8 32.2L307.8 30.3" stroke="#3c6245" stroke-width="0.9" fill="none"/>
<path d="M307.8 30.3L307.9 28.6" stroke="#5d606c" stroke-width="1.6" fill="none"/>
<path d="M307.8 30.3L307.9 28.6" stroke="#3c6245" stroke-width="0.9" fill="none"/>
<path d="M307.9 28.6L308.0 27.1" stroke="#5d606c" stroke-width="1.6" fill="none"/>
<path d="M307.9 28.6L308.0 27.1" stroke="#3c6245" stroke-width="0.9" fill="none"/>
<path d="M308.0 27.1L308.0 25.6" stroke="#5d606c" stroke-width="1.6" fill="none"/>
<path d="M308.0 27.1L308.0 25.6" stroke="#3c6245" stroke-width="0.9" fill="none"/>
<path d="M308.0 25.6L308.1 24.3" stroke="#5d606c" stroke-width="1.6" fill="none"/>
<path d="M308.0 25.6L308.1 24.3" stroke="#3c6245" stroke-width="0.9" fill="none"/>
<path d="M308.1 24.3L308.1 23.0" stroke="#5d606c" stroke-width="1.6" fill="none"/>
<path d="M308.1 24.3L308.1 23.0" stroke="#3c6245" stroke-width="0.9" fill="none"/>
<rect x="44" y="35" width="1015" height="330" fill="url(#haze)"/>
<defs><radialGradient id="sph" cx="419.7" cy="152.2" r="50" gradientUnits="userSpaceOnUse"><stop offset="0" stop-color="#a8865f"/><stop offset="0.5" stop-color="#7d6047"/><stop offset="1" stop-color="#574232"/></radialGradient></defs>
<ellipse cx="461.5" cy="198.35" rx="57.7" ry="26.25" fill="#584435"/>
<ellipse cx="461.8" cy="201.2" rx="53.3" ry="19" fill="#fdc995"/>
<ellipse cx="436.5" cy="144.5" rx="52" ry="54.5" fill="#584435"/>
<circle cx="436.5" cy="142.3" r="46.3" fill="none" stroke="#fdebb8" stroke-width="2.6"/>
<circle cx="436.5" cy="142.3" r="45" fill="url(#sph)"/>
<circle cx="436.5" cy="142.3" r="43" fill="none" stroke="#fdebb8" stroke-width="4.6" stroke-dasharray="8.8 6.21" stroke-dashoffset="-1.6"/>
<line x1="451" y1="106" x2="451" y2="156" stroke="#2a7ae8" stroke-width="3.3"/>
<polygon points="451,88.8 456.4,107.6 445.7,107.6" fill="#2a7ae8"/>
<polyline points="451.2,140.4 470.5,140.2" stroke="#2a7ae8" stroke-width="1.7" fill="none"/>
<polyline points="469.8,140.6 469.8,158.2" stroke="#dd3010" stroke-width="1.8" fill="none"/>
<polyline points="454,142 454,161.3 473.5,161.3" stroke="#62b014" stroke-width="1.8" fill="none"/>
<circle cx="450.8" cy="158.9" r="5.4" fill="#ececec"/>
<line x1="456" y1="158.2" x2="502" y2="158" stroke="#d9300a" stroke-width="3.2"/>
<polygon points="519.7,157.5 501.4,152.3 501.4,162.7" fill="#d32e0a"/>
<line x1="452" y1="159.5" x2="457.5" y2="165.5" stroke="#56a012" stroke-width="2.2"/>
<circle cx="458.75" cy="167.8" r="5.3" fill="#56a012"/>
<path d="M129.4 132.7L100.2 172.1M129.4 132.7L109.9 163.3M129.4 132.7L161.4 162.3M129.4 132.7L152 173M132.8 202.2L100.2 172.1M132.8 202.2L109.9 163.3M132.8 202.2L161.4 162.3M132.8 202.2L152 173M100.2 172.1L109.9 163.3M109.9 163.3L161.4 162.3M161.4 162.3L152 173M152 173L100.2 172.1" stroke="#7f7ff7" stroke-width="1.1" fill="none" stroke-linejoin="round"/>
<line x1="129.4" y1="114" x2="131.5" y2="167" stroke="#1818dc" stroke-width="1.7"/>
<line x1="131.5" y1="167" x2="187" y2="165.8" stroke="#ea1c1c" stroke-width="1.6"/>
<line x1="131.5" y1="167" x2="121.5" y2="177.5" stroke="#2ad82a" stroke-width="1.6"/>
<path d="M742.75 115.5L708.5 147.75M742.75 115.5L754.75 146.5M742.75 115.5L774.4 151.75M742.75 115.5L728.5 155.25M740.25 185.75L708.5 147.75M740.25 185.75L754.75 146.5M740.25 185.75L774.4 151.75M740.25 185.75L728.5 155.25M708.5 147.75L754.75 146.5M754.75 146.5L774.4 151.75M774.4 151.75L728.5 155.25M728.5 155.25L708.5 147.75" stroke="#7b7bf8" stroke-width="1.1" fill="none" stroke-linejoin="round"/>
<path d="M563 258L532.5 286.6M563 258L580.2 284.5M563 258L591.7 296.8M563 258L544 300.75M562.5 326.5L532.5 286.6M562.5 326.5L580.2 284.5M562.5 326.5L591.7 296.8M562.5 326.5L544 300.75M532.5 286.6L580.2 284.5M580.2 284.5L591.7 296.8M591.7 296.8L544 300.75M544 300.75L532.5 286.6" stroke="#f01818" stroke-width="1.1" fill="none" stroke-linejoin="round"/>
<text x="137.9" y="181.10000000000002" font-family="Liberation Sans" font-size="14.6" fill="#000" fill-opacity="0.9" stroke="#000" stroke-opacity="0.5" stroke-width="0.6">BPTransform</text><text x="136.6" y="179.8" font-family="Liberation Sans" font-size="14.6" fill="#f6f6f6" stroke="#f6f6f6" stroke-width="0.25">BPTransform</text>
<text x="747.8" y="164.3" font-family="Liberation Sans" font-size="14.6" fill="#000" fill-opacity="0.9" stroke="#000" stroke-opacity="0.5" stroke-width="0.6">MyVector_MakeEditWidget</text><text x="746.5" y="163" font-family="Liberation Sans" font-size="14.6" fill="#f6f6f6" stroke="#f6f6f6" stroke-width="0.25">MyVector_MakeEditWidget</text>
<text x="569.0" y="306.40000000000003" font-family="Liberation Sans" font-size="14.6" fill="#000" fill-opacity="0.9" stroke="#000" stroke-opacity="0.5" stroke-width="0.6">Exceed max length:100</text><text x="567.7" y="305.1" font-family="Liberation Sans" font-size="14.6" fill="#f6f6f6" stroke="#f6f6f6" stroke-width="0.25">Exceed max length:100</text>
</svg>
</div>
<div class="r" style="left:1237px;top:68px;width:3px;height:281px;background:#1a1a1a;"></div>
<div class="r" style="left:1240px;top:68px;width:663px;height:39px;background:#2f2f2f;"></div>
<div class="r" style="left:1240px;top:107px;width:663px;height:1px;background:#1b1b1b;"></div>
<div class="r" style="left:1240px;top:108px;width:663px;height:39px;background:#232323;"></div>
<div class="r" style="left:1240px;top:147px;width:663px;height:1px;background:#1b1b1b;"></div>
<div class="r" style="left:1240px;top:148px;width:663px;height:40px;background:#232323;"></div>
<div class="r" style="left:1240px;top:188px;width:663px;height:1px;background:#1b1b1b;"></div>
<div class="r" style="left:1240px;top:189px;width:663px;height:39px;background:#2e2e2e;"></div>
<div class="r" style="left:1240px;top:228px;width:663px;height:1px;background:#1b1b1b;"></div>
<div class="r" style="left:1240px;top:229px;width:663px;height:40px;background:#232323;"></div>
<div class="r" style="left:1240px;top:269px;width:663px;height:1px;background:#1b1b1b;"></div>
<div class="r" style="left:1240px;top:270px;width:663px;height:39px;background:#232323;"></div>
<div class="r" style="left:1240px;top:309px;width:663px;height:1px;background:#1b1b1b;"></div>
<div class="r" style="left:1240px;top:310px;width:663px;height:39px;background:#232323;"></div>
<div class="r" style="left:1532px;top:108px;width:2px;height:241px;background:#1b1b1b;"></div>
<div class="r" style="left:1875px;top:108px;width:1px;height:241px;background:#1b1b1b;"></div>
<svg class="r" style="left:1247px;top:81.5px" width="16" height="11" viewBox="0 0 16 11"><path d="M1.2 0.6 H14.8 Q15.6 0.6 15.1 1.4 L8.6 10.2 Q8 11 7.4 10.2 L0.9 1.4 Q0.4 0.6 1.2 0.6Z" fill="#8c8c8c"/></svg>
<div class="t" style="left:1273.2px;top:79.11px;font-size:17px;line-height:17px;font-weight:700;color:#d4d4d4;transform:scaleX(0.885);transform-origin:0 0">Variable</div>
<div class="t" style="left:1273px;top:120.26px;font-size:16px;line-height:16px;font-weight:400;color:#c4c4c4;">Variable Name</div>
<div class="t" style="left:1273px;top:161.46px;font-size:16px;line-height:16px;font-weight:400;color:#c4c4c4;">Variable Type</div>
<div class="t" style="left:1273px;top:201.46px;font-size:16px;line-height:16px;font-weight:400;color:#c4c4c4;">Description</div>
<div class="t" style="left:1273px;top:242.36px;font-size:16px;line-height:16px;font-weight:400;color:#c4c4c4;">Instance Editable</div>
<div class="t" style="left:1273px;top:282.86px;font-size:16px;line-height:16px;font-weight:400;color:#c4c4c4;">Blueprint Read Only</div>
<div class="t" style="left:1273px;top:323.36px;font-size:16px;line-height:16px;font-weight:400;color:#c4c4c4;">Show 3D Widget</div>
<div class="r" style="left:1552px;top:113px;width:187px;height:29.5px;background:#0f0f0f;border:2px solid #2f2f2f;border-radius:6px;box-sizing:border-box"></div>
<div class="t" style="left:1564.2px;top:117.96px;font-size:16px;line-height:16px;font-weight:400;color:#d0d0d0;">BPTransform</div>
<div class="r" style="left:1552px;top:150.5px;width:187px;height:35px;background:#0f0f0f;border:2px solid #2f2f2f;border-radius:6px;box-sizing:border-box"></div>
<div class="r" style="left:1567px;top:163px;width:18px;height:10px;background:#fe7800;border-radius:5px"></div>
<div class="t" style="left:1594.3px;top:161.16px;font-size:16px;line-height:16px;font-weight:400;color:#d0d0d0;">Transform</div>
<svg class="r" style="left:1704px;top:163.5px" width="16" height="10" viewBox="0 0 16 10"><path d="M1.2 1.4 L8 8.4 L14.8 1.4" stroke="#d6d6d6" stroke-width="2" fill="none"/></svg>
<div class="r" style="left:1745px;top:163px;width:18px;height:10px;background:#fe7800;border-radius:5px"></div>
<svg class="r" style="left:1770px;top:163.5px" width="16" height="10" viewBox="0 0 16 10"><path d="M1.2 1.4 L8 8.4 L14.8 1.4" stroke="#d6d6d6" stroke-width="2" fill="none"/></svg>
<div class="r" style="left:1552px;top:194.5px;width:318px;height:29px;background:#0f0f0f;border:2px solid #303030;border-radius:6px;box-sizing:border-box"></div>
<svg class="r" style="left:1552px;top:236px" width="27" height="27" viewBox="0 0 27 27"><rect x="1" y="1" width="25" height="25" rx="4" fill="#0f0f0f" stroke="#323232" stroke-width="2"/><path d="M7.2 14 L11.8 18.6 L21.2 9" stroke="#0b78f0" stroke-width="3.2" fill="none" stroke-linecap="round" stroke-linejoin="round"/></svg>
<svg class="r" style="left:1552px;top:276.5px" width="27" height="27" viewBox="0 0 27 27"><rect x="1" y="1" width="25" height="25" rx="4" fill="#0f0f0f" stroke="#323232" stroke-width="2"/></svg>
<svg class="r" style="left:1552px;top:317px" width="27" height="27" viewBox="0 0 27 27"><rect x="1" y="1" width="25" height="25" rx="4" fill="#0f0f0f" stroke="#323232" stroke-width="2"/><path d="M7.2 14 L11.8 18.6 L21.2 9" stroke="#0b78f0" stroke-width="3.2" fill="none" stroke-linecap="round" stroke-linejoin="round"/></svg>
<div class="r" style="left:44px;top:446px;width:3px;height:354px;background:#1f1f1f;"></div>
<div class="r" style="left:47px;top:446px;width:1059px;height:31px;background:#2f2f2f;"></div>
<div class="r" style="left:47px;top:477px;width:1059px;height:1px;background:#1a1a1a;"></div>
<div class="r" style="left:47px;top:478px;width:1059px;height:39px;background:#242424;"></div>
<div class="r" style="left:47px;top:517px;width:1059px;height:2px;background:#1a1a1a;"></div>
<div class="r" style="left:47px;top:519px;width:24px;height:39px;background:linear-gradient(90deg,#232323 0,#232323 16px,#1c1c1c 24px);"></div>
<div class="r" style="left:71px;top:519px;width:1035px;height:39px;background:#272727;"></div>
<div class="r" style="left:47px;top:558px;width:1059px;height:1px;background:#1a1a1a;"></div>
<div class="r" style="left:47px;top:559px;width:24px;height:40px;background:linear-gradient(90deg,#232323 0,#232323 16px,#1c1c1c 24px);"></div>
<div class="r" style="left:71px;top:559px;width:1035px;height:40px;background:#272727;"></div>
<div class="r" style="left:47px;top:599px;width:1059px;height:1px;background:#1a1a1a;"></div>
<div class="r" style="left:47px;top:600px;width:24px;height:39px;background:linear-gradient(90deg,#232323 0,#232323 16px,#1c1c1c 24px);"></div>
<div class="r" style="left:71px;top:600px;width:1035px;height:39px;background:#272727;"></div>
<div class="r" style="left:47px;top:639px;width:1059px;height:1px;background:#1a1a1a;"></div>
<div class="r" style="left:47px;top:640px;width:1059px;height:39px;background:#2f2f2f;"></div>
<div class="r" style="left:47px;top:679px;width:1059px;height:1px;background:#1a1a1a;"></div>
<div class="r" style="left:47px;top:680px;width:1059px;height:40px;background:#232323;"></div>
<div class="r" style="left:47px;top:720px;width:1059px;height:1px;background:#1a1a1a;"></div>
<div class="r" style="left:47px;top:721px;width:1059px;height:39px;background:#2c2c2c;"></div>
<div class="r" style="left:47px;top:760px;width:1059px;height:1px;background:#1a1a1a;"></div>
<div class="r" style="left:47px;top:761px;width:1059px;height:39px;background:#232323;"></div>
<div class="r" style="left:470px;top:478px;width:2px;height:39px;background:#1b1b1b;"></div>
<div class="r" style="left:1072px;top:478px;width:1px;height:39px;background:#1b1b1b;"></div>
<div class="r" style="left:470px;top:519px;width:2px;height:39px;background:#1b1b1b;"></div>
<div class="r" style="left:1072px;top:519px;width:1px;height:39px;background:#1b1b1b;"></div>
<div class="r" style="left:470px;top:559px;width:2px;height:40px;background:#1b1b1b;"></div>
<div class="r" style="left:1072px;top:559px;width:1px;height:40px;background:#1b1b1b;"></div>
<div class="r" style="left:470px;top:600px;width:2px;height:39px;background:#1b1b1b;"></div>
<div class="r" style="left:1072px;top:600px;width:1px;height:39px;background:#1b1b1b;"></div>
<div class="r" style="left:470px;top:680px;width:2px;height:40px;background:#1b1b1b;"></div>
<div class="r" style="left:1072px;top:680px;width:1px;height:40px;background:#1b1b1b;"></div>
<div class="r" style="left:470px;top:721px;width:2px;height:39px;background:#1b1b1b;"></div>
<div class="r" style="left:1072px;top:721px;width:1px;height:39px;background:#1b1b1b;"></div>
<div class="r" style="left:470px;top:761px;width:2px;height:39px;background:#1b1b1b;"></div>
<div class="r" style="left:1072px;top:761px;width:1px;height:39px;background:#1b1b1b;"></div>
<svg class="r" style="left:54px;top:451.5px" width="16" height="11" viewBox="0 0 16 11"><path d="M1.2 0.6 H14.8 Q15.6 0.6 15.1 1.4 L8.6 10.2 Q8 11 7.4 10.2 L0.9 1.4 Q0.4 0.6 1.2 0.6Z" fill="#8c8c8c"/></svg>
<div class="t" style="left:80.2px;top:449.31px;font-size:17px;line-height:17px;font-weight:700;color:#d4d4d4;transform:scaleX(0.885);transform-origin:0 0">Default</div>
<svg class="r" style="left:54px;top:491.5px" width="16" height="11" viewBox="0 0 16 11"><path d="M1.2 0.6 H14.8 Q15.6 0.6 15.1 1.4 L8.6 10.2 Q8 11 7.4 10.2 L0.9 1.4 Q0.4 0.6 1.2 0.6Z" fill="#8c8c8c"/></svg>
<div class="t" style="left:79.2px;top:490.16px;font-size:16px;line-height:16px;font-weight:400;color:#c4c4c4;">BPTransform</div>
<svg class="r" style="left:1078px;top:486px" width="26" height="24" viewBox="0 0 26 24"><path d="M9.9 5.6 L5.2 10.4 L9.9 15.1 M5.4 10.4 H17.6 A3.8 3.8 0 0 1 17.6 18 H15.3" stroke="#cfcfcf" stroke-width="1.9" fill="none" stroke-linecap="round" stroke-linejoin="round"/></svg>
<div class="t" style="left:103.2px;top:531.36px;font-size:16px;line-height:16px;font-weight:400;color:#c4c4c4;">Location</div>
<div class="t" style="left:103.2px;top:571.56px;font-size:16px;line-height:16px;font-weight:400;color:#c4c4c4;">Rotation</div>
<div class="t" style="left:103.2px;top:612.06px;font-size:16px;line-height:16px;font-weight:400;color:#c4c4c4;">Scale</div>
<svg class="r" style="left:54px;top:653.5px" width="16" height="11" viewBox="0 0 16 11"><path d="M1.2 0.6 H14.8 Q15.6 0.6 15.1 1.4 L8.6 10.2 Q8 11 7.4 10.2 L0.9 1.4 Q0.4 0.6 1.2 0.6Z" fill="#8c8c8c"/></svg>
<div class="t" style="left:80.2px;top:651.31px;font-size:17px;line-height:17px;font-weight:700;color:#d4d4d4;transform:scaleX(0.885);transform-origin:0 0">Edit Widget</div>
<svg class="r" style="left:57px;top:691.5px" width="11" height="16" viewBox="0 0 11 16"><path d="M0.6 1.2 V14.8 Q0.6 15.6 1.4 15.1 L10.2 8.6 Q11 8 10.2 7.4 L1.4 0.9 Q0.6 0.4 0.6 1.2Z" fill="#8c8c8c"/></svg>
<div class="t" style="left:79.2px;top:692.86px;font-size:16px;line-height:16px;font-weight:400;color:#c4c4c4;">My Vector</div>
<svg class="r" style="left:57px;top:732px" width="11" height="16" viewBox="0 0 11 16"><path d="M0.6 1.2 V14.8 Q0.6 15.6 1.4 15.1 L10.2 8.6 Q11 8 10.2 7.4 L1.4 0.9 Q0.6 0.4 0.6 1.2Z" fill="#8c8c8c"/></svg>
<div class="t" style="left:79.2px;top:733.36px;font-size:16px;line-height:16px;font-weight:400;color:#c4c4c4;">My Vector Make Edit Widget</div>
<svg class="r" style="left:57px;top:772.5px" width="11" height="16" viewBox="0 0 11 16"><path d="M0.6 1.2 V14.8 Q0.6 15.6 1.4 15.1 L10.2 8.6 Q11 8 10.2 7.4 L1.4 0.9 Q0.6 0.4 0.6 1.2Z" fill="#8c8c8c"/></svg>
<div class="t" style="left:79.2px;top:773.86px;font-size:16px;line-height:16px;font-weight:400;color:#c4c4c4;">My Vector Make Edit Widget Validate</div>
<svg class="r" style="left:1078px;top:688px" width="26" height="24" viewBox="0 0 26 24"><path d="M9.9 5.6 L5.2 10.4 L9.9 15.1 M5.4 10.4 H17.6 A3.8 3.8 0 0 1 17.6 18 H15.3" stroke="#cfcfcf" stroke-width="1.9" fill="none" stroke-linecap="round" stroke-linejoin="round"/></svg>
<svg class="r" style="left:1078px;top:729px" width="26" height="24" viewBox="0 0 26 24"><path d="M9.9 5.6 L5.2 10.4 L9.9 15.1 M5.4 10.4 H17.6 A3.8 3.8 0 0 1 17.6 18 H15.3" stroke="#cfcfcf" stroke-width="1.9" fill="none" stroke-linecap="round" stroke-linejoin="round"/></svg>
<svg class="r" style="left:1078px;top:769px" width="26" height="24" viewBox="0 0 26 24"><path d="M9.9 5.6 L5.2 10.4 L9.9 15.1 M5.4 10.4 H17.6 A3.8 3.8 0 0 1 17.6 18 H15.3" stroke="#cfcfcf" stroke-width="1.9" fill="none" stroke-linecap="round" stroke-linejoin="round"/></svg>
<div class="r" style="left:490px;top:523.5px;width:184px;height:29.5px;background:#0f0f0f;border:2px solid #353535;border-radius:5px;box-sizing:border-box"></div>
<div class="r" style="left:494px;top:528.5px;width:3px;height:19.5px;background:#d42c00;border-radius:2px 0 0 2px"></div>
<div class="t" style="left:502.3px;top:531.36px;font-size:16px;line-height:16px;font-weight:400;color:#ececec;">-100.0</div>
<div class="r" style="left:679px;top:523.5px;width:184px;height:29.5px;background:#0f0f0f;border:2px solid #353535;border-radius:5px;box-sizing:border-box"></div>
<div class="r" style="left:683px;top:528.5px;width:3px;height:19.5px;background:#6cb000;border-radius:2px 0 0 2px"></div>
<div class="t" style="left:691.3px;top:531.36px;font-size:16px;line-height:16px;font-weight:400;color:#ececec;">0.0</div>
<div class="r" style="left:868px;top:523.5px;width:184px;height:29.5px;background:#0f0f0f;border:2px solid #353535;border-radius:5px;box-sizing:border-box"></div>
<div class="r" style="left:872px;top:528.5px;width:3px;height:19.5px;background:#2f7fe6;border-radius:2px 0 0 2px"></div>
<div class="t" style="left:880.3px;top:531.36px;font-size:16px;line-height:16px;font-weight:400;color:#ececec;">0.0</div>
<div class="r" style="left:490px;top:563.5px;width:184px;height:29.5px;background:#0f0f0f;border:2px solid #353535;border-radius:5px;box-sizing:border-box"></div>
<div class="r" style="left:494px;top:568.5px;width:3px;height:19.5px;background:#d42c00;border-radius:2px 0 0 2px"></div>
<div class="t" style="left:502.3px;top:571.36px;font-size:16px;line-height:16px;font-weight:400;color:#ececec;">-0.0</div>
<div class="r" style="left:679px;top:563.5px;width:184px;height:29.5px;background:#0f0f0f;border:2px solid #353535;border-radius:5px;box-sizing:border-box"></div>
<div class="r" style="left:683px;top:568.5px;width:3px;height:19.5px;background:#6cb000;border-radius:2px 0 0 2px"></div>
<div class="t" style="left:691.3px;top:571.36px;font-size:16px;line-height:16px;font-weight:400;color:#ececec;">0.0</div>
<div class="r" style="left:868px;top:563.5px;width:184px;height:29.5px;background:#0f0f0f;border:2px solid #353535;border-radius:5px;box-sizing:border-box"></div>
<div class="r" style="left:872px;top:568.5px;width:3px;height:19.5px;background:#2f7fe6;border-radius:2px 0 0 2px"></div>
<div class="t" style="left:880.3px;top:571.36px;font-size:16px;line-height:16px;font-weight:400;color:#ececec;">0.0</div>
<div class="r" style="left:490px;top:604.5px;width:184px;height:29.5px;background:#0f0f0f;border:2px solid #353535;border-radius:5px;box-sizing:border-box"></div>
<div class="r" style="left:494px;top:609.5px;width:3px;height:19.5px;background:#d42c00;border-radius:2px 0 0 2px"></div>
<div class="t" style="left:502.3px;top:612.36px;font-size:16px;line-height:16px;font-weight:400;color:#ececec;">1.0</div>
<div class="r" style="left:679px;top:604.5px;width:184px;height:29.5px;background:#0f0f0f;border:2px solid #353535;border-radius:5px;box-sizing:border-box"></div>
<div class="r" style="left:683px;top:609.5px;width:3px;height:19.5px;background:#6cb000;border-radius:2px 0 0 2px"></div>
<div class="t" style="left:691.3px;top:612.36px;font-size:16px;line-height:16px;font-weight:400;color:#ececec;">1.0</div>
<div class="r" style="left:868px;top:604.5px;width:184px;height:29.5px;background:#0f0f0f;border:2px solid #353535;border-radius:5px;box-sizing:border-box"></div>
<div class="r" style="left:872px;top:609.5px;width:3px;height:19.5px;background:#2f7fe6;border-radius:2px 0 0 2px"></div>
<div class="t" style="left:880.3px;top:612.36px;font-size:16px;line-height:16px;font-weight:400;color:#ececec;">1.0</div>
<div class="r" style="left:490px;top:685.5px;width:184px;height:29.5px;background:#0f0f0f;border:2px solid #353535;border-radius:5px;box-sizing:border-box"></div>
<div class="t" style="left:502.3px;top:692.86px;font-size:16px;line-height:16px;font-weight:400;color:#ececec;">442.612245</div>
<div class="r" style="left:679px;top:685.5px;width:184px;height:29.5px;background:#0f0f0f;border:2px solid #353535;border-radius:5px;box-sizing:border-box"></div>
<div class="t" style="left:691.3px;top:692.86px;font-size:16px;line-height:16px;font-weight:400;color:#ececec;">0.0</div>
<div class="r" style="left:868px;top:685.5px;width:184px;height:29.5px;background:#0f0f0f;border:2px solid #353535;border-radius:5px;box-sizing:border-box"></div>
<div class="t" style="left:880.3px;top:692.86px;font-size:16px;line-height:16px;font-weight:400;color:#ececec;">0.0</div>
<div class="r" style="left:490px;top:726.5px;width:184px;height:29.5px;background:#0f0f0f;border:2px solid #353535;border-radius:5px;box-sizing:border-box"></div>
<div class="t" style="left:502.3px;top:733.86px;font-size:16px;line-height:16px;font-weight:400;color:#ececec;">100.0</div>
<div class="r" style="left:679px;top:726.5px;width:184px;height:29.5px;background:#0f0f0f;border:2px solid #353535;border-radius:5px;box-sizing:border-box"></div>
<div class="t" style="left:691.3px;top:733.86px;font-size:16px;line-height:16px;font-weight:400;color:#ececec;">0.0</div>
<div class="r" style="left:868px;top:726.5px;width:184px;height:29.5px;background:#0f0f0f;border:2px solid #353535;border-radius:5px;box-sizing:border-box"></div>
<div class="t" style="left:880.3px;top:733.86px;font-size:16px;line-height:16px;font-weight:400;color:#ececec;">0.0</div>
<div class="r" style="left:490px;top:766.5px;width:184px;height:29.5px;background:#0f0f0f;border:2px solid #353535;border-radius:5px;box-sizing:border-box"></div>
<div class="t" style="left:502.3px;top:773.86px;font-size:16px;line-height:16px;font-weight:400;color:#ececec;">0.0</div>
<div class="r" style="left:679px;top:766.5px;width:184px;height:29.5px;background:#0f0f0f;border:2px solid #1b6fd8;border-radius:5px;box-sizing:border-box"></div>
<div class="r" style="left:693.8px;top:771px;width:40.6px;height:19.3px;background:#0d5fcf;"></div>
<div class="t" style="left:693.8px;top:773.86px;font-size:16px;line-height:16px;font-weight:400;color:#ffffff;">150.0</div>
<div class="r" style="left:868px;top:766.5px;width:184px;height:29.5px;background:#0f0f0f;border:2px solid #353535;border-radius:5px;box-sizing:border-box"></div>
<div class="t" style="left:880.3px;top:773.86px;font-size:16px;line-height:16px;font-weight:400;color:#ececec;">0.0</div>
<div class="r" style="left:1106px;top:446px;width:24px;height:354px;background:#1c1c1c;"></div>
<div class="r" style="left:1112px;top:446px;width:12px;height:353px;background:#5a5a5a;border-radius:0 0 6px 6px"></div>
</body></html>
